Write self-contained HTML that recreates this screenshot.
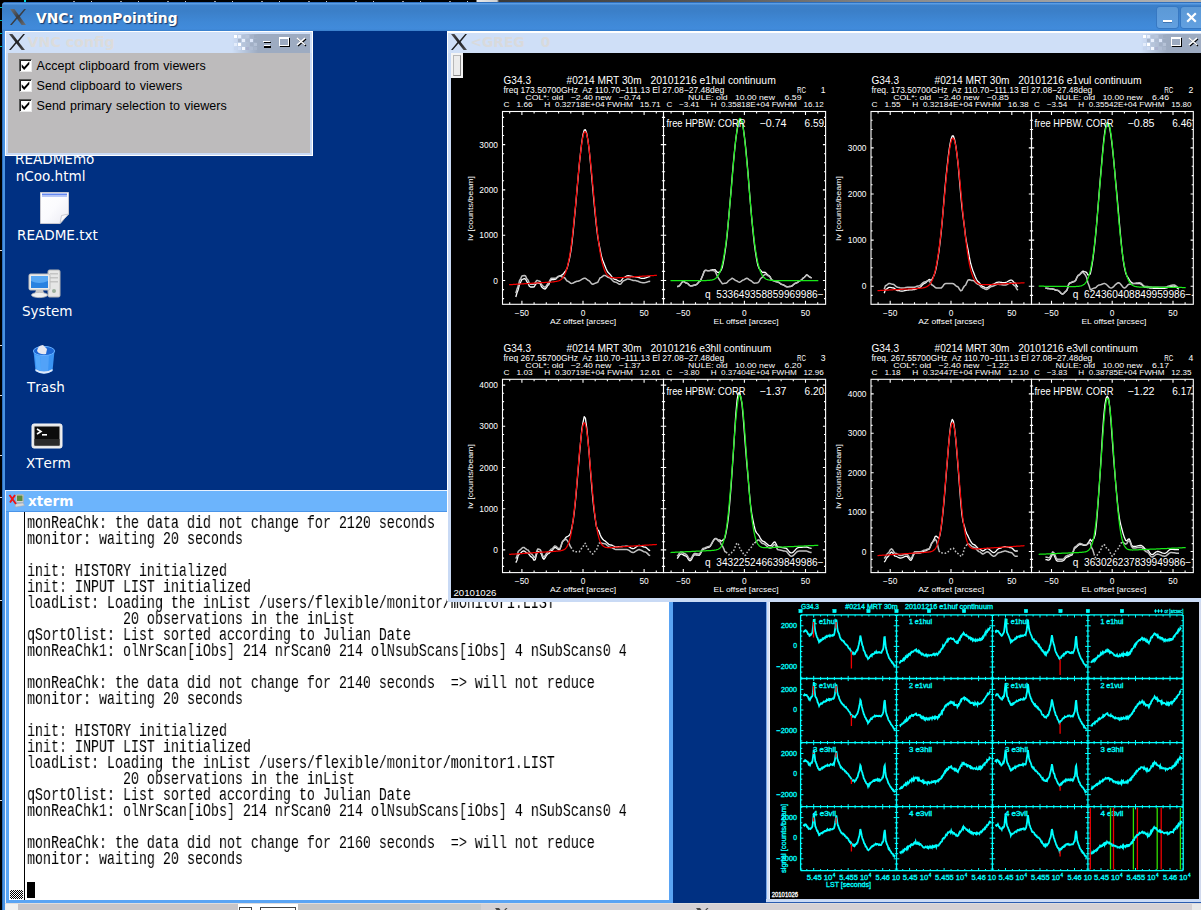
<!DOCTYPE html>
<html lang="en"><head><meta charset="utf-8"><title>VNC: monPointing</title>
<style>
html,body{margin:0;padding:0;background:#000;}
body{width:1201px;height:910px;overflow:hidden;position:relative;font-family:"DejaVu Sans","Liberation Sans",sans-serif;}
.a{position:absolute;}
#topstrip{left:0;top:0;width:1201px;height:2.5px;background:linear-gradient(90deg,#000 0,#000 476px,#e8e8e8 477px,#d0d0d0 497px,#3a3a3a 499px,#555 700px,#8a8a8a 900px,#b4b4b4 1201px);}
#outer{left:1.5px;top:2px;width:1199.5px;height:908px;background:#4a93e3;border-radius:4px 0 0 0;}
#otitle{left:2px;top:2px;width:1199px;height:29px;border-radius:4px 0 0 0;background:linear-gradient(180deg,#2e6fbd 0,#2e6fbd 1px,#5b9de4 1px,#5b9de4 2px,#3c80c9 3px,#3b7fc8 9px,#3f88d6 20px,#418bdb 27px,#3a7fcb 29px);}
.ot{left:36px;top:9px;font-weight:bold;font-size:13.8px;line-height:18px;color:#fff;text-shadow:1px 1px 1px rgba(10,30,70,.75);white-space:nowrap;}
.obtn{top:7px;width:21px;height:21px;border-radius:3px;background:linear-gradient(180deg,#5c99d6,#62a0e0);box-shadow:0 0 0 1px #3778c2;}
#desk{left:5px;top:31px;width:1196px;height:873px;background:#003082;}
.lbl{color:#fff;font-size:13.55px;line-height:17px;white-space:nowrap;font-kerning:none;margin-top:1px;}
.it{color:#dcdcdc;font-weight:bold;font-size:13.8px;line-height:18px;white-space:nowrap;}
.cb{width:11px;height:11px;background:#fff;border:1px solid #555;border-right-color:#e8e8e8;border-bottom-color:#e8e8e8;box-shadow:inset 1px 1px 0 #222;}
.cbl{font-family:"Liberation Sans",sans-serif;font-size:12.5px;word-spacing:.8px;line-height:14px;color:#000;white-space:nowrap;}
pre.xt{margin:0;font-family:"Liberation Mono","DejaVu Sans Mono",monospace;font-size:17.6px;line-height:16px;color:#000;white-space:pre;transform:scaleX(.75744);transform-origin:0 0;will-change:transform;}
svg text{white-space:pre;}
</style></head><body>
<div id="topstrip" class="a"></div>
<div class="a" style="left:0px;top:7px;width:1.5px;height:1px;background:#00b8b8;"></div>
<div class="a" style="left:0px;top:20px;width:1.5px;height:1px;background:#00b8b8;"></div>
<div class="a" style="left:0px;top:33px;width:1.5px;height:1px;background:#00b8b8;"></div>
<div class="a" style="left:0px;top:46px;width:1.5px;height:1px;background:#00b8b8;"></div>
<div class="a" style="left:0px;top:250px;width:1.5px;height:1px;background:#ddd;"></div>
<div class="a" style="left:0px;top:345px;width:1.5px;height:1px;background:#ddd;"></div>
<div class="a" style="left:0px;top:395px;width:1.5px;height:1px;background:#ddd;"></div>
<div class="a" style="left:0px;top:455px;width:1.5px;height:1px;background:#ddd;"></div>
<div class="a" style="left:0px;top:497px;width:1.5px;height:1px;background:#ddd;"></div>
<div class="a" style="left:0px;top:600px;width:1.5px;height:1px;background:#ddd;"></div>
<div class="a" style="left:0px;top:800px;width:1.5px;height:1px;background:#ddd;"></div>
<div id="outer" class="a"></div>
<div class="a" style="left:60px;top:1px;width:416px;height:1px;background:repeating-linear-gradient(90deg,transparent 0,transparent 13px,#999 13px,#999 15px,transparent 15px,transparent 31px,#ccc 31px,#ccc 32px,transparent 32px,transparent 47px);"></div>
<div class="a" style="left:24px;top:0px;width:2px;height:2px;background:#00d8d8;"></div>
<div class="a" style="left:1.5px;top:4px;width:1.2px;height:906px;background:#2e6fbd;"></div>
<div id="otitle" class="a"></div>
<svg class="a" style="left:10px;top:9px" width="16" height="16" viewBox="0 0 16 16"><defs><linearGradient id="xg10_9" x1="0" y1="0" x2="1" y2="1"><stop offset="0" stop-color="#6c7076"/><stop offset=".5" stop-color="#3a3d42"/><stop offset="1" stop-color="#6c7076"/></linearGradient></defs><path d="M0 0 L4.4 0 L16 16 L11.6 16 Z" fill="url(#xg10_9)"/><path d="M14.2 0 L16 0 L9.1 8.6 L8.1 7.3 Z M1.8 16 L0 16 L7 7.4 L8 8.7 Z" fill="#3a3d42"/></svg>
<div class="a ot">VNC: monPointing</div>
<div class="a obtn" style="left:1157px"><div class="a" style="left:6px;top:13px;width:9px;height:2px;background:#fff;box-shadow:0 1px 0 rgba(40,90,150,.6)"></div></div>
<div class="a obtn" style="left:1181px;width:22px;border-radius:3px 0 0 3px"><svg class="a" style="left:5px;top:5px" width="11" height="11" viewBox="0 0 11 11"><path d="M1.2 1.2 L9.8 9.8 M9.8 1.2 L1.2 9.8" stroke="#fff" stroke-width="2.2" fill="none"/></svg></div>
<div id="desk" class="a"></div>
<div class="a lbl" style="left:15px;top:150px">READMEmo</div>
<div class="a lbl" style="left:15.7px;top:167px">nCoo.html</div>
<svg class="a" style="left:38px;top:190px" width="34" height="36" viewBox="0 0 34 36">
<defs><linearGradient id="pg" x1="0" y1="0" x2="1" y2="1"><stop offset="0" stop-color="#ffffff"/><stop offset=".5" stop-color="#fbfbfe"/><stop offset="1" stop-color="#ebebf3"/></linearGradient></defs>
<path d="M2.5 2.5 H30.5 V24 L22 33.5 H2.5 Z" fill="url(#pg)" stroke="#c8c8d0" stroke-width="1"/>
<rect x="4" y="3.5" width="25" height="2" fill="#6488f0"/><rect x="4" y="5.5" width="25" height="1.5" fill="#b8c8f8"/>
<path d="M22 33.5 L23.5 25.5 L30.5 24 Z" fill="#f8f8fc" stroke="#c0c0c8" stroke-width=".8"/></svg>
<div class="a lbl" style="left:17px;top:226.3px">README.txt</div>
<svg class="a" style="left:27px;top:268px" width="36" height="32" viewBox="0 0 36 32">
<rect x="21" y="2" width="12" height="27" rx="1.5" fill="#e6e6e6" stroke="#b4b4b4"/>
<rect x="23" y="5" width="8" height="1.5" fill="#c4c4c4"/><rect x="23" y="9" width="8" height="1.5" fill="#c4c4c4"/><rect x="23" y="13" width="8" height="1.5" fill="#c4c4c4"/>
<circle cx="27" cy="23" r="2" fill="#9cb09c"/>
<rect x="2" y="6" width="21" height="16" rx="1.5" fill="#ececec" stroke="#bcbcbc"/>
<rect x="4" y="8" width="17" height="12" fill="#2a82e0"/><path d="M4 8 H21 V13 Q12 17 4 13 Z" fill="#58a8f4"/>
<path d="M9 22 H16 L17 25 H8 Z" fill="#c8c8c8"/><ellipse cx="12.5" cy="27" rx="8" ry="2.6" fill="#f0f0f0" stroke="#bdbdbd" stroke-width=".8"/></svg>
<div class="a lbl" style="left:22px;top:302px">System</div>
<svg class="a" style="left:31px;top:343px" width="26" height="34" viewBox="0 0 26 34">
<path d="M2.5 8 L4.5 28 Q13 33 21.5 28 L23.5 8 Z" fill="#3a94f4"/><path d="M9 12 L10 29.5 Q13 30.3 17 29.5 L18 12 Z" fill="#62acfa" opacity=".6"/>
<path d="M4.5 26 Q13 31 21.5 26 L21.5 28 Q13 33.5 4.5 28 Z" fill="#dfe9f8"/>
<ellipse cx="13" cy="8" rx="10.6" ry="4.6" fill="#1c66d4" stroke="#66b0ff" stroke-width="1"/>
<path d="M6 8 Q7 2 12 2 L16 6 L15 11 Q9 12 6 8 Z" fill="#e8e8f0"/>
<path d="M4 12 L5.5 26 Q8 27.5 10 28 L9 13 Z" fill="#5cb0ff" opacity=".7"/></svg>
<div class="a lbl" style="left:27px;top:378px">Trash</div>
<svg class="a" style="left:31px;top:423px" width="32" height="26" viewBox="0 0 32 26">
<rect x="1" y="1" width="30" height="24" rx="2" fill="#e6e6e6" stroke="#f8f8f8"/>
<rect x="3.5" y="3.5" width="25" height="19" fill="#0c0c0c"/><rect x="3.5" y="16" width="25" height="6.5" fill="#2a2a2a"/>
<path d="M6 6 L10 8.5 L6 11" stroke="#fff" stroke-width="1.6" fill="none"/><rect x="11" y="11" width="5" height="1.6" fill="#fff"/></svg>
<div class="a lbl" style="left:26px;top:454px">XTerm</div>
<div class="a" style="left:5px;top:31px;width:307.5px;height:125px;background:#ffffff;"></div>
<div class="a" style="left:6px;top:32px;width:305.5px;height:123px;background:#c9daf5;"></div>
<div class="a" style="left:6px;top:32px;width:305.5px;height:21px;background:#cfdff7;"></div>
<div class="a" style="left:232px;top:33.5px;width:77.5px;height:19.5px;background:linear-gradient(90deg,rgba(157,171,193,0) 0,#9dabc1 26px,#9dabc1 100%);"></div>
<div class="a" style="left:234px;top:35px;width:3px;height:3px;background:#ffffff;"></div><div class="a" style="left:238px;top:35px;width:3px;height:3px;background:#e6eefc;"></div><div class="a" style="left:242px;top:35px;width:3px;height:3px;background:#b4c2d8;"></div><div class="a" style="left:246px;top:35px;width:3px;height:3px;background:#b9c6dc;"></div><div class="a" style="left:250px;top:35px;width:3px;height:3px;background:#a6b3c9;"></div><div class="a" style="left:254px;top:35px;width:3px;height:3px;background:#9dabc1;"></div><div class="a" style="left:234px;top:39px;width:3px;height:3px;background:#cbd9f2;"></div><div class="a" style="left:238px;top:39px;width:3px;height:3px;background:#a9b6cb;"></div><div class="a" style="left:242px;top:39px;width:3px;height:3px;background:#e9f0fd;"></div><div class="a" style="left:246px;top:39px;width:3px;height:3px;background:#aebbd1;"></div><div class="a" style="left:250px;top:39px;width:3px;height:3px;background:#dde7fa;"></div><div class="a" style="left:254px;top:39px;width:3px;height:3px;background:#9dabc1;"></div><div class="a" style="left:234px;top:43px;width:3px;height:3px;background:#e3ecfb;"></div><div class="a" style="left:238px;top:43px;width:3px;height:3px;background:#ffffff;"></div><div class="a" style="left:242px;top:43px;width:3px;height:3px;background:#b6c4da;"></div><div class="a" style="left:246px;top:43px;width:3px;height:3px;background:#b2bfd5;"></div><div class="a" style="left:250px;top:43px;width:3px;height:3px;background:#a3b0c6;"></div><div class="a" style="left:254px;top:43px;width:3px;height:3px;background:#b5c2d7;"></div><div class="a" style="left:234px;top:47px;width:3px;height:3px;background:#c6d5ef;"></div><div class="a" style="left:238px;top:47px;width:3px;height:3px;background:#cddbf4;"></div><div class="a" style="left:242px;top:47px;width:3px;height:3px;background:#f3f7ff;"></div><div class="a" style="left:246px;top:47px;width:3px;height:3px;background:#aab2cf;"></div><div class="a" style="left:250px;top:47px;width:3px;height:3px;background:#b0bdd3;"></div><div class="a" style="left:254px;top:47px;width:3px;height:3px;background:#a9b6cc;"></div>
<svg class="a" style="left:9px;top:34px" width="16" height="16" viewBox="0 0 16 16"><defs><linearGradient id="xg9_34" x1="0" y1="0" x2="1" y2="1"><stop offset="0" stop-color="#4c4c50"/><stop offset=".5" stop-color="#202022"/><stop offset="1" stop-color="#4c4c50"/></linearGradient></defs><path d="M0 0 L3.4 0 L16 16 L12.6 16 Z" fill="url(#xg9_34)"/><path d="M14.2 0 L16 0 L9.1 8.6 L8.1 7.3 Z M1.8 16 L0 16 L7 7.4 L8 8.7 Z" fill="#202022"/></svg>
<div class="a it" style="left:27.6px;top:33px;font-size:14.2px">VNC config</div>
<div class="a" style="left:263px;top:41px;width:7px;height:1px;background:#fff;"></div><div class="a" style="left:263.5px;top:42px;width:7px;height:1.2px;background:#000;"></div><div class="a" style="left:263.5px;top:45.3px;width:6.5px;height:1px;background:#fff;"></div><div class="a" style="left:263.5px;top:46.3px;width:7.5px;height:1.4px;background:#000;"></div>
<div class="a" style="left:279px;top:37px;width:10px;height:9px;background:transparent;border:1px solid #fff;border-top-width:2px;box-sizing:border-box;box-shadow:1px 1px 0 #000"></div>
<svg class="a" style="left:296px;top:37px" width="11" height="10" viewBox="0 0 11 10"><path d="M2 2 L10 9 M10 2 L2 9" stroke="#000" stroke-width="1.3" fill="none"/><path d="M1 1 L9 8 M9 1 L1 8" stroke="#fff" stroke-width="1.5" fill="none"/></svg>
<div class="a" style="left:8px;top:53px;width:301.5px;height:100px;background:#bdbbbc;"></div>
<div class="a cb" style="left:19px;top:59px"><svg class="a" style="left:0;top:0" width="11" height="11" viewBox="0 0 11 11"><path d="M1.7 4.3 L4.2 7 L9.3 1.4 L9.3 4.3 L4.2 10 L1.7 7.3 Z" fill="#000"/></svg></div><div class="a cbl" style="left:36.6px;top:59px">Accept clipboard from viewers</div>
<div class="a cb" style="left:19px;top:79px"><svg class="a" style="left:0;top:0" width="11" height="11" viewBox="0 0 11 11"><path d="M1.7 4.3 L4.2 7 L9.3 1.4 L9.3 4.3 L4.2 10 L1.7 7.3 Z" fill="#000"/></svg></div><div class="a cbl" style="left:36.6px;top:79px">Send clipboard to viewers</div>
<div class="a cb" style="left:19px;top:99px"><svg class="a" style="left:0;top:0" width="11" height="11" viewBox="0 0 11 11"><path d="M1.7 4.3 L4.2 7 L9.3 1.4 L9.3 4.3 L4.2 10 L1.7 7.3 Z" fill="#000"/></svg></div><div class="a cbl" style="left:36.6px;top:99px">Send primary selection to viewers</div>
<div class="a" style="left:5px;top:490px;width:668px;height:413px;background:#5aa4f4;"></div>
<div class="a" style="left:5px;top:490px;width:668px;height:1px;background:#e8f2ff;"></div>
<div class="a" style="left:5px;top:490px;width:1px;height:413px;background:#e8f2ff;"></div>
<div class="a" style="left:6px;top:491px;width:667px;height:20px;background:#6cb4fc;"></div>
<div class="a" style="left:6px;top:511px;width:667px;height:1px;background:#4a94e8;"></div>
<div class="a" style="left:9px;top:512px;width:660px;height:388px;background:#ffffff;"></div>
<svg class="a" style="left:8px;top:493px" width="18" height="16" viewBox="0 0 18 16">
<rect x="8" y="1.5" width="7.5" height="8" rx="1" fill="#cfcfcf" stroke="#a8a8a8" stroke-width=".6"/><rect x="9" y="2.5" width="5.5" height="5.5" fill="#5a8a3c"/>
<path d="M7 11 L15 10 L16.5 12.5 L7.5 14 Z" fill="#d8d8d8" stroke="#aaa" stroke-width=".5"/>
<path d="M1.5 2 L8 11 M7 2 L2 9.5" stroke="#f01414" stroke-width="1.9" fill="none"/></svg>
<div class="a" style="left:28px;top:492px;font-weight:bold;font-size:13.6px;line-height:18px;color:#fff;white-space:nowrap">xterm</div>
<div class="a" style="left:24px;top:512px;width:1px;height:388px;background:#000;"></div>
<div class="a" style="left:10px;top:890px;width:13px;height:9px;background:repeating-conic-gradient(#000 0 25%,#fff 0 50%) 0 0/2px 2px;"></div>
<pre class="a xt" style="left:26.6px;top:515px">monReaChk: the data did not change for 2120 seconds
monitor: waiting 20 seconds

init: HISTORY initialized
init: INPUT LIST initialized
loadList: Loading the inList /users/flexible/monitor/monitor1.LIST
            20 observations in the inList
qSortOlist: List sorted according to Julian Date
monReaChk1: olNrScan[iObs] 214 nrScan0 214 olNsubScans[iObs] 4 nSubScans0 4

monReaChk: the data did not change for 2140 seconds  =&gt; will not reduce
monitor: waiting 20 seconds

init: HISTORY initialized
init: INPUT LIST initialized
loadList: Loading the inList /users/flexible/monitor/monitor1.LIST
            20 observations in the inList
qSortOlist: List sorted according to Julian Date
monReaChk1: olNrScan[iObs] 214 nrScan0 214 olNsubScans[iObs] 4 nSubScans0 4

monReaChk: the data did not change for 2160 seconds  =&gt; will not reduce
monitor: waiting 20 seconds
</pre>
<div class="a" style="left:27px;top:882px;width:8px;height:16px;background:#000;"></div>
<div class="a" style="left:766px;top:602px;width:435px;height:301px;background:#d4e0f6;"></div>
<div class="a" style="left:766px;top:602px;width:1px;height:301px;background:#7aa8e8;"></div>
<div class="a" style="left:769px;top:602px;width:1px;height:297px;background:#eef2fb;"></div>
<div class="a" style="left:766px;top:899px;width:435px;height:4.4px;background:linear-gradient(180deg,#c9daf5 0,#c9daf5 3px,#2a5cb0 3.2px,#2a5cb0 4.4px);"></div>
<div class="a" style="left:770px;top:602px;width:429px;height:297px;background:#000;"></div>
<div class="a" style="left:1199px;top:602px;width:2px;height:297px;background:#d0d8ec;"></div>
<svg class="a" style="left:770px;top:602px" width="431" height="298" viewBox="770 602 431 298" font-family="Liberation Sans, DejaVu Sans, sans-serif" stroke="#00ffff" stroke-width="0.3"><path d="M800.6 614.9 V870.6 M896.5 614.9 V870.6 M992.4 614.9 V870.6 M1087.9 614.9 V870.6 M1183.2 614.9 V870.6 M800.6 614.9 H1183.2 M800.6 678.5 H1183.2 M800.6 742.6 H1183.2 M800.6 806.7 H1183.2 M800.6 870.6 H1183.2 " stroke="#00ffff" stroke-width="1.3" fill="none"/><path d="M806.8 614.9 v1.6 M806.8 676.9 v3.2 M806.8 741.0 v3.2 M806.8 805.1 v3.2 M806.8 870.6 v-1.6 M813.7 614.9 v2.6 M813.7 675.9 v5.2 M813.7 740.0 v5.2 M813.7 804.1 v5.2 M813.7 870.6 v-2.6 M820.6 614.9 v1.6 M820.6 676.9 v3.2 M820.6 741.0 v3.2 M820.6 805.1 v3.2 M820.6 870.6 v-1.6 M827.5 614.9 v1.6 M827.5 676.9 v3.2 M827.5 741.0 v3.2 M827.5 805.1 v3.2 M827.5 870.6 v-1.6 M834.4 614.9 v1.6 M834.4 676.9 v3.2 M834.4 741.0 v3.2 M834.4 805.1 v3.2 M834.4 870.6 v-1.6 M841.3 614.9 v1.6 M841.3 676.9 v3.2 M841.3 741.0 v3.2 M841.3 805.1 v3.2 M841.3 870.6 v-1.6 M848.2 614.9 v2.6 M848.2 675.9 v5.2 M848.2 740.0 v5.2 M848.2 804.1 v5.2 M848.2 870.6 v-2.6 M855.1 614.9 v1.6 M855.1 676.9 v3.2 M855.1 741.0 v3.2 M855.1 805.1 v3.2 M855.1 870.6 v-1.6 M862.0 614.9 v1.6 M862.0 676.9 v3.2 M862.0 741.0 v3.2 M862.0 805.1 v3.2 M862.0 870.6 v-1.6 M868.9 614.9 v1.6 M868.9 676.9 v3.2 M868.9 741.0 v3.2 M868.9 805.1 v3.2 M868.9 870.6 v-1.6 M875.8 614.9 v1.6 M875.8 676.9 v3.2 M875.8 741.0 v3.2 M875.8 805.1 v3.2 M875.8 870.6 v-1.6 M882.7 614.9 v2.6 M882.7 675.9 v5.2 M882.7 740.0 v5.2 M882.7 804.1 v5.2 M882.7 870.6 v-2.6 M889.6 614.9 v1.6 M889.6 676.9 v3.2 M889.6 741.0 v3.2 M889.6 805.1 v3.2 M889.6 870.6 v-1.6 M902.7 614.9 v1.6 M902.7 676.9 v3.2 M902.7 741.0 v3.2 M902.7 805.1 v3.2 M902.7 870.6 v-1.6 M909.6 614.9 v2.6 M909.6 675.9 v5.2 M909.6 740.0 v5.2 M909.6 804.1 v5.2 M909.6 870.6 v-2.6 M916.5 614.9 v1.6 M916.5 676.9 v3.2 M916.5 741.0 v3.2 M916.5 805.1 v3.2 M916.5 870.6 v-1.6 M923.4 614.9 v1.6 M923.4 676.9 v3.2 M923.4 741.0 v3.2 M923.4 805.1 v3.2 M923.4 870.6 v-1.6 M930.3 614.9 v1.6 M930.3 676.9 v3.2 M930.3 741.0 v3.2 M930.3 805.1 v3.2 M930.3 870.6 v-1.6 M937.2 614.9 v1.6 M937.2 676.9 v3.2 M937.2 741.0 v3.2 M937.2 805.1 v3.2 M937.2 870.6 v-1.6 M944.1 614.9 v2.6 M944.1 675.9 v5.2 M944.1 740.0 v5.2 M944.1 804.1 v5.2 M944.1 870.6 v-2.6 M951.0 614.9 v1.6 M951.0 676.9 v3.2 M951.0 741.0 v3.2 M951.0 805.1 v3.2 M951.0 870.6 v-1.6 M957.9 614.9 v1.6 M957.9 676.9 v3.2 M957.9 741.0 v3.2 M957.9 805.1 v3.2 M957.9 870.6 v-1.6 M964.8 614.9 v1.6 M964.8 676.9 v3.2 M964.8 741.0 v3.2 M964.8 805.1 v3.2 M964.8 870.6 v-1.6 M971.7 614.9 v1.6 M971.7 676.9 v3.2 M971.7 741.0 v3.2 M971.7 805.1 v3.2 M971.7 870.6 v-1.6 M978.6 614.9 v2.6 M978.6 675.9 v5.2 M978.6 740.0 v5.2 M978.6 804.1 v5.2 M978.6 870.6 v-2.6 M985.5 614.9 v1.6 M985.5 676.9 v3.2 M985.5 741.0 v3.2 M985.5 805.1 v3.2 M985.5 870.6 v-1.6 M998.6 614.9 v1.6 M998.6 676.9 v3.2 M998.6 741.0 v3.2 M998.6 805.1 v3.2 M998.6 870.6 v-1.6 M1005.5 614.9 v2.6 M1005.5 675.9 v5.2 M1005.5 740.0 v5.2 M1005.5 804.1 v5.2 M1005.5 870.6 v-2.6 M1012.4 614.9 v1.6 M1012.4 676.9 v3.2 M1012.4 741.0 v3.2 M1012.4 805.1 v3.2 M1012.4 870.6 v-1.6 M1019.3 614.9 v1.6 M1019.3 676.9 v3.2 M1019.3 741.0 v3.2 M1019.3 805.1 v3.2 M1019.3 870.6 v-1.6 M1026.2 614.9 v1.6 M1026.2 676.9 v3.2 M1026.2 741.0 v3.2 M1026.2 805.1 v3.2 M1026.2 870.6 v-1.6 M1033.1 614.9 v1.6 M1033.1 676.9 v3.2 M1033.1 741.0 v3.2 M1033.1 805.1 v3.2 M1033.1 870.6 v-1.6 M1040.0 614.9 v2.6 M1040.0 675.9 v5.2 M1040.0 740.0 v5.2 M1040.0 804.1 v5.2 M1040.0 870.6 v-2.6 M1046.9 614.9 v1.6 M1046.9 676.9 v3.2 M1046.9 741.0 v3.2 M1046.9 805.1 v3.2 M1046.9 870.6 v-1.6 M1053.8 614.9 v1.6 M1053.8 676.9 v3.2 M1053.8 741.0 v3.2 M1053.8 805.1 v3.2 M1053.8 870.6 v-1.6 M1060.7 614.9 v1.6 M1060.7 676.9 v3.2 M1060.7 741.0 v3.2 M1060.7 805.1 v3.2 M1060.7 870.6 v-1.6 M1067.6 614.9 v1.6 M1067.6 676.9 v3.2 M1067.6 741.0 v3.2 M1067.6 805.1 v3.2 M1067.6 870.6 v-1.6 M1074.5 614.9 v2.6 M1074.5 675.9 v5.2 M1074.5 740.0 v5.2 M1074.5 804.1 v5.2 M1074.5 870.6 v-2.6 M1081.4 614.9 v1.6 M1081.4 676.9 v3.2 M1081.4 741.0 v3.2 M1081.4 805.1 v3.2 M1081.4 870.6 v-1.6 M1094.1 614.9 v1.6 M1094.1 676.9 v3.2 M1094.1 741.0 v3.2 M1094.1 805.1 v3.2 M1094.1 870.6 v-1.6 M1101.0 614.9 v2.6 M1101.0 675.9 v5.2 M1101.0 740.0 v5.2 M1101.0 804.1 v5.2 M1101.0 870.6 v-2.6 M1107.9 614.9 v1.6 M1107.9 676.9 v3.2 M1107.9 741.0 v3.2 M1107.9 805.1 v3.2 M1107.9 870.6 v-1.6 M1114.8 614.9 v1.6 M1114.8 676.9 v3.2 M1114.8 741.0 v3.2 M1114.8 805.1 v3.2 M1114.8 870.6 v-1.6 M1121.7 614.9 v1.6 M1121.7 676.9 v3.2 M1121.7 741.0 v3.2 M1121.7 805.1 v3.2 M1121.7 870.6 v-1.6 M1128.6 614.9 v1.6 M1128.6 676.9 v3.2 M1128.6 741.0 v3.2 M1128.6 805.1 v3.2 M1128.6 870.6 v-1.6 M1135.5 614.9 v2.6 M1135.5 675.9 v5.2 M1135.5 740.0 v5.2 M1135.5 804.1 v5.2 M1135.5 870.6 v-2.6 M1142.4 614.9 v1.6 M1142.4 676.9 v3.2 M1142.4 741.0 v3.2 M1142.4 805.1 v3.2 M1142.4 870.6 v-1.6 M1149.3 614.9 v1.6 M1149.3 676.9 v3.2 M1149.3 741.0 v3.2 M1149.3 805.1 v3.2 M1149.3 870.6 v-1.6 M1156.2 614.9 v1.6 M1156.2 676.9 v3.2 M1156.2 741.0 v3.2 M1156.2 805.1 v3.2 M1156.2 870.6 v-1.6 M1163.1 614.9 v1.6 M1163.1 676.9 v3.2 M1163.1 741.0 v3.2 M1163.1 805.1 v3.2 M1163.1 870.6 v-1.6 M1170.0 614.9 v2.6 M1170.0 675.9 v5.2 M1170.0 740.0 v5.2 M1170.0 804.1 v5.2 M1170.0 870.6 v-2.6 M1176.9 614.9 v1.6 M1176.9 676.9 v3.2 M1176.9 741.0 v3.2 M1176.9 805.1 v3.2 M1176.9 870.6 v-1.6 M800.6 615.5 h1.7 M894.8 615.5 h3.4 M990.6999999999999 615.5 h3.4 M1086.2 615.5 h3.4 M1183.2 615.5 h-1.7 M800.6 620.6 h1.7 M894.8 620.6 h3.4 M990.6999999999999 620.6 h3.4 M1086.2 620.6 h3.4 M1183.2 620.6 h-1.7 M800.6 625.8 h2.8 M893.7 625.8 h5.6 M989.6 625.8 h5.6 M1085.1000000000001 625.8 h5.6 M1183.2 625.8 h-2.8 M800.6 631.0 h1.7 M894.8 631.0 h3.4 M990.6999999999999 631.0 h3.4 M1086.2 631.0 h3.4 M1183.2 631.0 h-1.7 M800.6 636.1 h1.7 M894.8 636.1 h3.4 M990.6999999999999 636.1 h3.4 M1086.2 636.1 h3.4 M1183.2 636.1 h-1.7 M800.6 641.2 h1.7 M894.8 641.2 h3.4 M990.6999999999999 641.2 h3.4 M1086.2 641.2 h3.4 M1183.2 641.2 h-1.7 M800.6 646.4 h2.8 M893.7 646.4 h5.6 M989.6 646.4 h5.6 M1085.1000000000001 646.4 h5.6 M1183.2 646.4 h-2.8 M800.6 651.5 h1.7 M894.8 651.5 h3.4 M990.6999999999999 651.5 h3.4 M1086.2 651.5 h3.4 M1183.2 651.5 h-1.7 M800.6 656.7 h1.7 M894.8 656.7 h3.4 M990.6999999999999 656.7 h3.4 M1086.2 656.7 h3.4 M1183.2 656.7 h-1.7 M800.6 661.9 h1.7 M894.8 661.9 h3.4 M990.6999999999999 661.9 h3.4 M1086.2 661.9 h3.4 M1183.2 661.9 h-1.7 M800.6 667.0 h2.8 M893.7 667.0 h5.6 M989.6 667.0 h5.6 M1085.1000000000001 667.0 h5.6 M1183.2 667.0 h-2.8 M800.6 672.1 h1.7 M894.8 672.1 h3.4 M990.6999999999999 672.1 h3.4 M1086.2 672.1 h3.4 M1183.2 672.1 h-1.7 M800.6 677.3 h1.7 M894.8 677.3 h3.4 M990.6999999999999 677.3 h3.4 M1086.2 677.3 h3.4 M1183.2 677.3 h-1.7 M800.6 679.1 h1.7 M894.8 679.1 h3.4 M990.6999999999999 679.1 h3.4 M1086.2 679.1 h3.4 M1183.2 679.1 h-1.7 M800.6 684.2 h1.7 M894.8 684.2 h3.4 M990.6999999999999 684.2 h3.4 M1086.2 684.2 h3.4 M1183.2 684.2 h-1.7 M800.6 689.4 h2.8 M893.7 689.4 h5.6 M989.6 689.4 h5.6 M1085.1000000000001 689.4 h5.6 M1183.2 689.4 h-2.8 M800.6 694.6 h1.7 M894.8 694.6 h3.4 M990.6999999999999 694.6 h3.4 M1086.2 694.6 h3.4 M1183.2 694.6 h-1.7 M800.6 699.7 h1.7 M894.8 699.7 h3.4 M990.6999999999999 699.7 h3.4 M1086.2 699.7 h3.4 M1183.2 699.7 h-1.7 M800.6 704.9 h1.7 M894.8 704.9 h3.4 M990.6999999999999 704.9 h3.4 M1086.2 704.9 h3.4 M1183.2 704.9 h-1.7 M800.6 710.0 h2.8 M893.7 710.0 h5.6 M989.6 710.0 h5.6 M1085.1000000000001 710.0 h5.6 M1183.2 710.0 h-2.8 M800.6 715.1 h1.7 M894.8 715.1 h3.4 M990.6999999999999 715.1 h3.4 M1086.2 715.1 h3.4 M1183.2 715.1 h-1.7 M800.6 720.3 h1.7 M894.8 720.3 h3.4 M990.6999999999999 720.3 h3.4 M1086.2 720.3 h3.4 M1183.2 720.3 h-1.7 M800.6 725.5 h1.7 M894.8 725.5 h3.4 M990.6999999999999 725.5 h3.4 M1086.2 725.5 h3.4 M1183.2 725.5 h-1.7 M800.6 730.6 h2.8 M893.7 730.6 h5.6 M989.6 730.6 h5.6 M1085.1000000000001 730.6 h5.6 M1183.2 730.6 h-2.8 M800.6 735.8 h1.7 M894.8 735.8 h3.4 M990.6999999999999 735.8 h3.4 M1086.2 735.8 h3.4 M1183.2 735.8 h-1.7 M800.6 740.9 h1.7 M894.8 740.9 h3.4 M990.6999999999999 740.9 h3.4 M1086.2 740.9 h3.4 M1183.2 740.9 h-1.7 M800.6 743.2 h1.7 M894.8 743.2 h3.4 M990.6999999999999 743.2 h3.4 M1086.2 743.2 h3.4 M1183.2 743.2 h-1.7 M800.6 748.4 h1.7 M894.8 748.4 h3.4 M990.6999999999999 748.4 h3.4 M1086.2 748.4 h3.4 M1183.2 748.4 h-1.7 M800.6 753.5 h2.8 M893.7 753.5 h5.6 M989.6 753.5 h5.6 M1085.1000000000001 753.5 h5.6 M1183.2 753.5 h-2.8 M800.6 758.7 h1.7 M894.8 758.7 h3.4 M990.6999999999999 758.7 h3.4 M1086.2 758.7 h3.4 M1183.2 758.7 h-1.7 M800.6 763.8 h1.7 M894.8 763.8 h3.4 M990.6999999999999 763.8 h3.4 M1086.2 763.8 h3.4 M1183.2 763.8 h-1.7 M800.6 769.0 h1.7 M894.8 769.0 h3.4 M990.6999999999999 769.0 h3.4 M1086.2 769.0 h3.4 M1183.2 769.0 h-1.7 M800.6 774.1 h2.8 M893.7 774.1 h5.6 M989.6 774.1 h5.6 M1085.1000000000001 774.1 h5.6 M1183.2 774.1 h-2.8 M800.6 779.2 h1.7 M894.8 779.2 h3.4 M990.6999999999999 779.2 h3.4 M1086.2 779.2 h3.4 M1183.2 779.2 h-1.7 M800.6 784.4 h1.7 M894.8 784.4 h3.4 M990.6999999999999 784.4 h3.4 M1086.2 784.4 h3.4 M1183.2 784.4 h-1.7 M800.6 789.6 h1.7 M894.8 789.6 h3.4 M990.6999999999999 789.6 h3.4 M1086.2 789.6 h3.4 M1183.2 789.6 h-1.7 M800.6 794.7 h2.8 M893.7 794.7 h5.6 M989.6 794.7 h5.6 M1085.1000000000001 794.7 h5.6 M1183.2 794.7 h-2.8 M800.6 799.9 h1.7 M894.8 799.9 h3.4 M990.6999999999999 799.9 h3.4 M1086.2 799.9 h3.4 M1183.2 799.9 h-1.7 M800.6 805.0 h1.7 M894.8 805.0 h3.4 M990.6999999999999 805.0 h3.4 M1086.2 805.0 h3.4 M1183.2 805.0 h-1.7 M800.6 807.3 h1.7 M894.8 807.3 h3.4 M990.6999999999999 807.3 h3.4 M1086.2 807.3 h3.4 M1183.2 807.3 h-1.7 M800.6 812.5 h1.7 M894.8 812.5 h3.4 M990.6999999999999 812.5 h3.4 M1086.2 812.5 h3.4 M1183.2 812.5 h-1.7 M800.6 817.6 h2.8 M893.7 817.6 h5.6 M989.6 817.6 h5.6 M1085.1000000000001 817.6 h5.6 M1183.2 817.6 h-2.8 M800.6 822.8 h1.7 M894.8 822.8 h3.4 M990.6999999999999 822.8 h3.4 M1086.2 822.8 h3.4 M1183.2 822.8 h-1.7 M800.6 827.9 h1.7 M894.8 827.9 h3.4 M990.6999999999999 827.9 h3.4 M1086.2 827.9 h3.4 M1183.2 827.9 h-1.7 M800.6 833.1 h1.7 M894.8 833.1 h3.4 M990.6999999999999 833.1 h3.4 M1086.2 833.1 h3.4 M1183.2 833.1 h-1.7 M800.6 838.2 h2.8 M893.7 838.2 h5.6 M989.6 838.2 h5.6 M1085.1000000000001 838.2 h5.6 M1183.2 838.2 h-2.8 M800.6 843.4 h1.7 M894.8 843.4 h3.4 M990.6999999999999 843.4 h3.4 M1086.2 843.4 h3.4 M1183.2 843.4 h-1.7 M800.6 848.5 h1.7 M894.8 848.5 h3.4 M990.6999999999999 848.5 h3.4 M1086.2 848.5 h3.4 M1183.2 848.5 h-1.7 M800.6 853.7 h1.7 M894.8 853.7 h3.4 M990.6999999999999 853.7 h3.4 M1086.2 853.7 h3.4 M1183.2 853.7 h-1.7 M800.6 858.8 h2.8 M893.7 858.8 h5.6 M989.6 858.8 h5.6 M1085.1000000000001 858.8 h5.6 M1183.2 858.8 h-2.8 M800.6 864.0 h1.7 M894.8 864.0 h3.4 M990.6999999999999 864.0 h3.4 M1086.2 864.0 h3.4 M1183.2 864.0 h-1.7 M800.6 869.1 h1.7 M894.8 869.1 h3.4 M990.6999999999999 869.1 h3.4 M1086.2 869.1 h3.4 M1183.2 869.1 h-1.7 " stroke="#00ffff" stroke-width="1" fill="none"/><rect x="798.8000000000001" y="609.2" width="3.6" height="3.6" fill="#00ffff"/><rect x="832.7" y="609.2" width="3.6" height="3.6" fill="#00ffff"/><rect x="866.7" y="609.2" width="3.6" height="3.6" fill="#00ffff"/><rect x="894.7" y="609.2" width="3.6" height="3.6" fill="#00ffff"/><rect x="927.2" y="609.2" width="3.6" height="3.6" fill="#00ffff"/><rect x="962.2" y="609.2" width="3.6" height="3.6" fill="#00ffff"/><rect x="1024.2" y="609.2" width="3.6" height="3.6" fill="#00ffff"/><rect x="1058.7" y="609.2" width="3.6" height="3.6" fill="#00ffff"/><rect x="1086.1000000000001" y="609.2" width="3.6" height="3.6" fill="#00ffff"/><rect x="1120.2" y="609.2" width="3.6" height="3.6" fill="#00ffff"/><path d="M1154 611 h9 M1155.5 609.3 v3.4 M1158.5 609.3 v3.4 M1161.5 609.3 v3.4" stroke="#00ffff" stroke-width="1.1"/><text x="801.0" y="609.3" font-size="6.8" fill="#00ffff" text-anchor="start" textLength="18.0" lengthAdjust="spacingAndGlyphs">G34.3</text><text x="845.3" y="609.3" font-size="6.8" fill="#00ffff" text-anchor="start" textLength="52.4" lengthAdjust="spacingAndGlyphs">#0214 MRT 30m</text><text x="905.0" y="609.3" font-size="6.8" fill="#00ffff" text-anchor="start" textLength="88.0" lengthAdjust="spacingAndGlyphs">20101216 e1huf continuum</text><text x="1183.5" y="613.0" font-size="5.6" fill="#00ffff" text-anchor="end" textLength="19.0" lengthAdjust="spacingAndGlyphs">or [arcsec]</text><text x="813.1" y="624.2" font-size="6.6" fill="#00ffff" text-anchor="start" textLength="23.0" lengthAdjust="spacingAndGlyphs">1 e1hul</text><text x="909.0" y="624.2" font-size="6.6" fill="#00ffff" text-anchor="start" textLength="23.0" lengthAdjust="spacingAndGlyphs">1 e1hul</text><text x="1004.9" y="624.2" font-size="6.6" fill="#00ffff" text-anchor="start" textLength="23.0" lengthAdjust="spacingAndGlyphs">1 e1hul</text><text x="1100.4" y="624.2" font-size="6.6" fill="#00ffff" text-anchor="start" textLength="23.0" lengthAdjust="spacingAndGlyphs">1 e1hul</text><text x="813.1" y="687.8" font-size="6.6" fill="#00ffff" text-anchor="start" textLength="23.0" lengthAdjust="spacingAndGlyphs">2 e1vul</text><text x="909.0" y="687.8" font-size="6.6" fill="#00ffff" text-anchor="start" textLength="23.0" lengthAdjust="spacingAndGlyphs">2 e1vul</text><text x="1004.9" y="687.8" font-size="6.6" fill="#00ffff" text-anchor="start" textLength="23.0" lengthAdjust="spacingAndGlyphs">2 e1vul</text><text x="1100.4" y="687.8" font-size="6.6" fill="#00ffff" text-anchor="start" textLength="23.0" lengthAdjust="spacingAndGlyphs">2 e1vul</text><text x="813.1" y="751.9" font-size="6.6" fill="#00ffff" text-anchor="start" textLength="23.0" lengthAdjust="spacingAndGlyphs">3 e3hll</text><text x="909.0" y="751.9" font-size="6.6" fill="#00ffff" text-anchor="start" textLength="23.0" lengthAdjust="spacingAndGlyphs">3 e3hll</text><text x="1004.9" y="751.9" font-size="6.6" fill="#00ffff" text-anchor="start" textLength="23.0" lengthAdjust="spacingAndGlyphs">3 e3hll</text><text x="1100.4" y="751.9" font-size="6.6" fill="#00ffff" text-anchor="start" textLength="23.0" lengthAdjust="spacingAndGlyphs">3 e3hll</text><text x="813.1" y="816.0" font-size="6.6" fill="#00ffff" text-anchor="start" textLength="23.0" lengthAdjust="spacingAndGlyphs">4 e3vll</text><text x="909.0" y="816.0" font-size="6.6" fill="#00ffff" text-anchor="start" textLength="23.0" lengthAdjust="spacingAndGlyphs">4 e3vll</text><text x="1004.9" y="816.0" font-size="6.6" fill="#00ffff" text-anchor="start" textLength="23.0" lengthAdjust="spacingAndGlyphs">4 e3vll</text><text x="1100.4" y="816.0" font-size="6.6" fill="#00ffff" text-anchor="start" textLength="23.0" lengthAdjust="spacingAndGlyphs">4 e3vll</text><text x="797.0" y="628.1" font-size="6.8" fill="#00ffff" text-anchor="end" textLength="16.0" lengthAdjust="spacingAndGlyphs">2000</text><text x="797.0" y="648.3" font-size="6.8" fill="#00ffff" text-anchor="end">0</text><text x="797.0" y="669.2" font-size="6.8" fill="#00ffff" text-anchor="end" textLength="20.5" lengthAdjust="spacingAndGlyphs">−2000</text><text x="797.0" y="691.7" font-size="6.8" fill="#00ffff" text-anchor="end" textLength="16.0" lengthAdjust="spacingAndGlyphs">2000</text><text x="797.0" y="711.9" font-size="6.8" fill="#00ffff" text-anchor="end">0</text><text x="797.0" y="732.8" font-size="6.8" fill="#00ffff" text-anchor="end" textLength="20.5" lengthAdjust="spacingAndGlyphs">−2000</text><text x="797.0" y="755.8" font-size="6.8" fill="#00ffff" text-anchor="end" textLength="16.0" lengthAdjust="spacingAndGlyphs">2000</text><text x="797.0" y="776.0" font-size="6.8" fill="#00ffff" text-anchor="end">0</text><text x="797.0" y="796.9" font-size="6.8" fill="#00ffff" text-anchor="end" textLength="20.5" lengthAdjust="spacingAndGlyphs">−2000</text><text x="797.0" y="819.9" font-size="6.8" fill="#00ffff" text-anchor="end" textLength="16.0" lengthAdjust="spacingAndGlyphs">2000</text><text x="797.0" y="840.1" font-size="6.8" fill="#00ffff" text-anchor="end">0</text><text x="797.0" y="861.0" font-size="6.8" fill="#00ffff" text-anchor="end" textLength="20.5" lengthAdjust="spacingAndGlyphs">−2000</text><text transform="translate(786,838.5) rotate(-90)" font-size="7" fill="#00ffff" text-anchor="middle" textLength="69" lengthAdjust="spacingAndGlyphs">signal [counts/beam]</text><text x="806.8" y="879.8" font-size="6.8" fill="#00ffff" text-anchor="start" textLength="25.5" lengthAdjust="spacingAndGlyphs">5.45 10</text><text x="832.8" y="876.8" font-size="4.6" fill="#00ffff" text-anchor="start">4</text><text x="839.2" y="879.8" font-size="6.8" fill="#00ffff" text-anchor="start" textLength="29.0" lengthAdjust="spacingAndGlyphs">5.455 10</text><text x="868.8" y="876.8" font-size="4.6" fill="#00ffff" text-anchor="start">4</text><text x="875.6" y="879.8" font-size="6.8" fill="#00ffff" text-anchor="start" textLength="24.5" lengthAdjust="spacingAndGlyphs">5.46 10</text><text x="902.7" y="879.8" font-size="6.8" fill="#00ffff" text-anchor="start" textLength="25.5" lengthAdjust="spacingAndGlyphs">5.45 10</text><text x="928.7" y="876.8" font-size="4.6" fill="#00ffff" text-anchor="start">4</text><text x="935.1" y="879.8" font-size="6.8" fill="#00ffff" text-anchor="start" textLength="29.0" lengthAdjust="spacingAndGlyphs">5.455 10</text><text x="964.7" y="876.8" font-size="4.6" fill="#00ffff" text-anchor="start">4</text><text x="971.5" y="879.8" font-size="6.8" fill="#00ffff" text-anchor="start" textLength="24.5" lengthAdjust="spacingAndGlyphs">5.46 10</text><text x="998.6" y="879.8" font-size="6.8" fill="#00ffff" text-anchor="start" textLength="25.5" lengthAdjust="spacingAndGlyphs">5.45 10</text><text x="1024.6" y="876.8" font-size="4.6" fill="#00ffff" text-anchor="start">4</text><text x="1031.0" y="879.8" font-size="6.8" fill="#00ffff" text-anchor="start" textLength="29.0" lengthAdjust="spacingAndGlyphs">5.455 10</text><text x="1060.6" y="876.8" font-size="4.6" fill="#00ffff" text-anchor="start">4</text><text x="1067.4" y="879.8" font-size="6.8" fill="#00ffff" text-anchor="start" textLength="24.5" lengthAdjust="spacingAndGlyphs">5.46 10</text><text x="1094.1" y="879.8" font-size="6.8" fill="#00ffff" text-anchor="start" textLength="25.5" lengthAdjust="spacingAndGlyphs">5.45 10</text><text x="1120.1" y="876.8" font-size="4.6" fill="#00ffff" text-anchor="start">4</text><text x="1126.5" y="879.8" font-size="6.8" fill="#00ffff" text-anchor="start" textLength="29.0" lengthAdjust="spacingAndGlyphs">5.455 10</text><text x="1156.1" y="876.8" font-size="4.6" fill="#00ffff" text-anchor="start">4</text><text x="1162.9" y="879.8" font-size="6.8" fill="#00ffff" text-anchor="start" textLength="24.5" lengthAdjust="spacingAndGlyphs">5.46 10</text><text x="1187.9" y="876.8" font-size="4.6" fill="#00ffff" text-anchor="start">4</text><text x="826.0" y="887.0" font-size="6.8" fill="#00ffff" text-anchor="start" textLength="45.0" lengthAdjust="spacingAndGlyphs">LST [seconds]</text><text x="771.8" y="897.4" font-size="6.4" fill="#fff" text-anchor="start" textLength="26.2" lengthAdjust="spacingAndGlyphs" stroke="#fff">20101026</text><path d="M1090.3 807.7 V869.6" stroke="#f00000" stroke-width="1.3"/><path d="M1113.5 807.7 V869.6" stroke="#f00000" stroke-width="1.3"/><path d="M1137.4 807.7 V869.6" stroke="#f00000" stroke-width="1.3"/><path d="M1161.2 807.7 V869.6" stroke="#f00000" stroke-width="1.3"/><path d="M1110.5 807.7 V869.6" stroke="#30e000" stroke-width="1.3"/><path d="M1133.4 807.7 V869.6" stroke="#30e000" stroke-width="1.3"/><path d="M1157.2 807.7 V869.6" stroke="#30e000" stroke-width="1.3"/><path d="M1180.4 807.7 V869.6" stroke="#30e000" stroke-width="1.3"/><polyline points="803.3,632.3 803.8,631.9 804.2,631.2 804.7,630.7 805.2,630.8 805.7,630.4 806.2,631.1 806.6,631.1 807.1,632.1 807.6,632.9 808.1,634.1 808.6,634.2 809.0,634.6 809.5,636.0 810.0,635.7 810.5,634.4 811.0,634.7 811.4,634.1 811.9,633.2 812.4,632.6 812.9,627.8 813.4,623.5 813.8,619.0 814.3,623.2 814.8,627.4 815.3,631.3 815.8,633.1 816.2,634.6 816.7,636.2 817.2,637.6 817.7,638.1 818.1,639.9 818.6,640.4 819.1,642.1 819.6,641.4 820.1,640.3 820.5,641.0 821.0,640.2 821.5,640.4 822.0,639.9 822.5,638.6 822.9,639.0 823.4,639.2 823.9,638.0 824.4,637.8 824.9,638.2 825.3,636.9 825.8,637.1 826.3,636.3 826.8,637.1 827.3,636.8 827.7,636.2 828.2,635.5 828.7,635.7 829.2,635.9 829.7,636.4 830.1,635.1 830.6,635.6 831.1,635.7 831.6,635.4 832.1,635.6 832.5,635.1 833.0,635.6 833.5,635.0 834.0,634.9 834.5,632.9 834.9,630.3 835.4,626.8 835.9,622.7 836.4,619.5 836.9,623.6 837.3,627.8 837.8,630.8 838.3,632.2 838.8,633.2 839.2,634.0 839.7,636.2 840.2,637.7 840.7,638.9 841.2,639.3 841.6,639.9 842.1,640.5 842.6,640.4 843.1,640.8 843.6,641.7 844.0,641.6 844.5,642.9 845.0,643.5 845.5,644.1 846.0,644.2 846.4,645.2 846.9,645.2 847.4,645.5 847.9,646.5 848.4,647.7 848.8,648.3 849.3,648.8 849.8,648.6 850.3,650.0 850.8,650.6 851.2,651.5 851.7,652.6 852.2,652.4 852.7,653.4 853.2,652.7 853.6,653.1 854.1,654.2 854.6,653.8 855.1,653.8 855.6,652.1 856.0,651.5 856.5,651.5 857.0,649.9 857.5,650.0 857.9,648.6 858.4,646.1 858.9,644.4 859.4,641.6 859.9,639.2 860.3,635.6 860.8,637.4 861.3,640.4 861.8,642.8 862.3,645.3 862.7,645.8 863.2,647.5 863.7,650.5 864.2,650.9 864.7,651.8 865.1,652.9 865.6,654.7 866.1,655.9 866.6,655.6 867.1,657.1 867.5,657.7 868.0,658.9 868.5,658.2 869.0,658.2 869.5,657.2 869.9,656.4 870.4,656.2 870.9,655.0 871.4,654.7 871.9,655.6 872.3,654.1 872.8,654.0 873.3,654.2 873.8,654.0 874.3,653.7 874.7,652.4 875.2,652.7 875.7,652.9 876.2,651.6 876.6,652.6 877.1,652.8 877.6,652.2 878.1,652.1 878.6,652.6 879.0,652.5 879.5,652.1 880.0,652.6 880.5,652.6 881.0,652.8 881.4,652.8 881.9,651.4 882.4,650.3 882.9,649.8 883.4,647.8 883.8,643.6 884.3,637.3 884.8,637.2 885.3,642.2 885.8,647.3 886.2,649.1 886.7,650.6 887.2,653.2 887.7,653.9 888.2,655.4 888.6,656.6 889.1,658.2 889.6,658.6 890.1,659.4 890.6,660.4 891.0,660.7 891.5,661.5 892.0,662.5 892.5,662.3 893.0,663.3 893.4,664.2 893.9,664.8 894.4,665.8 894.9,665.6 895.3,666.4" fill="none" stroke="#00ffff" stroke-width="1.8" stroke-linejoin="miter"/><polyline points="899.4,661.5 899.9,662.6 900.3,662.2 900.8,661.0 901.3,661.2 901.8,660.8 902.3,661.0 902.7,660.8 903.2,659.0 903.7,658.4 904.2,659.6 904.7,658.4 905.1,658.6 905.6,656.6 906.1,657.1 906.6,657.2 907.0,655.9 907.5,656.9 908.0,656.4 908.5,654.3 909.0,653.9 909.4,654.5 909.9,654.9 910.4,653.4 910.9,652.6 911.4,652.7 911.8,651.7 912.3,651.7 912.8,651.9 913.3,651.7 913.8,650.9 914.2,650.6 914.7,650.2 915.2,650.4 915.7,649.8 916.2,649.5 916.6,651.4 917.1,651.1 917.6,651.5 918.1,650.8 918.6,652.7 919.0,652.7 919.5,651.4 920.0,652.2 920.5,653.3 921.0,653.6 921.4,654.3 921.9,653.6 922.4,654.7 922.9,654.7 923.4,654.3 923.8,655.0 924.3,655.7 924.8,655.8 925.3,655.2 925.7,655.5 926.2,654.5 926.7,655.1 927.2,656.3 927.7,655.4 928.1,654.9 928.6,655.5 929.1,655.8 929.6,655.6 930.1,654.9 930.5,655.0 931.0,655.1 931.5,655.5 932.0,654.9 932.5,654.6 932.9,654.7 933.4,653.7 933.9,653.6 934.4,654.9 934.9,655.3 935.3,654.5 935.8,654.0 936.3,653.5 936.8,654.1 937.3,654.9 937.7,654.4 938.2,653.4 938.7,653.4 939.2,651.6 939.7,651.6 940.1,651.9 940.6,650.5 941.1,649.7 941.6,648.7 942.1,648.5 942.5,648.5 943.0,645.8 943.5,646.6 944.0,645.8 944.5,645.2 944.9,644.1 945.4,643.4 945.9,642.3 946.4,641.9 946.8,641.1 947.3,639.8 947.8,641.0 948.3,639.8 948.8,638.8 949.2,639.2 949.7,638.9 950.2,638.4 950.7,638.1 951.2,638.3 951.6,638.8 952.1,639.1 952.6,639.1 953.1,638.6 953.6,639.3 954.0,639.6 954.5,640.7 955.0,641.6 955.5,641.8 956.0,642.1 956.4,642.5 956.9,641.7 957.4,643.2 957.9,643.1 958.4,641.0 958.8,640.0 959.3,639.0 959.8,639.6 960.3,637.6 960.8,636.4 961.2,636.8 961.7,635.7 962.2,634.5 962.7,634.1 963.2,634.3 963.6,632.9 964.1,633.5 964.6,634.8 965.1,634.7 965.5,634.8 966.0,635.5 966.5,635.0 967.0,636.1 967.5,636.5 967.9,636.4 968.4,636.5 968.9,638.3 969.4,637.9 969.9,637.5 970.3,638.6 970.8,639.3 971.3,638.0 971.8,638.3 972.3,638.8 972.7,640.3 973.2,639.4 973.7,640.5 974.2,640.5 974.7,640.2 975.1,639.6 975.6,641.1 976.1,640.8 976.6,640.2 977.1,639.6 977.5,640.5 978.0,640.0 978.5,640.2 979.0,639.5 979.5,639.9 979.9,638.6 980.4,638.9 980.9,640.0 981.4,639.6 981.9,638.3 982.3,638.7 982.8,636.9 983.3,637.5 983.8,636.4 984.2,635.1 984.7,634.1 985.2,632.9 985.7,634.0 986.2,631.6 986.6,632.6 987.1,632.2 987.6,630.8 988.1,629.4 988.6,630.1 989.0,629.7 989.5,628.5 990.0,627.7 990.5,626.9" fill="none" stroke="#00ffff" stroke-width="1.8" stroke-linejoin="miter"/><polyline points="995.1,632.4 995.6,632.2 996.0,630.7 996.5,630.5 997.0,631.3 997.5,630.9 997.9,630.9 998.4,631.1 998.9,632.2 999.4,632.9 999.8,633.6 1000.3,633.7 1000.8,634.8 1001.3,635.5 1001.8,635.8 1002.2,635.5 1002.7,634.7 1003.2,633.5 1003.7,632.7 1004.1,631.7 1004.6,627.4 1005.1,622.6 1005.6,618.4 1006.1,622.6 1006.5,627.2 1007.0,632.4 1007.5,633.2 1008.0,634.5 1008.4,635.3 1008.9,636.3 1009.4,637.9 1009.9,638.9 1010.4,640.7 1010.8,642.3 1011.3,641.5 1011.8,640.5 1012.3,641.2 1012.7,640.7 1013.2,640.3 1013.7,640.2 1014.2,639.7 1014.7,639.4 1015.1,638.5 1015.6,639.0 1016.1,638.7 1016.6,637.2 1017.0,637.7 1017.5,637.3 1018.0,636.6 1018.5,636.5 1018.9,636.3 1019.4,636.8 1019.9,636.1 1020.4,636.5 1020.9,635.7 1021.3,636.3 1021.8,636.2 1022.3,635.5 1022.8,635.5 1023.2,635.9 1023.7,635.5 1024.2,635.1 1024.7,634.6 1025.2,634.6 1025.6,635.0 1026.1,632.5 1026.6,630.7 1027.1,626.7 1027.5,623.1 1028.0,619.6 1028.5,624.7 1029.0,628.5 1029.5,630.7 1029.9,632.0 1030.4,633.5 1030.9,634.7 1031.4,635.6 1031.8,636.8 1032.3,638.3 1032.8,639.4 1033.3,639.5 1033.8,639.3 1034.2,640.8 1034.7,641.2 1035.2,642.0 1035.7,641.5 1036.1,642.8 1036.6,642.4 1037.1,643.7 1037.6,643.7 1038.0,644.2 1038.5,645.6 1039.0,645.0 1039.5,646.3 1040.0,647.5 1040.4,647.3 1040.9,648.0 1041.4,649.7 1041.9,649.8 1042.3,650.9 1042.8,650.7 1043.3,651.9 1043.8,652.3 1044.3,653.3 1044.7,652.7 1045.2,654.2 1045.7,653.1 1046.2,654.3 1046.6,652.6 1047.1,652.3 1047.6,652.4 1048.1,650.8 1048.6,650.1 1049.0,650.2 1049.5,647.8 1050.0,645.5 1050.5,644.9 1050.9,641.8 1051.4,638.4 1051.9,635.2 1052.4,637.5 1052.9,640.9 1053.3,642.4 1053.8,644.4 1054.3,645.7 1054.8,648.1 1055.2,650.2 1055.7,651.6 1056.2,652.8 1056.7,653.6 1057.1,654.8 1057.6,655.5 1058.1,656.2 1058.6,656.8 1059.1,658.4 1059.5,658.9 1060.0,658.0 1060.5,657.9 1061.0,657.9 1061.4,656.3 1061.9,656.3 1062.4,655.5 1062.9,655.2 1063.4,654.4 1063.8,655.2 1064.3,653.9 1064.8,654.0 1065.3,653.4 1065.7,652.5 1066.2,652.9 1066.7,652.0 1067.2,651.6 1067.7,651.6 1068.1,651.8 1068.6,651.8 1069.1,652.6 1069.6,652.5 1070.0,653.2 1070.5,653.2 1071.0,653.3 1071.5,652.3 1072.0,652.6 1072.4,652.4 1072.9,652.9 1073.4,651.8 1073.9,650.9 1074.3,649.6 1074.8,647.8 1075.3,643.4 1075.8,638.0 1076.2,636.2 1076.7,641.7 1077.2,647.8 1077.7,648.9 1078.2,651.3 1078.6,652.2 1079.1,653.6 1079.6,655.2 1080.1,656.4 1080.5,657.2 1081.0,658.5 1081.5,659.2 1082.0,659.8 1082.5,661.1 1082.9,661.2 1083.4,662.9 1083.9,663.7 1084.4,664.1 1084.8,664.4 1085.3,665.2 1085.8,665.8 1086.3,665.1 1086.8,665.7" fill="none" stroke="#00ffff" stroke-width="1.8" stroke-linejoin="miter"/><polyline points="1090.8,661.7 1091.2,662.0 1091.7,661.4 1092.2,661.7 1092.7,661.5 1093.1,660.1 1093.6,659.7 1094.1,660.9 1094.6,659.3 1095.0,658.9 1095.5,659.9 1096.0,658.5 1096.5,658.7 1097.0,657.6 1097.4,657.5 1097.9,656.1 1098.4,656.7 1098.9,656.7 1099.3,655.6 1099.8,655.7 1100.3,655.1 1100.8,653.5 1101.2,654.5 1101.7,653.8 1102.2,652.8 1102.7,652.0 1103.1,653.3 1103.6,652.2 1104.1,652.4 1104.6,652.5 1105.1,651.8 1105.5,651.9 1106.0,650.6 1106.5,651.1 1107.0,650.1 1107.4,651.3 1107.9,651.5 1108.4,650.1 1108.9,650.5 1109.3,650.9 1109.8,652.6 1110.3,651.8 1110.8,652.5 1111.2,652.1 1111.7,652.8 1112.2,652.9 1112.7,653.2 1113.2,653.9 1113.6,654.2 1114.1,655.2 1114.6,655.1 1115.1,655.7 1115.5,655.7 1116.0,656.1 1116.5,655.5 1117.0,654.7 1117.4,656.2 1117.9,656.5 1118.4,656.5 1118.9,655.8 1119.3,656.0 1119.8,654.9 1120.3,656.0 1120.8,655.4 1121.3,654.8 1121.7,654.2 1122.2,655.7 1122.7,655.9 1123.2,654.0 1123.6,655.4 1124.1,654.5 1124.6,653.9 1125.1,654.1 1125.5,655.0 1126.0,655.1 1126.5,653.4 1127.0,654.4 1127.4,653.2 1127.9,654.5 1128.4,653.6 1128.9,654.7 1129.4,654.3 1129.8,652.7 1130.3,653.1 1130.8,651.2 1131.3,650.1 1131.7,650.6 1132.2,648.9 1132.7,648.6 1133.2,648.2 1133.6,647.8 1134.1,646.1 1134.6,645.1 1135.1,645.9 1135.6,644.0 1136.0,644.5 1136.5,643.6 1137.0,642.0 1137.5,641.7 1137.9,641.3 1138.4,641.0 1138.9,640.4 1139.4,639.8 1139.8,639.7 1140.3,640.1 1140.8,639.0 1141.3,638.6 1141.7,638.9 1142.2,637.7 1142.7,638.1 1143.2,639.8 1143.7,639.2 1144.1,639.6 1144.6,638.9 1145.1,640.0 1145.6,640.7 1146.0,639.9 1146.5,641.4 1147.0,641.8 1147.5,640.9 1147.9,642.4 1148.4,642.4 1148.9,643.2 1149.4,641.6 1149.8,641.3 1150.3,640.5 1150.8,638.1 1151.3,637.3 1151.8,637.6 1152.2,637.5 1152.7,635.5 1153.2,635.3 1153.7,635.0 1154.1,633.8 1154.6,633.3 1155.1,633.6 1155.6,634.1 1156.0,635.0 1156.5,634.8 1157.0,635.3 1157.5,636.5 1157.9,635.4 1158.4,636.8 1158.9,637.5 1159.4,636.9 1159.9,637.0 1160.3,638.4 1160.8,637.6 1161.3,637.8 1161.8,638.6 1162.2,639.4 1162.7,638.5 1163.2,639.2 1163.7,639.5 1164.1,640.8 1164.6,640.0 1165.1,640.8 1165.6,639.5 1166.0,639.8 1166.5,640.5 1167.0,640.9 1167.5,640.1 1168.0,639.6 1168.4,639.4 1168.9,640.3 1169.4,639.4 1169.9,640.4 1170.3,640.3 1170.8,638.8 1171.3,638.8 1171.8,639.7 1172.2,639.2 1172.7,639.3 1173.2,637.7 1173.7,636.6 1174.1,636.2 1174.6,636.5 1175.1,634.8 1175.6,634.3 1176.1,633.7 1176.5,633.0 1177.0,632.4 1177.5,632.8 1178.0,630.6 1178.4,629.7 1178.9,630.9 1179.4,630.1 1179.9,629.7 1180.3,628.0 1180.8,628.5 1181.3,628.0" fill="none" stroke="#00ffff" stroke-width="1.8" stroke-linejoin="miter"/><polyline points="803.3,695.8 803.8,695.3 804.2,695.3 804.7,694.5 805.2,695.1 805.7,694.9 806.2,694.8 806.6,694.8 807.1,696.0 807.6,696.4 808.1,697.0 808.6,698.7 809.0,699.4 809.5,698.8 810.0,699.8 810.5,698.7 811.0,697.8 811.4,696.9 811.9,696.8 812.4,695.8 812.9,692.2 813.4,687.5 813.8,682.0 814.3,687.3 814.8,692.0 815.3,696.4 815.8,697.1 816.2,697.6 816.7,698.8 817.2,700.2 817.7,702.5 818.1,702.9 818.6,704.2 819.1,705.9 819.6,704.7 820.1,704.7 820.5,704.2 821.0,703.4 821.5,703.8 822.0,703.8 822.5,702.6 822.9,702.3 823.4,702.3 823.9,701.4 824.4,701.7 824.9,701.9 825.3,701.3 825.8,700.8 826.3,701.0 826.8,699.7 827.3,700.2 827.7,699.8 828.2,700.0 828.7,699.2 829.2,700.1 829.7,699.0 830.1,699.0 830.6,699.8 831.1,699.8 831.6,699.0 832.1,698.9 832.5,698.5 833.0,698.5 833.5,698.8 834.0,698.1 834.5,696.3 834.9,694.0 835.4,690.5 835.9,686.8 836.4,684.4 836.9,688.4 837.3,692.1 837.8,694.3 838.3,695.7 838.8,696.4 839.2,698.7 839.7,699.4 840.2,700.7 840.7,701.4 841.2,702.5 841.6,703.2 842.1,703.4 842.6,704.6 843.1,704.8 843.6,704.7 844.0,705.6 844.5,706.7 845.0,706.7 845.5,707.3 846.0,707.0 846.4,708.1 846.9,708.6 847.4,709.0 847.9,709.7 848.4,710.6 848.8,711.3 849.3,711.9 849.8,712.2 850.3,713.3 850.8,714.8 851.2,714.7 851.7,714.9 852.2,715.5 852.7,716.5 853.2,716.1 853.6,716.4 854.1,716.6 854.6,717.4 855.1,717.4 855.6,716.1 856.0,715.4 856.5,714.7 857.0,714.1 857.5,713.3 857.9,711.9 858.4,710.2 858.9,708.1 859.4,705.8 859.9,702.9 860.3,699.8 860.8,700.6 861.3,703.9 861.8,706.7 862.3,708.5 862.7,710.2 863.2,711.8 863.7,713.8 864.2,714.7 864.7,716.2 865.1,717.4 865.6,717.6 866.1,719.1 866.6,719.9 867.1,721.1 867.5,720.9 868.0,723.1 868.5,722.3 869.0,722.0 869.5,721.4 869.9,719.9 870.4,719.8 870.9,718.5 871.4,718.8 871.9,718.9 872.3,717.5 872.8,717.4 873.3,716.7 873.8,716.5 874.3,716.2 874.7,715.7 875.2,716.6 875.7,716.2 876.2,715.7 876.6,716.1 877.1,716.1 877.6,715.9 878.1,715.8 878.6,716.2 879.0,716.1 879.5,715.7 880.0,715.9 880.5,716.3 881.0,716.4 881.4,715.8 881.9,715.3 882.4,714.5 882.9,713.3 883.4,711.9 883.8,706.5 884.3,701.6 884.8,700.1 885.3,705.4 885.8,711.1 886.2,712.9 886.7,714.9 887.2,716.2 887.7,717.2 888.2,719.3 888.6,720.2 889.1,721.0 889.6,721.4 890.1,722.5 890.6,723.2 891.0,724.5 891.5,724.9 892.0,725.5 892.5,726.2 893.0,726.9 893.4,727.9 893.9,728.7 894.4,729.2 894.9,728.8 895.3,729.4" fill="none" stroke="#00ffff" stroke-width="1.8" stroke-linejoin="miter"/><polyline points="899.4,725.4 899.9,725.3 900.3,725.8 900.8,724.7 901.3,724.5 901.8,724.4 902.3,723.4 902.7,723.6 903.2,723.4 903.7,723.3 904.2,721.5 904.7,721.4 905.1,720.6 905.6,721.6 906.1,720.9 906.6,719.2 907.0,720.7 907.5,720.3 908.0,719.3 908.5,718.8 909.0,717.5 909.4,716.8 909.9,717.5 910.4,716.1 910.9,716.0 911.4,715.8 911.8,715.1 912.3,715.7 912.8,715.3 913.3,715.8 913.8,714.9 914.2,714.9 914.7,714.3 915.2,714.3 915.7,713.6 916.2,713.5 916.6,715.2 917.1,715.4 917.6,715.4 918.1,715.3 918.6,714.8 919.0,714.9 919.5,715.2 920.0,715.1 920.5,716.8 921.0,716.4 921.4,717.6 921.9,717.0 922.4,718.4 922.9,718.5 923.4,717.1 923.8,717.6 924.3,719.2 924.8,718.4 925.3,719.6 925.7,718.5 926.2,718.0 926.7,719.2 927.2,719.6 927.7,718.5 928.1,718.1 928.6,718.5 929.1,719.7 929.6,719.2 930.1,717.8 930.5,718.0 931.0,717.6 931.5,717.5 932.0,718.9 932.5,717.5 932.9,718.2 933.4,717.9 933.9,717.3 934.4,718.3 934.9,717.1 935.3,718.0 935.8,716.9 936.3,717.4 936.8,716.9 937.3,716.9 937.7,718.3 938.2,717.4 938.7,715.8 939.2,716.4 939.7,714.4 940.1,714.2 940.6,714.6 941.1,713.6 941.6,711.9 942.1,712.9 942.5,710.6 943.0,709.9 943.5,710.1 944.0,708.5 944.5,707.6 944.9,706.4 945.4,705.6 945.9,706.1 946.4,704.9 946.8,705.1 947.3,704.2 947.8,703.8 948.3,704.3 948.8,703.1 949.2,703.1 949.7,703.4 950.2,701.8 950.7,701.5 951.2,702.8 951.6,702.9 952.1,702.1 952.6,702.3 953.1,703.7 953.6,704.4 954.0,703.3 954.5,705.1 955.0,705.3 955.5,705.1 956.0,705.0 956.4,704.7 956.9,704.9 957.4,707.0 957.9,705.9 958.4,705.9 958.8,704.1 959.3,704.3 959.8,703.0 960.3,701.5 960.8,700.3 961.2,700.8 961.7,698.9 962.2,698.6 962.7,698.7 963.2,698.7 963.6,697.7 964.1,697.4 964.6,699.0 965.1,698.0 965.5,698.0 966.0,698.9 966.5,699.6 967.0,699.2 967.5,699.8 967.9,700.5 968.4,701.2 968.9,700.6 969.4,701.3 969.9,702.6 970.3,703.1 970.8,702.7 971.3,703.1 971.8,703.1 972.3,702.5 972.7,702.6 973.2,702.8 973.7,704.6 974.2,704.2 974.7,704.8 975.1,702.9 975.6,704.1 976.1,703.8 976.6,704.3 977.1,703.5 977.5,704.9 978.0,703.0 978.5,703.8 979.0,704.0 979.5,704.1 979.9,703.6 980.4,703.4 980.9,703.4 981.4,703.4 981.9,702.1 982.3,702.1 982.8,701.9 983.3,701.1 983.8,699.6 984.2,699.6 984.7,699.1 985.2,697.9 985.7,697.3 986.2,696.2 986.6,695.9 987.1,695.4 987.6,693.7 988.1,694.2 988.6,694.3 989.0,693.4 989.5,692.5 990.0,691.4 990.5,691.6" fill="none" stroke="#00ffff" stroke-width="1.8" stroke-linejoin="miter"/><polyline points="995.1,695.6 995.6,695.6 996.0,695.4 996.5,694.4 997.0,694.0 997.5,694.3 997.9,694.3 998.4,695.7 998.9,696.2 999.4,696.8 999.8,697.4 1000.3,698.2 1000.8,698.2 1001.3,699.3 1001.8,698.8 1002.2,699.2 1002.7,697.3 1003.2,697.7 1003.7,696.0 1004.1,696.2 1004.6,691.8 1005.1,687.1 1005.6,683.0 1006.1,686.3 1006.5,690.7 1007.0,696.3 1007.5,697.0 1008.0,697.6 1008.4,700.1 1008.9,701.3 1009.4,701.4 1009.9,703.0 1010.4,703.9 1010.8,705.0 1011.3,705.1 1011.8,704.2 1012.3,704.6 1012.7,703.4 1013.2,703.2 1013.7,703.8 1014.2,702.9 1014.7,702.6 1015.1,702.5 1015.6,702.0 1016.1,701.6 1016.6,700.8 1017.0,701.4 1017.5,701.4 1018.0,701.1 1018.5,700.5 1018.9,699.9 1019.4,699.8 1019.9,700.2 1020.4,700.0 1020.9,699.1 1021.3,699.2 1021.8,699.3 1022.3,699.3 1022.8,699.7 1023.2,699.1 1023.7,698.3 1024.2,699.3 1024.7,698.7 1025.2,698.7 1025.6,698.2 1026.1,696.7 1026.6,693.9 1027.1,691.3 1027.5,686.1 1028.0,684.0 1028.5,687.6 1029.0,692.4 1029.5,693.9 1029.9,695.5 1030.4,696.9 1030.9,698.6 1031.4,699.0 1031.8,700.9 1032.3,701.6 1032.8,702.2 1033.3,703.0 1033.8,704.2 1034.2,704.1 1034.7,705.2 1035.2,704.6 1035.7,706.2 1036.1,705.9 1036.6,706.2 1037.1,707.5 1037.6,708.2 1038.0,707.5 1038.5,708.3 1039.0,709.6 1039.5,709.6 1040.0,710.2 1040.4,710.6 1040.9,711.3 1041.4,712.8 1041.9,714.1 1042.3,714.8 1042.8,714.8 1043.3,714.9 1043.8,716.0 1044.3,716.9 1044.7,717.2 1045.2,717.1 1045.7,716.8 1046.2,717.5 1046.6,716.7 1047.1,716.3 1047.6,715.1 1048.1,715.4 1048.6,714.6 1049.0,712.9 1049.5,711.2 1050.0,710.2 1050.5,707.5 1050.9,706.6 1051.4,702.8 1051.9,699.5 1052.4,701.4 1052.9,703.9 1053.3,706.3 1053.8,707.9 1054.3,710.2 1054.8,711.9 1055.2,712.8 1055.7,715.3 1056.2,715.6 1056.7,716.3 1057.1,717.6 1057.6,719.3 1058.1,719.7 1058.6,720.8 1059.1,722.1 1059.5,723.2 1060.0,722.3 1060.5,721.2 1061.0,720.9 1061.4,720.7 1061.9,720.0 1062.4,719.1 1062.9,718.4 1063.4,718.1 1063.8,718.3 1064.3,717.7 1064.8,716.6 1065.3,717.2 1065.7,717.2 1066.2,716.7 1066.7,716.5 1067.2,716.2 1067.7,715.8 1068.1,716.2 1068.6,715.6 1069.1,715.3 1069.6,715.7 1070.0,715.7 1070.5,716.6 1071.0,716.3 1071.5,716.2 1072.0,716.3 1072.4,715.7 1072.9,716.3 1073.4,715.4 1073.9,713.8 1074.3,712.5 1074.8,711.5 1075.3,706.9 1075.8,702.0 1076.2,700.2 1076.7,705.5 1077.2,711.2 1077.7,713.2 1078.2,714.9 1078.6,716.2 1079.1,718.1 1079.6,718.9 1080.1,719.5 1080.5,720.9 1081.0,721.7 1081.5,722.1 1082.0,723.6 1082.5,724.0 1082.9,724.5 1083.4,725.3 1083.9,726.9 1084.4,726.3 1084.8,727.5 1085.3,728.1 1085.8,728.4 1086.3,728.8 1086.8,728.6" fill="none" stroke="#00ffff" stroke-width="1.8" stroke-linejoin="miter"/><polyline points="1090.8,725.0 1091.2,725.6 1091.7,725.3 1092.2,725.4 1092.7,723.8 1093.1,723.7 1093.6,723.3 1094.1,723.0 1094.6,723.6 1095.0,722.0 1095.5,722.3 1096.0,721.3 1096.5,721.0 1097.0,720.8 1097.4,721.2 1097.9,720.4 1098.4,718.8 1098.9,718.9 1099.3,718.3 1099.8,719.3 1100.3,718.8 1100.8,718.4 1101.2,718.1 1101.7,717.5 1102.2,717.5 1102.7,716.9 1103.1,715.6 1103.6,716.5 1104.1,715.4 1104.6,715.7 1105.1,715.0 1105.5,714.4 1106.0,714.0 1106.5,713.8 1107.0,713.3 1107.4,713.2 1107.9,714.8 1108.4,715.0 1108.9,715.6 1109.3,715.3 1109.8,715.3 1110.3,715.9 1110.8,714.9 1111.2,716.3 1111.7,716.2 1112.2,715.9 1112.7,716.3 1113.2,717.2 1113.6,717.0 1114.1,717.7 1114.6,718.3 1115.1,718.0 1115.5,717.6 1116.0,718.5 1116.5,718.1 1117.0,718.2 1117.4,718.2 1117.9,718.7 1118.4,718.2 1118.9,719.3 1119.3,719.8 1119.8,718.6 1120.3,719.2 1120.8,719.5 1121.3,717.7 1121.7,717.8 1122.2,719.0 1122.7,719.0 1123.2,718.5 1123.6,717.5 1124.1,717.9 1124.6,718.8 1125.1,718.7 1125.5,718.5 1126.0,717.2 1126.5,718.4 1127.0,717.4 1127.4,718.0 1127.9,716.8 1128.4,718.3 1128.9,717.5 1129.4,717.2 1129.8,715.6 1130.3,715.8 1130.8,715.2 1131.3,714.6 1131.7,713.6 1132.2,713.7 1132.7,712.4 1133.2,711.5 1133.6,710.5 1134.1,710.7 1134.6,708.8 1135.1,708.2 1135.6,707.1 1136.0,707.5 1136.5,706.6 1137.0,706.0 1137.5,704.5 1137.9,704.8 1138.4,704.1 1138.9,703.1 1139.4,702.4 1139.8,704.2 1140.3,702.2 1140.8,702.3 1141.3,702.0 1141.7,702.4 1142.2,701.1 1142.7,702.2 1143.2,702.3 1143.7,703.6 1144.1,702.3 1144.6,703.2 1145.1,703.9 1145.6,705.2 1146.0,704.6 1146.5,704.8 1147.0,705.5 1147.5,705.1 1147.9,704.9 1148.4,706.1 1148.9,707.3 1149.4,706.0 1149.8,704.1 1150.3,704.1 1150.8,703.5 1151.3,701.4 1151.8,701.1 1152.2,700.1 1152.7,699.3 1153.2,698.8 1153.7,698.0 1154.1,697.7 1154.6,696.5 1155.1,697.6 1155.6,697.4 1156.0,699.1 1156.5,699.1 1157.0,698.3 1157.5,700.3 1157.9,699.5 1158.4,700.4 1158.9,700.9 1159.4,700.7 1159.9,700.9 1160.3,701.4 1160.8,701.1 1161.3,702.9 1161.8,701.6 1162.2,703.3 1162.7,702.4 1163.2,702.8 1163.7,703.3 1164.1,702.9 1164.6,703.1 1165.1,703.5 1165.6,703.7 1166.0,704.6 1166.5,704.8 1167.0,702.9 1167.5,703.9 1168.0,703.1 1168.4,704.5 1168.9,703.5 1169.4,704.5 1169.9,703.6 1170.3,702.6 1170.8,702.2 1171.3,702.5 1171.8,703.5 1172.2,701.9 1172.7,702.4 1173.2,701.5 1173.7,700.8 1174.1,701.0 1174.6,699.2 1175.1,699.5 1175.6,698.7 1176.1,698.6 1176.5,697.1 1177.0,697.3 1177.5,695.7 1178.0,695.3 1178.4,694.8 1178.9,694.6 1179.4,694.1 1179.9,691.9 1180.3,691.3 1180.8,691.6 1181.3,691.7" fill="none" stroke="#00ffff" stroke-width="1.8" stroke-linejoin="miter"/><polyline points="803.3,761.9 803.8,761.3 804.2,761.2 804.7,761.2 805.2,760.1 805.7,760.4 806.2,760.9 806.6,761.5 807.1,761.7 807.6,761.7 808.1,762.7 808.6,764.2 809.0,763.6 809.5,764.5 810.0,765.3 810.5,763.9 811.0,763.0 811.4,762.5 811.9,762.7 812.4,761.3 812.9,757.8 813.4,753.8 813.8,749.7 814.3,753.3 814.8,756.8 815.3,761.5 815.8,761.9 816.2,763.1 816.7,764.4 817.2,766.2 817.7,766.8 818.1,768.5 818.6,768.8 819.1,769.6 819.6,769.2 820.1,769.9 820.5,769.8 821.0,768.6 821.5,768.3 822.0,767.7 822.5,768.3 822.9,767.5 823.4,767.0 823.9,767.4 824.4,767.0 824.9,766.5 825.3,765.8 825.8,766.2 826.3,765.8 826.8,765.4 827.3,764.9 827.7,765.9 828.2,765.7 828.7,765.4 829.2,765.7 829.7,765.0 830.1,764.6 830.6,764.1 831.1,764.7 831.6,764.5 832.1,764.3 832.5,765.0 833.0,764.6 833.5,763.5 834.0,764.5 834.5,761.7 834.9,760.1 835.4,756.7 835.9,753.3 836.4,751.2 836.9,754.4 837.3,758.5 837.8,759.7 838.3,761.7 838.8,762.1 839.2,763.7 839.7,764.7 840.2,765.5 840.7,767.5 841.2,767.1 841.6,767.8 842.1,768.0 842.6,769.3 843.1,769.2 843.6,769.3 844.0,769.8 844.5,770.5 845.0,771.4 845.5,771.2 846.0,771.7 846.4,773.0 846.9,773.3 847.4,773.2 847.9,774.0 848.4,774.4 848.8,775.3 849.3,776.1 849.8,776.5 850.3,777.2 850.8,777.9 851.2,778.6 851.7,779.6 852.2,780.8 852.7,780.6 853.2,780.6 853.6,780.2 854.1,780.6 854.6,781.5 855.1,780.5 855.6,780.5 856.0,780.0 856.5,778.5 857.0,778.0 857.5,777.3 857.9,776.1 858.4,773.6 858.9,772.1 859.4,771.3 859.9,767.6 860.3,765.2 860.8,766.1 861.3,769.7 861.8,771.3 862.3,772.3 862.7,774.6 863.2,775.6 863.7,778.2 864.2,779.1 864.7,779.8 865.1,781.2 865.6,781.6 866.1,783.1 866.6,783.6 867.1,783.7 867.5,784.8 868.0,786.5 868.5,784.9 869.0,785.6 869.5,783.7 869.9,784.2 870.4,783.5 870.9,782.6 871.4,782.5 871.9,782.2 872.3,781.6 872.8,781.2 873.3,780.5 873.8,781.1 874.3,781.1 874.7,780.1 875.2,780.4 875.7,779.5 876.2,779.4 876.6,780.2 877.1,780.4 877.6,779.3 878.1,780.4 878.6,779.7 879.0,780.4 879.5,779.7 880.0,780.8 880.5,779.9 881.0,779.8 881.4,779.6 881.9,778.6 882.4,777.5 882.9,777.5 883.4,775.3 883.8,771.3 884.3,766.5 884.8,765.4 885.3,771.2 885.8,775.1 886.2,777.5 886.7,778.4 887.2,779.5 887.7,781.0 888.2,782.8 888.6,783.4 889.1,784.4 889.6,785.1 890.1,786.1 890.6,787.0 891.0,787.2 891.5,788.3 892.0,789.1 892.5,789.1 893.0,790.4 893.4,790.1 893.9,791.3 894.4,791.6 894.9,791.3 895.3,792.2" fill="none" stroke="#00ffff" stroke-width="1.8" stroke-linejoin="miter"/><polyline points="899.4,788.0 899.9,788.8 900.3,788.5 900.8,788.0 901.3,787.2 901.8,788.1 902.3,787.9 902.7,787.0 903.2,786.5 903.7,785.6 904.2,784.8 904.7,785.1 905.1,785.1 905.6,783.7 906.1,784.8 906.6,783.3 907.0,782.9 907.5,782.2 908.0,783.7 908.5,782.8 909.0,782.8 909.4,781.9 909.9,780.4 910.4,780.6 910.9,780.6 911.4,779.5 911.8,780.9 912.3,779.5 912.8,778.8 913.3,779.9 913.8,778.2 914.2,779.5 914.7,778.3 915.2,778.2 915.7,777.6 916.2,778.1 916.6,777.7 917.1,777.6 917.6,779.5 918.1,778.5 918.6,779.8 919.0,778.9 919.5,780.6 920.0,780.7 920.5,780.7 921.0,781.0 921.4,781.0 921.9,781.5 922.4,780.6 922.9,781.6 923.4,782.6 923.8,781.4 924.3,783.0 924.8,783.0 925.3,782.2 925.7,782.2 926.2,782.5 926.7,782.5 927.2,783.8 927.7,782.5 928.1,781.7 928.6,781.8 929.1,783.0 929.6,783.4 930.1,782.4 930.5,782.3 931.0,782.3 931.5,782.6 932.0,781.5 932.5,782.2 932.9,782.0 933.4,782.1 933.9,781.1 934.4,781.0 934.9,781.3 935.3,782.4 935.8,781.2 936.3,781.6 936.8,781.0 937.3,780.5 937.7,780.3 938.2,781.3 938.7,780.7 939.2,779.4 939.7,779.5 940.1,778.9 940.6,778.8 941.1,778.4 941.6,776.8 942.1,777.2 942.5,776.5 943.0,775.0 943.5,774.9 944.0,773.4 944.5,772.4 944.9,771.4 945.4,772.0 945.9,770.1 946.4,769.4 946.8,770.4 947.3,769.9 947.8,768.9 948.3,769.1 948.8,767.3 949.2,767.5 949.7,767.3 950.2,767.4 950.7,766.6 951.2,766.2 951.6,767.0 952.1,768.5 952.6,768.9 953.1,768.8 953.6,768.5 954.0,768.4 954.5,770.1 955.0,769.5 955.5,770.2 956.0,769.1 956.4,769.8 956.9,771.3 957.4,771.5 957.9,772.0 958.4,770.6 958.8,769.4 959.3,768.9 959.8,768.5 960.3,766.6 960.8,766.2 961.2,765.2 961.7,765.6 962.2,763.6 962.7,764.4 963.2,764.4 963.6,762.0 964.1,763.5 964.6,763.9 965.1,764.7 965.5,764.5 966.0,764.2 966.5,764.8 967.0,766.3 967.5,766.5 967.9,765.2 968.4,765.4 968.9,765.7 969.4,765.8 969.9,766.9 970.3,766.5 970.8,768.2 971.3,768.1 971.8,767.3 972.3,768.3 972.7,768.2 973.2,768.8 973.7,768.2 974.2,768.1 974.7,768.2 975.1,768.6 975.6,769.2 976.1,768.9 976.6,767.9 977.1,769.3 977.5,769.6 978.0,769.4 978.5,769.3 979.0,767.5 979.5,768.3 979.9,767.3 980.4,768.6 980.9,767.2 981.4,768.1 981.9,767.0 982.3,767.3 982.8,765.9 983.3,764.7 983.8,764.8 984.2,764.0 984.7,764.6 985.2,762.8 985.7,762.6 986.2,762.1 986.6,762.3 987.1,760.0 987.6,760.5 988.1,759.7 988.6,759.6 989.0,759.5 989.5,757.6 990.0,758.0 990.5,757.2" fill="none" stroke="#00ffff" stroke-width="1.8" stroke-linejoin="miter"/><polyline points="995.1,762.0 995.6,760.6 996.0,760.2 996.5,761.3 997.0,760.0 997.5,759.7 997.9,760.5 998.4,760.7 998.9,762.1 999.4,761.8 999.8,763.5 1000.3,763.2 1000.8,764.3 1001.3,765.4 1001.8,764.9 1002.2,764.6 1002.7,763.7 1003.2,762.1 1003.7,762.7 1004.1,761.6 1004.6,757.7 1005.1,753.2 1005.6,749.7 1006.1,753.4 1006.5,758.0 1007.0,761.8 1007.5,763.2 1008.0,763.8 1008.4,765.1 1008.9,766.1 1009.4,766.7 1009.9,768.8 1010.4,769.1 1010.8,770.6 1011.3,770.5 1011.8,769.8 1012.3,768.8 1012.7,769.4 1013.2,768.9 1013.7,767.9 1014.2,767.5 1014.7,767.8 1015.1,766.8 1015.6,767.8 1016.1,766.9 1016.6,766.6 1017.0,766.2 1017.5,766.2 1018.0,766.3 1018.5,765.2 1018.9,765.2 1019.4,765.4 1019.9,764.9 1020.4,765.2 1020.9,765.0 1021.3,764.8 1021.8,765.0 1022.3,764.7 1022.8,764.0 1023.2,765.2 1023.7,764.2 1024.2,764.2 1024.7,764.0 1025.2,764.7 1025.6,764.6 1026.1,762.4 1026.6,759.7 1027.1,756.4 1027.5,753.5 1028.0,750.1 1028.5,754.4 1029.0,757.9 1029.5,760.1 1029.9,761.3 1030.4,762.2 1030.9,763.2 1031.4,765.0 1031.8,766.6 1032.3,767.4 1032.8,767.2 1033.3,768.4 1033.8,767.9 1034.2,768.9 1034.7,770.0 1035.2,770.6 1035.7,770.4 1036.1,771.4 1036.6,771.4 1037.1,771.9 1037.6,772.4 1038.0,773.5 1038.5,773.6 1039.0,773.7 1039.5,774.6 1040.0,775.2 1040.4,775.4 1040.9,776.7 1041.4,777.4 1041.9,777.7 1042.3,778.9 1042.8,778.2 1043.3,779.6 1043.8,780.4 1044.3,780.2 1044.7,780.2 1045.2,781.1 1045.7,781.0 1046.2,781.0 1046.6,780.0 1047.1,780.7 1047.6,779.2 1048.1,778.3 1048.6,777.8 1049.0,777.3 1049.5,776.4 1050.0,773.7 1050.5,772.1 1050.9,770.2 1051.4,767.8 1051.9,764.2 1052.4,766.1 1052.9,769.6 1053.3,771.9 1053.8,773.4 1054.3,773.8 1054.8,775.8 1055.2,778.1 1055.7,778.2 1056.2,779.3 1056.7,780.6 1057.1,781.4 1057.6,782.8 1058.1,783.6 1058.6,784.1 1059.1,784.7 1059.5,785.6 1060.0,785.1 1060.5,784.3 1061.0,784.6 1061.4,783.3 1061.9,783.8 1062.4,783.0 1062.9,781.8 1063.4,782.1 1063.8,781.9 1064.3,780.8 1064.8,781.1 1065.3,780.2 1065.7,780.9 1066.2,779.5 1066.7,780.1 1067.2,780.4 1067.7,780.2 1068.1,779.4 1068.6,779.9 1069.1,779.4 1069.6,779.7 1070.0,780.5 1070.5,780.4 1071.0,779.3 1071.5,779.9 1072.0,780.3 1072.4,779.7 1072.9,780.6 1073.4,779.7 1073.9,778.2 1074.3,776.9 1074.8,776.5 1075.3,771.9 1075.8,766.5 1076.2,765.6 1076.7,770.4 1077.2,776.3 1077.7,777.2 1078.2,778.9 1078.6,780.4 1079.1,782.1 1079.6,782.4 1080.1,783.7 1080.5,785.1 1081.0,785.6 1081.5,785.9 1082.0,787.0 1082.5,787.1 1082.9,787.7 1083.4,788.2 1083.9,789.3 1084.4,789.7 1084.8,790.7 1085.3,792.0 1085.8,791.3 1086.3,791.9 1086.8,792.5" fill="none" stroke="#00ffff" stroke-width="1.8" stroke-linejoin="miter"/><polyline points="1090.8,789.5 1091.2,789.3 1091.7,789.0 1092.2,787.2 1092.7,788.0 1093.1,787.4 1093.6,787.4 1094.1,786.2 1094.6,785.9 1095.0,786.0 1095.5,785.2 1096.0,785.3 1096.5,784.0 1097.0,783.7 1097.4,784.6 1097.9,783.7 1098.4,783.5 1098.9,783.6 1099.3,782.4 1099.8,781.5 1100.3,782.6 1100.8,781.8 1101.2,781.6 1101.7,781.2 1102.2,781.5 1102.7,780.0 1103.1,780.5 1103.6,779.5 1104.1,779.6 1104.6,779.5 1105.1,778.6 1105.5,777.9 1106.0,778.4 1106.5,778.6 1107.0,778.1 1107.4,778.0 1107.9,778.6 1108.4,777.9 1108.9,778.1 1109.3,778.6 1109.8,779.9 1110.3,778.8 1110.8,778.9 1111.2,779.1 1111.7,779.3 1112.2,780.1 1112.7,780.9 1113.2,781.7 1113.6,781.0 1114.1,781.4 1114.6,781.5 1115.1,781.6 1115.5,782.7 1116.0,782.4 1116.5,781.9 1117.0,781.7 1117.4,783.2 1117.9,783.1 1118.4,783.5 1118.9,782.2 1119.3,782.8 1119.8,783.4 1120.3,782.7 1120.8,783.3 1121.3,781.7 1121.7,783.2 1122.2,781.3 1122.7,782.0 1123.2,781.1 1123.6,782.6 1124.1,782.3 1124.6,782.8 1125.1,782.4 1125.5,782.6 1126.0,781.7 1126.5,782.5 1127.0,782.0 1127.4,781.1 1127.9,782.3 1128.4,781.0 1128.9,780.6 1129.4,779.8 1129.8,780.1 1130.3,779.0 1130.8,780.0 1131.3,779.5 1131.7,777.5 1132.2,776.7 1132.7,777.0 1133.2,775.6 1133.6,775.6 1134.1,775.4 1134.6,773.6 1135.1,773.2 1135.6,773.5 1136.0,771.8 1136.5,770.9 1137.0,771.5 1137.5,770.9 1137.9,770.6 1138.4,769.7 1138.9,768.7 1139.4,768.8 1139.8,768.9 1140.3,768.2 1140.8,767.2 1141.3,767.1 1141.7,767.1 1142.2,767.6 1142.7,767.5 1143.2,767.8 1143.7,768.6 1144.1,767.5 1144.6,768.8 1145.1,768.5 1145.6,769.3 1146.0,770.1 1146.5,769.2 1147.0,770.9 1147.5,769.5 1147.9,770.7 1148.4,771.0 1148.9,770.7 1149.4,770.5 1149.8,769.5 1150.3,768.6 1150.8,768.3 1151.3,766.0 1151.8,765.9 1152.2,766.2 1152.7,764.4 1153.2,765.3 1153.7,763.4 1154.1,763.8 1154.6,762.3 1155.1,763.2 1155.6,763.5 1156.0,763.1 1156.5,764.7 1157.0,764.6 1157.5,765.4 1157.9,765.4 1158.4,765.8 1158.9,766.0 1159.4,765.8 1159.9,767.3 1160.3,765.9 1160.8,767.7 1161.3,768.0 1161.8,767.5 1162.2,768.3 1162.7,768.4 1163.2,768.5 1163.7,768.1 1164.1,768.4 1164.6,768.5 1165.1,768.4 1165.6,769.7 1166.0,768.5 1166.5,768.6 1167.0,768.7 1167.5,769.5 1168.0,768.8 1168.4,769.0 1168.9,768.4 1169.4,768.3 1169.9,767.7 1170.3,767.8 1170.8,767.7 1171.3,768.7 1171.8,767.9 1172.2,766.9 1172.7,767.4 1173.2,766.1 1173.7,766.4 1174.1,765.5 1174.6,765.8 1175.1,763.9 1175.6,764.5 1176.1,762.7 1176.5,763.5 1177.0,762.3 1177.5,760.5 1178.0,761.5 1178.4,759.8 1178.9,759.4 1179.4,758.4 1179.9,759.2 1180.3,757.2 1180.8,758.0 1181.3,756.9" fill="none" stroke="#00ffff" stroke-width="1.8" stroke-linejoin="miter"/><polyline points="803.3,826.0 803.8,825.4 804.2,824.8 804.7,825.5 805.2,824.6 805.7,824.4 806.2,824.8 806.6,825.7 807.1,826.9 807.6,826.8 808.1,828.1 808.6,828.8 809.0,828.4 809.5,828.7 810.0,828.8 810.5,829.1 811.0,828.1 811.4,827.9 811.9,827.4 812.4,826.3 812.9,822.6 813.4,817.6 813.8,813.2 814.3,818.3 814.8,822.2 815.3,826.4 815.8,827.2 816.2,828.5 816.7,829.6 817.2,831.1 817.7,831.1 818.1,832.8 818.6,833.6 819.1,835.2 819.6,835.0 820.1,833.8 820.5,833.3 821.0,833.2 821.5,833.0 822.0,833.4 822.5,832.6 822.9,832.7 823.4,831.8 823.9,831.8 824.4,831.1 824.9,831.4 825.3,830.9 825.8,831.1 826.3,830.9 826.8,830.1 827.3,829.4 827.7,830.5 828.2,830.4 828.7,829.7 829.2,829.6 829.7,830.1 830.1,829.0 830.6,828.9 831.1,829.4 831.6,829.3 832.1,829.2 832.5,829.3 833.0,828.8 833.5,828.6 834.0,828.2 834.5,826.6 834.9,824.3 835.4,821.5 835.9,817.9 836.4,815.3 836.9,818.9 837.3,822.5 837.8,825.1 838.3,825.9 838.8,827.7 839.2,828.6 839.7,829.8 840.2,830.6 840.7,831.8 841.2,832.5 841.6,833.3 842.1,833.2 842.6,833.4 843.1,834.4 843.6,834.0 844.0,834.8 844.5,834.9 845.0,836.1 845.5,836.1 846.0,836.8 846.4,837.8 846.9,838.0 847.4,837.7 847.9,838.8 848.4,838.9 848.8,840.7 849.3,840.9 849.8,842.0 850.3,841.9 850.8,843.3 851.2,843.0 851.7,844.7 852.2,844.7 852.7,844.4 853.2,845.8 853.6,845.9 854.1,845.2 854.6,846.0 855.1,845.2 855.6,844.2 856.0,843.9 856.5,844.1 857.0,842.6 857.5,842.6 857.9,840.9 858.4,839.1 858.9,837.2 859.4,835.9 859.9,832.2 860.3,829.1 860.8,830.8 861.3,833.3 861.8,835.9 862.3,837.9 862.7,839.2 863.2,840.2 863.7,841.8 864.2,843.4 864.7,843.8 865.1,844.8 865.6,846.5 866.1,846.5 866.6,847.4 867.1,848.3 867.5,849.7 868.0,849.9 868.5,850.3 869.0,849.6 869.5,849.3 869.9,848.8 870.4,848.2 870.9,847.4 871.4,846.7 871.9,846.8 872.3,845.9 872.8,845.7 873.3,846.0 873.8,845.6 874.3,844.6 874.7,844.7 875.2,844.7 875.7,843.9 876.2,844.5 876.6,843.9 877.1,843.9 877.6,844.3 878.1,844.2 878.6,844.9 879.0,844.5 879.5,844.3 880.0,845.1 880.5,845.2 881.0,845.1 881.4,844.3 881.9,843.4 882.4,842.1 882.9,842.0 883.4,840.6 883.8,835.9 884.3,832.1 884.8,829.9 885.3,834.8 885.8,841.0 886.2,841.7 886.7,843.7 887.2,844.7 887.7,845.5 888.2,847.4 888.6,848.8 889.1,848.5 889.6,850.3 890.1,850.4 890.6,851.4 891.0,851.8 891.5,853.1 892.0,853.4 892.5,854.0 893.0,854.1 893.4,855.6 893.9,855.5 894.4,856.5 894.9,855.8 895.3,856.0" fill="none" stroke="#00ffff" stroke-width="1.8" stroke-linejoin="miter"/><polyline points="899.4,852.3 899.9,852.3 900.3,852.6 900.8,853.0 901.3,851.6 901.8,851.4 902.3,851.4 902.7,852.0 903.2,850.4 903.7,851.2 904.2,850.7 904.7,849.2 905.1,849.6 905.6,849.1 906.1,848.6 906.6,849.4 907.0,847.2 907.5,846.7 908.0,848.2 908.5,846.8 909.0,846.0 909.4,845.9 909.9,845.6 910.4,846.4 910.9,844.6 911.4,844.3 911.8,844.8 912.3,844.5 912.8,845.0 913.3,844.5 913.8,843.3 914.2,842.7 914.7,843.7 915.2,843.7 915.7,841.5 916.2,843.2 916.6,843.7 917.1,843.4 917.6,842.8 918.1,844.2 918.6,844.3 919.0,843.4 919.5,844.6 920.0,844.0 920.5,843.9 921.0,844.8 921.4,845.1 921.9,845.5 922.4,846.3 922.9,846.9 923.4,847.4 923.8,847.6 924.3,847.7 924.8,847.4 925.3,846.6 925.7,846.4 926.2,847.4 926.7,847.4 927.2,847.8 927.7,846.5 928.1,846.7 928.6,848.0 929.1,847.3 929.6,847.4 930.1,846.2 930.5,846.7 931.0,847.6 931.5,847.0 932.0,847.7 932.5,846.0 932.9,846.4 933.4,847.0 933.9,846.3 934.4,846.9 934.9,846.4 935.3,845.4 935.8,845.3 936.3,847.0 936.8,845.2 937.3,845.3 937.7,845.5 938.2,845.7 938.7,845.5 939.2,844.2 939.7,843.7 940.1,843.7 940.6,842.2 941.1,841.8 941.6,841.8 942.1,841.1 942.5,839.2 943.0,838.6 943.5,838.0 944.0,838.4 944.5,837.6 944.9,837.5 945.4,836.3 945.9,834.9 946.4,835.4 946.8,835.4 947.3,833.6 947.8,832.5 948.3,832.8 948.8,832.4 949.2,831.9 949.7,831.4 950.2,831.4 950.7,832.6 951.2,830.8 951.6,832.2 952.1,831.7 952.6,832.0 953.1,833.5 953.6,832.8 954.0,832.8 954.5,833.7 955.0,834.4 955.5,834.4 956.0,835.4 956.4,834.7 956.9,835.3 957.4,836.0 957.9,835.7 958.4,835.4 958.8,834.1 959.3,832.6 959.8,831.7 960.3,832.2 960.8,831.3 961.2,831.1 961.7,830.1 962.2,829.3 962.7,827.9 963.2,828.8 963.6,826.8 964.1,827.7 964.6,827.5 965.1,828.3 965.5,828.5 966.0,829.1 966.5,830.0 967.0,830.1 967.5,829.8 967.9,831.1 968.4,831.3 968.9,831.7 969.4,830.4 969.9,831.8 970.3,832.6 970.8,831.6 971.3,831.8 971.8,833.2 972.3,832.6 972.7,832.9 973.2,834.0 973.7,833.2 974.2,832.8 974.7,832.8 975.1,833.1 975.6,833.8 976.1,833.2 976.6,834.0 977.1,832.6 977.5,833.0 978.0,833.7 978.5,833.3 979.0,833.1 979.5,833.8 979.9,832.3 980.4,832.0 980.9,831.5 981.4,832.3 981.9,831.7 982.3,831.4 982.8,829.9 983.3,829.3 983.8,829.4 984.2,829.5 984.7,828.0 985.2,828.6 985.7,827.3 986.2,826.4 986.6,826.6 987.1,824.9 987.6,825.1 988.1,825.0 988.6,823.8 989.0,822.8 989.5,821.8 990.0,822.3 990.5,821.1" fill="none" stroke="#00ffff" stroke-width="1.8" stroke-linejoin="miter"/><polyline points="995.1,825.3 995.6,825.3 996.0,825.2 996.5,825.8 997.0,825.0 997.5,825.1 997.9,824.3 998.4,825.6 998.9,826.7 999.4,826.8 999.8,828.1 1000.3,828.6 1000.8,828.5 1001.3,828.6 1001.8,829.6 1002.2,828.1 1002.7,827.3 1003.2,827.7 1003.7,827.2 1004.1,826.6 1004.6,823.2 1005.1,817.8 1005.6,813.3 1006.1,817.4 1006.5,822.6 1007.0,825.5 1007.5,826.7 1008.0,827.6 1008.4,828.8 1008.9,829.9 1009.4,831.4 1009.9,832.3 1010.4,833.6 1010.8,835.4 1011.3,834.0 1011.8,834.6 1012.3,834.2 1012.7,833.7 1013.2,833.4 1013.7,833.4 1014.2,832.8 1014.7,832.0 1015.1,831.9 1015.6,831.4 1016.1,831.4 1016.6,831.9 1017.0,830.8 1017.5,830.0 1018.0,830.3 1018.5,830.5 1018.9,829.9 1019.4,830.2 1019.9,829.2 1020.4,829.1 1020.9,829.8 1021.3,828.9 1021.8,829.1 1022.3,829.1 1022.8,828.7 1023.2,828.4 1023.7,828.3 1024.2,829.5 1024.7,829.0 1025.2,829.3 1025.6,828.5 1026.1,827.6 1026.6,824.9 1027.1,821.8 1027.5,817.6 1028.0,815.2 1028.5,818.5 1029.0,822.5 1029.5,825.2 1029.9,825.6 1030.4,827.7 1030.9,828.4 1031.4,829.7 1031.8,831.2 1032.3,832.0 1032.8,831.7 1033.3,832.3 1033.8,832.5 1034.2,833.0 1034.7,834.7 1035.2,834.7 1035.7,835.7 1036.1,835.9 1036.6,835.7 1037.1,837.1 1037.6,837.5 1038.0,837.3 1038.5,837.3 1039.0,838.1 1039.5,838.4 1040.0,839.4 1040.4,839.6 1040.9,841.2 1041.4,842.2 1041.9,841.8 1042.3,843.2 1042.8,843.6 1043.3,844.1 1043.8,845.4 1044.3,844.9 1044.7,845.7 1045.2,844.8 1045.7,846.3 1046.2,845.4 1046.6,844.6 1047.1,845.2 1047.6,844.4 1048.1,843.7 1048.6,843.2 1049.0,842.0 1049.5,839.9 1050.0,838.5 1050.5,837.7 1050.9,836.0 1051.4,832.0 1051.9,829.1 1052.4,830.8 1052.9,834.4 1053.3,835.2 1053.8,838.0 1054.3,838.7 1054.8,840.7 1055.2,841.6 1055.7,842.9 1056.2,844.9 1056.7,845.2 1057.1,846.8 1057.6,847.5 1058.1,848.3 1058.6,848.2 1059.1,849.8 1059.5,851.3 1060.0,850.0 1060.5,848.9 1061.0,848.5 1061.4,849.1 1061.9,848.6 1062.4,847.0 1062.9,846.7 1063.4,847.0 1063.8,846.4 1064.3,845.6 1064.8,846.4 1065.3,845.6 1065.7,844.9 1066.2,844.2 1066.7,844.5 1067.2,844.6 1067.7,843.9 1068.1,843.8 1068.6,844.7 1069.1,845.0 1069.6,844.3 1070.0,844.5 1070.5,844.8 1071.0,844.7 1071.5,844.2 1072.0,844.4 1072.4,844.4 1072.9,844.4 1073.4,843.2 1073.9,842.6 1074.3,841.3 1074.8,841.1 1075.3,836.2 1075.8,832.1 1076.2,830.9 1076.7,835.1 1077.2,839.9 1077.7,841.9 1078.2,843.2 1078.6,844.6 1079.1,845.5 1079.6,847.4 1080.1,848.8 1080.5,849.1 1081.0,849.5 1081.5,851.2 1082.0,851.1 1082.5,852.8 1082.9,853.0 1083.4,852.7 1083.9,853.9 1084.4,854.2 1084.8,855.7 1085.3,855.8 1085.8,855.8 1086.3,857.1 1086.8,857.0" fill="none" stroke="#00ffff" stroke-width="1.8" stroke-linejoin="miter"/><polyline points="1090.8,853.4 1091.2,853.3 1091.7,853.5 1092.2,852.1 1092.7,852.7 1093.1,852.9 1093.6,852.7 1094.1,850.9 1094.6,851.4 1095.0,851.0 1095.5,850.4 1096.0,850.9 1096.5,849.6 1097.0,849.1 1097.4,849.7 1097.9,848.7 1098.4,847.7 1098.9,847.3 1099.3,847.3 1099.8,846.1 1100.3,846.8 1100.8,846.7 1101.2,845.7 1101.7,846.2 1102.2,846.0 1102.7,845.0 1103.1,845.0 1103.6,843.6 1104.1,843.2 1104.6,844.8 1105.1,843.1 1105.5,842.7 1106.0,843.8 1106.5,843.2 1107.0,841.7 1107.4,842.3 1107.9,842.4 1108.4,842.7 1108.9,842.4 1109.3,843.6 1109.8,843.4 1110.3,843.8 1110.8,843.6 1111.2,843.8 1111.7,843.9 1112.2,845.9 1112.7,845.9 1113.2,845.8 1113.6,845.2 1114.1,845.5 1114.6,845.8 1115.1,846.3 1115.5,845.9 1116.0,846.4 1116.5,846.4 1117.0,846.5 1117.4,847.5 1117.9,847.2 1118.4,847.4 1118.9,847.1 1119.3,847.3 1119.8,847.8 1120.3,846.7 1120.8,846.2 1121.3,846.9 1121.7,846.7 1122.2,847.4 1122.7,846.0 1123.2,847.4 1123.6,845.6 1124.1,846.6 1124.6,846.3 1125.1,846.0 1125.5,847.1 1126.0,846.6 1126.5,845.5 1127.0,846.1 1127.4,846.2 1127.9,845.0 1128.4,845.0 1128.9,846.0 1129.4,845.7 1129.8,844.7 1130.3,844.1 1130.8,843.7 1131.3,842.7 1131.7,843.4 1132.2,843.0 1132.7,841.5 1133.2,839.9 1133.6,839.9 1134.1,840.0 1134.6,838.3 1135.1,837.2 1135.6,836.6 1136.0,837.0 1136.5,836.1 1137.0,834.9 1137.5,835.1 1137.9,834.9 1138.4,834.9 1138.9,834.1 1139.4,832.9 1139.8,833.4 1140.3,833.4 1140.8,833.1 1141.3,832.6 1141.7,832.1 1142.2,831.7 1142.7,832.7 1143.2,832.5 1143.7,833.0 1144.1,832.3 1144.6,832.4 1145.1,833.0 1145.6,833.9 1146.0,834.2 1146.5,833.7 1147.0,834.0 1147.5,835.8 1147.9,834.4 1148.4,836.4 1148.9,836.4 1149.4,835.1 1149.8,835.1 1150.3,833.6 1150.8,831.5 1151.3,832.5 1151.8,830.6 1152.2,831.1 1152.7,830.3 1153.2,828.4 1153.7,827.7 1154.1,827.1 1154.6,828.1 1155.1,828.5 1155.6,827.7 1156.0,827.8 1156.5,828.7 1157.0,829.9 1157.5,830.1 1157.9,830.7 1158.4,831.3 1158.9,831.1 1159.4,831.5 1159.9,830.1 1160.3,830.4 1160.8,832.3 1161.3,832.1 1161.8,831.8 1162.2,831.6 1162.7,832.3 1163.2,832.5 1163.7,833.1 1164.1,833.3 1164.6,832.8 1165.1,832.6 1165.6,832.8 1166.0,832.7 1166.5,832.6 1167.0,833.3 1167.5,832.7 1168.0,834.1 1168.4,833.6 1168.9,833.4 1169.4,833.6 1169.9,832.6 1170.3,832.0 1170.8,832.0 1171.3,832.3 1171.8,832.2 1172.2,831.8 1172.7,831.7 1173.2,832.2 1173.7,829.9 1174.1,830.2 1174.6,829.4 1175.1,828.6 1175.6,828.9 1176.1,827.2 1176.5,826.3 1177.0,825.9 1177.5,827.0 1178.0,825.1 1178.4,824.1 1178.9,825.2 1179.4,824.0 1179.9,824.1 1180.3,822.2 1180.8,822.8 1181.3,820.8" fill="none" stroke="#00ffff" stroke-width="1.8" stroke-linejoin="miter"/><path d="M813.5 621.9 v15.7 M836.1 622.0 v6.5 M851.4 651.6 v17" stroke="#f00000" stroke-width="1.3"/><path d="M1060.1 659.5 v15.5" stroke="#f00000" stroke-width="1.3"/><path d="M813.5 686.0 v9 M836.1 686.1 v6.5 M851.4 715.1 v11" stroke="#f00000" stroke-width="1.3"/><path d="M1060.1 722.8 v11" stroke="#f00000" stroke-width="1.3"/><path d="M813.5 752.8 v1.2 M836.1 752.8 v4.7 M851.4 779.2 v4.7" stroke="#f00000" stroke-width="1.3"/><path d="M1060.1 786.3 v4.5" stroke="#f00000" stroke-width="1.3"/><path d="M813.5 817.4 v4 M836.1 817.4 v6 M851.4 843.8 v7.6" stroke="#f00000" stroke-width="1.3"/><path d="M1060.1 850.9 v5.5" stroke="#f00000" stroke-width="1.3"/></svg>
<div class="a" style="left:447px;top:31px;width:754px;height:570px;background:#ffffff;"></div>
<div class="a" style="left:448px;top:33px;width:753px;height:569px;background:#c9daf5;"></div>
<div class="a" style="left:448px;top:33px;width:753px;height:20px;background:#cfdff7;"></div>
<div class="a" style="left:1141px;top:33.5px;width:60px;height:19.5px;background:linear-gradient(90deg,rgba(157,171,193,0) 0,#9dabc1 26px,#9dabc1 100%);"></div>
<div class="a" style="left:1143px;top:35px;width:3px;height:3px;background:#ffffff;"></div><div class="a" style="left:1147px;top:35px;width:3px;height:3px;background:#e6eefc;"></div><div class="a" style="left:1151px;top:35px;width:3px;height:3px;background:#b4c2d8;"></div><div class="a" style="left:1155px;top:35px;width:3px;height:3px;background:#b9c6dc;"></div><div class="a" style="left:1159px;top:35px;width:3px;height:3px;background:#a6b3c9;"></div><div class="a" style="left:1163px;top:35px;width:3px;height:3px;background:#9dabc1;"></div><div class="a" style="left:1143px;top:39px;width:3px;height:3px;background:#cbd9f2;"></div><div class="a" style="left:1147px;top:39px;width:3px;height:3px;background:#a9b6cb;"></div><div class="a" style="left:1151px;top:39px;width:3px;height:3px;background:#e9f0fd;"></div><div class="a" style="left:1155px;top:39px;width:3px;height:3px;background:#aebbd1;"></div><div class="a" style="left:1159px;top:39px;width:3px;height:3px;background:#dde7fa;"></div><div class="a" style="left:1163px;top:39px;width:3px;height:3px;background:#9dabc1;"></div><div class="a" style="left:1143px;top:43px;width:3px;height:3px;background:#e3ecfb;"></div><div class="a" style="left:1147px;top:43px;width:3px;height:3px;background:#ffffff;"></div><div class="a" style="left:1151px;top:43px;width:3px;height:3px;background:#b6c4da;"></div><div class="a" style="left:1155px;top:43px;width:3px;height:3px;background:#b2bfd5;"></div><div class="a" style="left:1159px;top:43px;width:3px;height:3px;background:#a3b0c6;"></div><div class="a" style="left:1163px;top:43px;width:3px;height:3px;background:#b5c2d7;"></div><div class="a" style="left:1143px;top:47px;width:3px;height:3px;background:#c6d5ef;"></div><div class="a" style="left:1147px;top:47px;width:3px;height:3px;background:#cddbf4;"></div><div class="a" style="left:1151px;top:47px;width:3px;height:3px;background:#f3f7ff;"></div><div class="a" style="left:1155px;top:47px;width:3px;height:3px;background:#aab2cf;"></div><div class="a" style="left:1159px;top:47px;width:3px;height:3px;background:#b0bdd3;"></div><div class="a" style="left:1163px;top:47px;width:3px;height:3px;background:#a9b6cc;"></div>
<svg class="a" style="left:451px;top:34px" width="16" height="16" viewBox="0 0 16 16"><defs><linearGradient id="xg451_34" x1="0" y1="0" x2="1" y2="1"><stop offset="0" stop-color="#4c4c50"/><stop offset=".5" stop-color="#202022"/><stop offset="1" stop-color="#4c4c50"/></linearGradient></defs><path d="M0 0 L3.4 0 L16 16 L12.6 16 Z" fill="url(#xg451_34)"/><path d="M14.2 0 L16 0 L9.1 8.6 L8.1 7.3 Z M1.8 16 L0 16 L7 7.4 L8 8.7 Z" fill="#202022"/></svg>
<div class="a it" style="left:470.4px;top:33px;color:#d9dadc">&lt;GREG<span style="margin-left:16px">0</span></div>
<div class="a" style="left:1171px;top:37px;width:10px;height:9px;background:transparent;border:1px solid #fff;border-top-width:2px;box-sizing:border-box;box-shadow:1px 1px 0 #000"></div>
<svg class="a" style="left:1188px;top:37px" width="11" height="10" viewBox="0 0 11 10"><path d="M2 2 L10 9 M10 2 L2 9" stroke="#000" stroke-width="1.3" fill="none"/><path d="M1 1 L9 8 M9 1 L1 8" stroke="#fff" stroke-width="1.5" fill="none"/></svg>
<div class="a" style="left:451px;top:53px;width:750px;height:545px;background:#000;"></div>
<div class="a" style="left:451px;top:53px;width:12px;height:25px;background:#f4f4f4;"></div>
<div class="a" style="left:453px;top:55px;width:8px;height:21px;background:#ececec;border:1px solid #8a8a8a;border-left-color:#b8b8b8;border-top-color:#b8b8b8;box-sizing:border-box"></div>
<svg class="a" style="left:451px;top:53px" width="750" height="545" viewBox="451 53 750 545" font-family="Liberation Sans, DejaVu Sans, sans-serif"><text x="503.5" y="84.0" font-size="10.5" fill="#fff" text-anchor="start" textLength="27.5" lengthAdjust="spacingAndGlyphs">G34.3</text><text x="566.6" y="84.0" font-size="10.5" fill="#fff" text-anchor="start" textLength="75.0" lengthAdjust="spacingAndGlyphs">#0214 MRT 30m</text><text x="650.5" y="84.0" font-size="10.5" fill="#fff" text-anchor="start" textLength="125.3" lengthAdjust="spacingAndGlyphs">20101216 e1hul continuum</text><text x="503.5" y="93.3" font-size="8.6" fill="#fff" text-anchor="start" textLength="220.8" lengthAdjust="spacingAndGlyphs">freq 173.50700GHz  Az 110.70−111.13 El 27.08−27.48deg</text><text x="796.9" y="93.3" font-size="8.6" fill="#fff" text-anchor="start" textLength="9.0" lengthAdjust="spacingAndGlyphs">RC</text><text x="825.6" y="93.3" font-size="8.6" fill="#fff" text-anchor="end">1</text><text x="525.3" y="100.0" font-size="7.4" fill="#fff" text-anchor="start" textLength="115.7" lengthAdjust="spacingAndGlyphs">COL*: old   −2.40 new   −0.74</text><text x="688.1" y="100.0" font-size="7.4" fill="#fff" text-anchor="start" textLength="113.4" lengthAdjust="spacingAndGlyphs">NULE: old   10.00 new    6.59</text><text x="503.5" y="107.3" font-size="7.4" fill="#fff" text-anchor="start" textLength="157.2" lengthAdjust="spacingAndGlyphs">C   1.66     H  0.32718E+04 FWHM   15.71</text><text x="666.5" y="107.3" font-size="7.4" fill="#fff" text-anchor="start" textLength="157.3" lengthAdjust="spacingAndGlyphs">C   −3.41     H  0.35818E+04 FWHM   16.12</text><rect x="502.5" y="111.5" width="161.0" height="192.8" fill="none" stroke="#fff" stroke-width="1.1"/><path d="M509.7 304.3 v-2 M509.7 111.5 v2 M521.9 304.3 v-3.5 M521.9 111.5 v3.5 M534.1 304.3 v-2 M534.1 111.5 v2 M546.3 304.3 v-2 M546.3 111.5 v2 M558.6 304.3 v-2 M558.6 111.5 v2 M570.8 304.3 v-2 M570.8 111.5 v2 M583.0 304.3 v-3.5 M583.0 111.5 v3.5 M595.2 304.3 v-2 M595.2 111.5 v2 M607.4 304.3 v-2 M607.4 111.5 v2 M619.7 304.3 v-2 M619.7 111.5 v2 M631.9 304.3 v-2 M631.9 111.5 v2 M644.1 304.3 v-3.5 M644.1 111.5 v3.5 M656.3 304.3 v-2 M656.3 111.5 v2 M502.5 298.6 h1.6 M663.5 298.6 h-1.6 M502.5 289.6 h1.6 M663.5 289.6 h-1.6 M502.5 280.5 h2.7 M663.5 280.5 h-2.7 M502.5 271.4 h1.6 M663.5 271.4 h-1.6 M502.5 262.4 h1.6 M663.5 262.4 h-1.6 M502.5 253.3 h1.6 M663.5 253.3 h-1.6 M502.5 244.3 h1.6 M663.5 244.3 h-1.6 M502.5 235.2 h2.7 M663.5 235.2 h-2.7 M502.5 226.1 h1.6 M663.5 226.1 h-1.6 M502.5 217.1 h1.6 M663.5 217.1 h-1.6 M502.5 208.0 h1.6 M663.5 208.0 h-1.6 M502.5 199.0 h1.6 M663.5 199.0 h-1.6 M502.5 189.9 h2.7 M663.5 189.9 h-2.7 M502.5 180.8 h1.6 M663.5 180.8 h-1.6 M502.5 171.8 h1.6 M663.5 171.8 h-1.6 M502.5 162.7 h1.6 M663.5 162.7 h-1.6 M502.5 153.7 h1.6 M663.5 153.7 h-1.6 M502.5 144.6 h2.7 M663.5 144.6 h-2.7 M502.5 135.5 h1.6 M663.5 135.5 h-1.6 M502.5 126.5 h1.6 M663.5 126.5 h-1.6 M502.5 117.4 h1.6 M663.5 117.4 h-1.6 " stroke="#fff" stroke-width="1.1" fill="none"/><rect x="663.5" y="111.5" width="162.10000000000002" height="192.8" fill="none" stroke="#fff" stroke-width="1.1"/><path d="M671.1 304.3 v-2 M671.1 111.5 v2 M683.3 304.3 v-3.5 M683.3 111.5 v3.5 M695.5 304.3 v-2 M695.5 111.5 v2 M707.7 304.3 v-2 M707.7 111.5 v2 M720.0 304.3 v-2 M720.0 111.5 v2 M732.2 304.3 v-2 M732.2 111.5 v2 M744.4 304.3 v-3.5 M744.4 111.5 v3.5 M756.6 304.3 v-2 M756.6 111.5 v2 M768.8 304.3 v-2 M768.8 111.5 v2 M781.1 304.3 v-2 M781.1 111.5 v2 M793.3 304.3 v-2 M793.3 111.5 v2 M805.5 304.3 v-3.5 M805.5 111.5 v3.5 M817.7 304.3 v-2 M817.7 111.5 v2 M663.5 298.6 h1.6 M825.6 298.6 h-1.6 M663.5 289.6 h1.6 M825.6 289.6 h-1.6 M663.5 280.5 h2.7 M825.6 280.5 h-2.7 M663.5 271.4 h1.6 M825.6 271.4 h-1.6 M663.5 262.4 h1.6 M825.6 262.4 h-1.6 M663.5 253.3 h1.6 M825.6 253.3 h-1.6 M663.5 244.3 h1.6 M825.6 244.3 h-1.6 M663.5 235.2 h2.7 M825.6 235.2 h-2.7 M663.5 226.1 h1.6 M825.6 226.1 h-1.6 M663.5 217.1 h1.6 M825.6 217.1 h-1.6 M663.5 208.0 h1.6 M825.6 208.0 h-1.6 M663.5 199.0 h1.6 M825.6 199.0 h-1.6 M663.5 189.9 h2.7 M825.6 189.9 h-2.7 M663.5 180.8 h1.6 M825.6 180.8 h-1.6 M663.5 171.8 h1.6 M825.6 171.8 h-1.6 M663.5 162.7 h1.6 M825.6 162.7 h-1.6 M663.5 153.7 h1.6 M825.6 153.7 h-1.6 M663.5 144.6 h2.7 M825.6 144.6 h-2.7 M663.5 135.5 h1.6 M825.6 135.5 h-1.6 M663.5 126.5 h1.6 M825.6 126.5 h-1.6 M663.5 117.4 h1.6 M825.6 117.4 h-1.6 " stroke="#fff" stroke-width="1.1" fill="none"/><text x="498.0" y="283.5" font-size="8.4" fill="#fff" text-anchor="end">0</text><text x="498.0" y="238.2" font-size="8.4" fill="#fff" text-anchor="end">1000</text><text x="498.0" y="192.9" font-size="8.4" fill="#fff" text-anchor="end">2000</text><text x="498.0" y="147.6" font-size="8.4" fill="#fff" text-anchor="end">3000</text><text x="521.9" y="315.8" font-size="8.4" fill="#fff" text-anchor="middle">−50</text><text x="583.0" y="315.8" font-size="8.4" fill="#fff" text-anchor="middle">0</text><text x="644.1" y="315.8" font-size="8.4" fill="#fff" text-anchor="middle">50</text><text x="683.3" y="315.8" font-size="8.4" fill="#fff" text-anchor="middle">−50</text><text x="744.4" y="315.8" font-size="8.4" fill="#fff" text-anchor="middle">0</text><text x="805.5" y="315.8" font-size="8.4" fill="#fff" text-anchor="middle">50</text><text x="583.0" y="323.8" font-size="7.6" fill="#fff" text-anchor="middle" textLength="66.0" lengthAdjust="spacingAndGlyphs">AZ offset [arcsec]</text><text x="746.0" y="323.8" font-size="7.6" fill="#fff" text-anchor="middle" textLength="65.0" lengthAdjust="spacingAndGlyphs">EL offset [arcsec]</text><text transform="translate(472.5,208.5) rotate(-90)" font-size="7.6" fill="#fff" text-anchor="middle" textLength="65" lengthAdjust="spacingAndGlyphs">Iv [counts/beam]</text><polyline points="515.8,297.0 517.0,292.8 518.2,289.7 519.5,284.3 520.7,282.1 521.9,279.4 523.1,279.1 524.3,278.6 525.6,279.1 526.8,281.8 528.0,283.0 529.2,286.0 530.5,287.1 531.7,287.0 532.9,287.0 534.1,286.8 535.3,285.0 536.6,283.1 537.8,283.0 539.0,283.4 540.2,283.6 541.5,286.7 542.7,287.9 543.9,288.7 545.1,289.2 546.3,287.8 547.6,285.6 548.8,284.7 550.0,281.6 551.2,279.7 552.5,279.6 553.7,279.5 554.9,279.4 556.1,278.8 557.3,277.6 558.6,276.5 559.8,275.8 561.0,275.4 562.2,274.9 563.4,273.8 564.7,272.0 565.9,270.6 567.1,268.3 568.3,263.6 569.6,258.2 570.8,251.4 572.0,242.3 573.2,231.2 574.4,218.5 575.7,205.0 576.9,191.1 578.1,177.6 579.3,164.4 580.6,152.3 581.8,142.0 583.0,134.5 584.2,130.2 585.4,129.7 586.7,133.3 587.9,140.1 589.1,149.0 590.3,161.2 591.6,175.2 592.8,188.8 594.0,201.7 595.2,214.1 596.4,225.8 597.7,236.3 598.9,243.5 600.1,249.5 601.3,255.6 602.6,259.9 603.8,263.1 605.0,266.1 606.2,269.0 607.4,271.5 608.7,273.1 609.9,274.2 611.1,275.7 612.3,277.3 613.5,278.7 614.8,279.3 616.0,279.5 617.2,280.2 618.4,280.9 619.7,281.4 620.9,281.0 622.1,279.3 623.3,277.7 624.5,277.3 625.8,276.5 627.0,275.8 628.2,275.7 629.4,275.8 630.7,276.1 631.9,276.4 633.1,276.7 634.3,276.7 635.5,276.8 636.8,277.0 638.0,277.3 639.2,277.7 640.4,278.1 641.7,278.3 642.9,278.4 644.1,278.3 645.3,278.0 646.5,277.6 647.8,277.2 649.0,276.7 650.2,276.5" fill="none" stroke="#ffffff" stroke-width="1.3" stroke-linejoin="round"/><polyline points="515.8,293.2 517.0,289.1 518.2,286.1 519.5,280.7 520.7,278.6 521.9,276.0 523.1,275.7 524.3,275.4 525.6,276.0 526.8,278.8 528.0,280.0 529.2,283.0 530.5,284.3 531.7,284.3 532.9,284.3 534.1,284.2 535.3,282.5 536.6,280.6 537.8,280.6 539.0,281.1 540.2,281.4 541.5,284.6 542.7,285.8 543.9,286.7 545.1,287.3 546.3,286.0 547.6,283.9 548.8,283.0 550.0,280.1 551.2,278.2 552.5,278.2 553.7,278.2 554.9,278.2 556.1,277.9 557.3,277.0 558.6,276.2 559.8,276.0 561.0,276.4 562.2,277.0 563.4,277.5 564.7,277.8 565.9,279.5 567.1,281.0 568.3,281.4 569.6,282.4 570.8,283.3 572.0,283.4 573.2,283.0 574.4,282.3 575.7,281.7 576.9,281.3 578.1,281.2 579.3,280.8 580.6,280.1 581.8,279.4 583.0,278.7 584.2,278.3 585.4,278.3 586.7,279.2 587.9,280.3 589.1,280.7 590.3,282.1 591.6,283.8 592.8,284.2 594.0,283.8 595.2,283.2 596.4,282.8 597.7,282.3 598.9,280.0 600.1,277.8 601.3,277.4 602.6,276.4 603.8,275.4 605.0,275.4 606.2,276.1 607.4,277.0 608.7,277.5 609.9,277.8 611.1,278.8 612.3,280.3 613.5,281.5 614.8,282.0 616.0,282.2 617.2,282.9 618.4,283.7 619.7,284.2 620.9,283.9 622.1,282.3 623.3,280.7 624.5,280.4 625.8,279.8 627.0,279.1 628.2,279.0 629.4,279.3 630.7,279.6 631.9,280.1 633.1,280.4 634.3,280.5 635.5,280.6 636.8,280.9 638.0,281.3 639.2,281.8 640.4,282.2 641.7,282.6 642.9,282.7 644.1,282.7 645.3,282.5 646.5,282.2 647.8,281.8 649.0,281.4 650.2,281.3" fill="none" stroke="#c0c0c0" stroke-width="1.5" stroke-linejoin="round"/><polyline points="509.1,284.7 509.7,284.7 510.3,284.6 510.9,284.6 511.5,284.6 512.1,284.5 512.7,284.5 513.3,284.4 514.0,284.4 514.6,284.4 515.2,284.3 515.8,284.3 516.4,284.2 517.0,284.2 517.6,284.2 518.2,284.1 518.8,284.1 519.5,284.1 520.1,284.0 520.7,284.0 521.3,283.9 521.9,283.9 522.5,283.9 523.1,283.8 523.7,283.8 524.3,283.7 525.0,283.7 525.6,283.7 526.2,283.6 526.8,283.6 527.4,283.5 528.0,283.5 528.6,283.5 529.2,283.4 529.8,283.4 530.5,283.4 531.1,283.3 531.7,283.3 532.3,283.2 532.9,283.2 533.5,283.2 534.1,283.1 534.7,283.1 535.3,283.0 536.0,283.0 536.6,283.0 537.2,282.9 537.8,282.9 538.4,282.8 539.0,282.8 539.6,282.8 540.2,282.7 540.8,282.7 541.5,282.7 542.1,282.6 542.7,282.6 543.3,282.5 543.9,282.5 544.5,282.5 545.1,282.4 545.7,282.4 546.3,282.3 547.0,282.3 547.6,282.3 548.2,282.2 548.8,282.2 549.4,282.1 550.0,282.1 550.6,282.0 551.2,282.0 551.8,282.0 552.5,281.9 553.1,281.8 553.7,281.8 554.3,281.7 554.9,281.6 555.5,281.5 556.1,281.4 556.7,281.3 557.3,281.2 557.9,281.0 558.6,280.8 559.2,280.6 559.8,280.3 560.4,279.9 561.0,279.5 561.6,279.0 562.2,278.4 562.8,277.6 563.4,276.8 564.1,275.8 564.7,274.6 565.3,273.2 565.9,271.7 566.5,269.8 567.1,267.8 567.7,265.4 568.3,262.7 568.9,259.7 569.6,256.4 570.2,252.7 570.8,248.6 571.4,244.2 572.0,239.4 572.6,234.2 573.2,228.7 573.8,222.8 574.4,216.7 575.1,210.4 575.7,203.8 576.3,197.1 576.9,190.3 577.5,183.6 578.1,176.9 578.7,170.4 579.3,164.1 579.9,158.2 580.6,152.7 581.2,147.6 581.8,143.2 582.4,139.4 583.0,136.3 583.6,134.0 584.2,132.4 584.8,131.7 585.4,131.8 586.1,132.8 586.7,134.5 587.3,137.0 587.9,140.3 588.5,144.3 589.1,148.9 589.7,154.0 590.3,159.6 590.9,165.6 591.6,171.9 592.2,178.4 592.8,185.0 593.4,191.7 594.0,198.4 594.6,205.0 595.2,211.4 595.8,217.6 596.4,223.5 597.1,229.2 597.7,234.5 598.3,239.4 598.9,244.0 599.5,248.3 600.1,252.1 600.7,255.6 601.3,258.8 601.9,261.6 602.6,264.0 603.2,266.2 603.8,268.1 604.4,269.8 605.0,271.2 605.6,272.4 606.2,273.5 606.8,274.3 607.4,275.1 608.1,275.7 608.7,276.1 609.3,276.5 609.9,276.9 610.5,277.1 611.1,277.3 611.7,277.5 612.3,277.6 612.9,277.7 613.5,277.7 614.2,277.8 614.8,277.8 615.4,277.8 616.0,277.8 616.6,277.8 617.2,277.8 617.8,277.7 618.4,277.7 619.0,277.7 619.7,277.6 620.3,277.6 620.9,277.6 621.5,277.5 622.1,277.5 622.7,277.5 623.3,277.4 623.9,277.4 624.5,277.4 625.2,277.3 625.8,277.3 626.4,277.2 627.0,277.2 627.6,277.2 628.2,277.1 628.8,277.1 629.4,277.0 630.0,277.0 630.7,277.0 631.3,276.9 631.9,276.9 632.5,276.8 633.1,276.8 633.7,276.8 634.3,276.7 634.9,276.7 635.5,276.7 636.2,276.6 636.8,276.6 637.4,276.5 638.0,276.5 638.6,276.5 639.2,276.4 639.8,276.4 640.4,276.3 641.0,276.3 641.7,276.3 642.3,276.2 642.9,276.2 643.5,276.1 644.1,276.1 644.7,276.1 645.3,276.0 645.9,276.0 646.5,276.0 647.2,275.9 647.8,275.9 648.4,275.8 649.0,275.8 649.6,275.8 650.2,275.7 650.8,275.7 651.4,275.6 652.0,275.6 652.7,275.6 653.3,275.5 653.9,275.5 654.5,275.4 655.1,275.4 655.7,275.4 656.3,275.3 656.9,275.3" fill="none" stroke="#f00000" stroke-width="1.25" stroke-linejoin="round"/><polyline points="677.2,286.5 678.4,286.4 679.6,285.7 680.9,283.9 682.1,282.1 683.3,281.4 684.5,281.9 685.7,282.8 687.0,283.2 688.2,283.9 689.4,285.3 690.6,285.9 691.9,285.8 693.1,285.5 694.3,285.2 695.5,285.0 696.7,284.4 698.0,283.0 699.2,281.5 700.4,281.0 701.6,278.0 702.9,275.1 704.1,271.5 705.3,270.3 706.5,270.4 707.7,270.6 709.0,270.6 710.2,270.4 711.4,270.0 712.6,269.6 713.9,269.8 715.1,269.7 716.3,271.2 717.5,272.4 718.7,272.5 720.0,271.9 721.2,270.0 722.4,266.9 723.6,260.9 724.8,253.4 726.1,244.5 727.3,233.4 728.5,220.0 729.7,206.2 731.0,191.4 732.2,176.2 733.4,162.5 734.6,150.3 735.8,139.1 737.1,129.9 738.3,123.9 739.5,120.7 740.7,119.8 742.0,121.8 743.2,127.5 744.4,136.3 745.6,146.8 746.8,159.5 748.1,174.1 749.3,189.6 750.5,204.2 751.7,218.1 753.0,231.5 754.2,242.8 755.4,251.7 756.6,259.1 757.8,265.1 759.1,268.6 760.3,269.9 761.5,271.4 762.7,272.5 764.0,272.2 765.2,272.3 766.4,273.4 767.6,274.8 768.8,275.5 770.1,276.8 771.3,279.2 772.5,280.4 773.7,280.6 774.9,281.1 776.2,281.6 777.4,281.9 778.6,282.3 779.8,283.2 781.1,284.2 782.3,284.6 783.5,284.9 784.7,285.7 785.9,286.5 787.2,286.8 788.4,286.7 789.6,286.5 790.8,286.4 792.1,285.9 793.3,284.8 794.5,283.7 795.7,283.2 796.9,282.8 798.2,281.9 799.4,280.9 800.6,280.5 801.8,279.7 803.1,278.1 804.3,277.3 805.5,276.1 806.7,274.8 807.9,275.5 809.2,276.7 810.4,277.3 811.6,278.0" fill="none" stroke="#ffffff" stroke-width="1.3" stroke-linejoin="round"/><polyline points="677.2,286.5 678.4,286.4 679.6,285.7 680.9,283.9 682.1,282.1 683.3,281.4 684.5,281.9 685.7,282.8 687.0,283.2 688.2,283.9 689.4,285.3 690.6,285.9 691.9,285.8 693.1,285.5 694.3,285.2 695.5,285.0 696.7,284.4 698.0,283.0 699.2,281.6 700.4,281.0 701.6,278.0 702.9,275.1 704.1,271.5 705.3,270.3 706.5,270.5 707.7,270.7 709.0,270.8 710.2,270.6 711.4,270.4 712.6,270.3 713.9,270.9 715.1,271.4 716.3,273.9 717.5,276.4 718.7,278.5 720.0,280.5 721.2,282.1 722.4,283.7 723.6,283.6 724.8,283.3 726.1,283.2 727.3,282.4 728.5,280.8 729.7,280.0 731.0,279.1 732.2,278.2 733.4,278.8 734.6,279.9 735.8,280.5 737.1,281.0 738.3,281.9 739.5,282.3 740.7,281.7 742.0,280.6 743.2,280.0 744.4,279.6 745.6,278.7 746.8,278.2 748.1,278.8 749.3,279.9 750.5,280.5 751.7,281.2 753.0,282.5 754.2,283.2 755.4,283.1 756.6,282.9 757.8,282.8 759.1,281.5 760.3,279.0 761.5,277.8 762.7,276.9 764.0,275.1 765.2,274.2 766.4,274.6 767.6,275.5 768.8,276.0 770.1,277.1 771.3,279.4 772.5,280.5 773.7,280.7 774.9,281.2 776.2,281.7 777.4,281.9 778.6,282.3 779.8,283.2 781.1,284.2 782.3,284.6 783.5,284.9 784.7,285.7 785.9,286.5 787.2,286.8 788.4,286.7 789.6,286.5 790.8,286.4 792.1,285.9 793.3,284.8 794.5,283.7 795.7,283.2 796.9,282.8 798.2,281.9 799.4,280.9 800.6,280.5 801.8,279.7 803.1,278.1 804.3,277.3 805.5,276.1 806.7,274.8 807.9,275.5 809.2,276.7 810.4,277.3 811.6,278.0" fill="none" stroke="#c0c0c0" stroke-width="1.5" stroke-linejoin="round"/><polyline points="670.5,280.5 671.1,280.5 671.7,280.5 672.3,280.5 672.9,280.5 673.5,280.5 674.1,280.5 674.7,280.5 675.4,280.5 676.0,280.5 676.6,280.5 677.2,280.5 677.8,280.5 678.4,280.5 679.0,280.5 679.6,280.5 680.2,280.5 680.9,280.5 681.5,280.5 682.1,280.5 682.7,280.5 683.3,280.5 683.9,280.5 684.5,280.5 685.1,280.5 685.7,280.5 686.4,280.5 687.0,280.5 687.6,280.5 688.2,280.5 688.8,280.5 689.4,280.5 690.0,280.5 690.6,280.5 691.2,280.5 691.9,280.5 692.5,280.5 693.1,280.5 693.7,280.5 694.3,280.5 694.9,280.5 695.5,280.5 696.1,280.5 696.7,280.5 697.4,280.5 698.0,280.5 698.6,280.5 699.2,280.5 699.8,280.5 700.4,280.5 701.0,280.5 701.6,280.5 702.2,280.5 702.9,280.5 703.5,280.5 704.1,280.5 704.7,280.5 705.3,280.5 705.9,280.5 706.5,280.5 707.1,280.4 707.7,280.4 708.4,280.4 709.0,280.4 709.6,280.3 710.2,280.2 710.8,280.2 711.4,280.1 712.0,280.0 712.6,279.8 713.2,279.6 713.9,279.4 714.5,279.1 715.1,278.7 715.7,278.3 716.3,277.8 716.9,277.2 717.5,276.4 718.1,275.6 718.7,274.5 719.3,273.3 720.0,271.9 720.6,270.3 721.2,268.4 721.8,266.2 722.4,263.8 723.0,261.0 723.6,257.9 724.2,254.4 724.8,250.6 725.5,246.4 726.1,241.8 726.7,236.8 727.3,231.5 727.9,225.7 728.5,219.7 729.1,213.3 729.7,206.7 730.3,199.8 731.0,192.7 731.6,185.6 732.2,178.4 732.8,171.3 733.4,164.2 734.0,157.4 734.6,150.9 735.2,144.8 735.8,139.1 736.5,134.0 737.1,129.5 737.7,125.6 738.3,122.6 738.9,120.3 739.5,118.8 740.1,118.3 740.7,118.5 741.3,119.7 742.0,121.7 742.6,124.4 743.2,128.0 743.8,132.3 744.4,137.2 745.0,142.7 745.6,148.6 746.2,155.0 746.8,161.8 747.5,168.7 748.1,175.8 748.7,183.0 749.3,190.2 749.9,197.3 750.5,204.2 751.1,210.9 751.7,217.4 752.3,223.6 753.0,229.4 753.6,234.9 754.2,240.0 754.8,244.8 755.4,249.1 756.0,253.1 756.6,256.7 757.2,259.9 757.8,262.8 758.5,265.4 759.1,267.6 759.7,269.6 760.3,271.3 760.9,272.8 761.5,274.1 762.1,275.2 762.7,276.1 763.3,276.9 764.0,277.6 764.6,278.1 765.2,278.6 765.8,279.0 766.4,279.3 767.0,279.5 767.6,279.7 768.2,279.9 768.8,280.0 769.5,280.1 770.1,280.2 770.7,280.3 771.3,280.3 771.9,280.4 772.5,280.4 773.1,280.4 773.7,280.4 774.3,280.5 774.9,280.5 775.6,280.5 776.2,280.5 776.8,280.5 777.4,280.5 778.0,280.5 778.6,280.5 779.2,280.5 779.8,280.5 780.4,280.5 781.1,280.5 781.7,280.5 782.3,280.5 782.9,280.5 783.5,280.5 784.1,280.5 784.7,280.5 785.3,280.5 785.9,280.5 786.6,280.5 787.2,280.5 787.8,280.5 788.4,280.5 789.0,280.5 789.6,280.5 790.2,280.5 790.8,280.5 791.4,280.5 792.1,280.5 792.7,280.5 793.3,280.5 793.9,280.5 794.5,280.5 795.1,280.5 795.7,280.5 796.3,280.5 796.9,280.5 797.6,280.5 798.2,280.5 798.8,280.5 799.4,280.5 800.0,280.5 800.6,280.5 801.2,280.5 801.8,280.5 802.4,280.5 803.1,280.5 803.7,280.5 804.3,280.5 804.9,280.5 805.5,280.5 806.1,280.5 806.7,280.5 807.3,280.5 807.9,280.5 808.6,280.5 809.2,280.5 809.8,280.5 810.4,280.5 811.0,280.5 811.6,280.5 812.2,280.5 812.8,280.5 813.4,280.5 814.1,280.5 814.7,280.5 815.3,280.5 815.9,280.5 816.5,280.5 817.1,280.5 817.7,280.5 818.3,280.5" fill="none" stroke="#18e818" stroke-width="1.25" stroke-linejoin="round"/><text x="666.5" y="127.0" font-size="10.6" fill="#fff" text-anchor="start" textLength="79.0" lengthAdjust="spacingAndGlyphs">free HPBW: CORR</text><text x="759.5" y="127.0" font-size="10.6" fill="#fff" text-anchor="start" textLength="27.0" lengthAdjust="spacingAndGlyphs">−0.74</text><text x="824.1" y="127.0" font-size="10.6" fill="#fff" text-anchor="end" textLength="19.5" lengthAdjust="spacingAndGlyphs">6.59</text><text x="823.6" y="297.7" font-size="10" fill="#fff" text-anchor="end" textLength="118.5" lengthAdjust="spacingAndGlyphs">q  533649358859969986−</text><text x="871.5" y="84.0" font-size="10.5" fill="#fff" text-anchor="start" textLength="27.5" lengthAdjust="spacingAndGlyphs">G34.3</text><text x="934.5" y="84.0" font-size="10.5" fill="#fff" text-anchor="start" textLength="75.0" lengthAdjust="spacingAndGlyphs">#0214 MRT 30m</text><text x="1018.2" y="84.0" font-size="10.5" fill="#fff" text-anchor="start" textLength="123.4" lengthAdjust="spacingAndGlyphs">20101216 e1vul continuum</text><text x="871.5" y="93.3" font-size="8.6" fill="#fff" text-anchor="start" textLength="220.8" lengthAdjust="spacingAndGlyphs">freq. 173.50700GHz  Az 110.70−111.13 El 27.08−27.48deg</text><text x="1164.2" y="93.3" font-size="8.6" fill="#fff" text-anchor="start" textLength="9.0" lengthAdjust="spacingAndGlyphs">RC</text><text x="1193.3" y="93.3" font-size="8.6" fill="#fff" text-anchor="end">2</text><text x="893.2" y="100.0" font-size="7.4" fill="#fff" text-anchor="start" textLength="115.7" lengthAdjust="spacingAndGlyphs">COL*: old   −2.40 new   −0.85</text><text x="1055.6" y="100.0" font-size="7.4" fill="#fff" text-anchor="start" textLength="113.4" lengthAdjust="spacingAndGlyphs">NULE: old   10.00 new    6.46</text><text x="871.5" y="107.3" font-size="7.4" fill="#fff" text-anchor="start" textLength="157.2" lengthAdjust="spacingAndGlyphs">C   1.55     H  0.32184E+04 FWHM   16.38</text><text x="1034.1" y="107.3" font-size="7.4" fill="#fff" text-anchor="start" textLength="157.3" lengthAdjust="spacingAndGlyphs">C   −3.54     H  0.35542E+04 FWHM   15.80</text><rect x="871.0" y="111.5" width="160.5" height="192.8" fill="none" stroke="#fff" stroke-width="1.1"/><path d="M878.1 304.3 v-2 M878.1 111.5 v2 M890.2 304.3 v-3.5 M890.2 111.5 v3.5 M902.4 304.3 v-2 M902.4 111.5 v2 M914.5 304.3 v-2 M914.5 111.5 v2 M926.7 304.3 v-2 M926.7 111.5 v2 M938.9 304.3 v-2 M938.9 111.5 v2 M951.0 304.3 v-3.5 M951.0 111.5 v3.5 M963.1 304.3 v-2 M963.1 111.5 v2 M975.3 304.3 v-2 M975.3 111.5 v2 M987.5 304.3 v-2 M987.5 111.5 v2 M999.6 304.3 v-2 M999.6 111.5 v2 M1011.8 304.3 v-3.5 M1011.8 111.5 v3.5 M1023.9 304.3 v-2 M1023.9 111.5 v2 M871.0 295.4 h1.6 M1031.5 295.4 h-1.6 M871.0 286.2 h2.7 M1031.5 286.2 h-2.7 M871.0 277.0 h1.6 M1031.5 277.0 h-1.6 M871.0 267.8 h1.6 M1031.5 267.8 h-1.6 M871.0 258.5 h1.6 M1031.5 258.5 h-1.6 M871.0 249.3 h1.6 M1031.5 249.3 h-1.6 M871.0 240.1 h2.7 M1031.5 240.1 h-2.7 M871.0 230.9 h1.6 M1031.5 230.9 h-1.6 M871.0 221.7 h1.6 M1031.5 221.7 h-1.6 M871.0 212.4 h1.6 M1031.5 212.4 h-1.6 M871.0 203.2 h1.6 M1031.5 203.2 h-1.6 M871.0 194.0 h2.7 M1031.5 194.0 h-2.7 M871.0 184.8 h1.6 M1031.5 184.8 h-1.6 M871.0 175.6 h1.6 M1031.5 175.6 h-1.6 M871.0 166.3 h1.6 M1031.5 166.3 h-1.6 M871.0 157.1 h1.6 M1031.5 157.1 h-1.6 M871.0 147.9 h2.7 M1031.5 147.9 h-2.7 M871.0 138.7 h1.6 M1031.5 138.7 h-1.6 M871.0 129.5 h1.6 M1031.5 129.5 h-1.6 M871.0 120.2 h1.6 M1031.5 120.2 h-1.6 " stroke="#fff" stroke-width="1.1" fill="none"/><rect x="1031.5" y="111.5" width="161.79999999999995" height="192.8" fill="none" stroke="#fff" stroke-width="1.1"/><path d="M1039.3 304.3 v-2 M1039.3 111.5 v2 M1051.5 304.3 v-3.5 M1051.5 111.5 v3.5 M1063.6 304.3 v-2 M1063.6 111.5 v2 M1075.8 304.3 v-2 M1075.8 111.5 v2 M1087.9 304.3 v-2 M1087.9 111.5 v2 M1100.0 304.3 v-2 M1100.0 111.5 v2 M1112.2 304.3 v-3.5 M1112.2 111.5 v3.5 M1124.4 304.3 v-2 M1124.4 111.5 v2 M1136.5 304.3 v-2 M1136.5 111.5 v2 M1148.7 304.3 v-2 M1148.7 111.5 v2 M1160.8 304.3 v-2 M1160.8 111.5 v2 M1173.0 304.3 v-3.5 M1173.0 111.5 v3.5 M1185.1 304.3 v-2 M1185.1 111.5 v2 M1031.5 295.4 h1.6 M1193.3 295.4 h-1.6 M1031.5 286.2 h2.7 M1193.3 286.2 h-2.7 M1031.5 277.0 h1.6 M1193.3 277.0 h-1.6 M1031.5 267.8 h1.6 M1193.3 267.8 h-1.6 M1031.5 258.5 h1.6 M1193.3 258.5 h-1.6 M1031.5 249.3 h1.6 M1193.3 249.3 h-1.6 M1031.5 240.1 h2.7 M1193.3 240.1 h-2.7 M1031.5 230.9 h1.6 M1193.3 230.9 h-1.6 M1031.5 221.7 h1.6 M1193.3 221.7 h-1.6 M1031.5 212.4 h1.6 M1193.3 212.4 h-1.6 M1031.5 203.2 h1.6 M1193.3 203.2 h-1.6 M1031.5 194.0 h2.7 M1193.3 194.0 h-2.7 M1031.5 184.8 h1.6 M1193.3 184.8 h-1.6 M1031.5 175.6 h1.6 M1193.3 175.6 h-1.6 M1031.5 166.3 h1.6 M1193.3 166.3 h-1.6 M1031.5 157.1 h1.6 M1193.3 157.1 h-1.6 M1031.5 147.9 h2.7 M1193.3 147.9 h-2.7 M1031.5 138.7 h1.6 M1193.3 138.7 h-1.6 M1031.5 129.5 h1.6 M1193.3 129.5 h-1.6 M1031.5 120.2 h1.6 M1193.3 120.2 h-1.6 " stroke="#fff" stroke-width="1.1" fill="none"/><text x="866.5" y="289.2" font-size="8.4" fill="#fff" text-anchor="end">0</text><text x="866.5" y="243.1" font-size="8.4" fill="#fff" text-anchor="end">1000</text><text x="866.5" y="197.0" font-size="8.4" fill="#fff" text-anchor="end">2000</text><text x="866.5" y="150.9" font-size="8.4" fill="#fff" text-anchor="end">3000</text><text x="890.2" y="315.8" font-size="8.4" fill="#fff" text-anchor="middle">−50</text><text x="951.0" y="315.8" font-size="8.4" fill="#fff" text-anchor="middle">0</text><text x="1011.8" y="315.8" font-size="8.4" fill="#fff" text-anchor="middle">50</text><text x="1051.5" y="315.8" font-size="8.4" fill="#fff" text-anchor="middle">−50</text><text x="1112.2" y="315.8" font-size="8.4" fill="#fff" text-anchor="middle">0</text><text x="1173.0" y="315.8" font-size="8.4" fill="#fff" text-anchor="middle">50</text><text x="951.2" y="323.8" font-size="7.6" fill="#fff" text-anchor="middle" textLength="66.0" lengthAdjust="spacingAndGlyphs">AZ offset [arcsec]</text><text x="1113.9" y="323.8" font-size="7.6" fill="#fff" text-anchor="middle" textLength="65.0" lengthAdjust="spacingAndGlyphs">EL offset [arcsec]</text><text transform="translate(841.0,208.5) rotate(-90)" font-size="7.6" fill="#fff" text-anchor="middle" textLength="65" lengthAdjust="spacingAndGlyphs">Iv [counts/beam]</text><polyline points="884.2,293.3 885.4,289.7 886.6,289.2 887.8,288.1 889.0,287.3 890.2,287.4 891.5,287.6 892.7,287.8 893.9,288.0 895.1,289.0 896.3,290.1 897.5,290.6 898.8,290.6 900.0,290.9 901.2,291.1 902.4,291.1 903.6,290.9 904.8,290.6 906.0,290.3 907.3,290.1 908.5,290.0 909.7,289.9 910.9,289.9 912.1,289.8 913.3,289.7 914.5,289.6 915.8,289.2 917.0,288.6 918.2,288.0 919.4,287.8 920.6,287.1 921.8,285.7 923.1,284.2 924.3,283.4 925.5,282.9 926.7,281.8 927.9,280.5 929.1,279.4 930.3,280.0 931.6,280.2 932.8,277.9 934.0,275.5 935.2,272.2 936.4,267.0 937.6,260.0 938.9,251.7 940.1,242.1 941.3,231.1 942.5,218.0 943.7,203.5 944.9,189.2 946.1,176.3 947.4,164.4 948.6,153.9 949.8,145.3 951.0,139.3 952.2,136.0 953.4,135.9 954.6,139.7 955.9,146.5 957.1,155.4 958.3,166.3 959.5,180.2 960.7,194.3 961.9,206.6 963.1,216.8 964.4,226.7 965.6,236.8 966.8,243.8 968.0,249.7 969.2,256.4 970.4,262.3 971.7,267.1 972.9,270.8 974.1,273.8 975.3,276.8 976.5,279.5 977.7,281.2 978.9,282.2 980.2,283.8 981.4,285.6 982.6,286.5 983.8,286.8 985.0,287.5 986.2,288.0 987.5,287.7 988.7,286.8 989.9,285.7 991.1,284.9 992.3,284.7 993.5,284.2 994.7,283.5 996.0,282.7 997.2,282.3 998.4,282.2 999.6,282.2 1000.8,282.3 1002.0,282.5 1003.2,282.6 1004.5,282.6 1005.7,282.5 1006.9,282.0 1008.1,281.3 1009.3,280.6 1010.5,280.1 1011.8,280.1 1013.0,281.3 1014.2,282.6 1015.4,283.1 1016.6,285.5 1017.8,287.1" fill="none" stroke="#ffffff" stroke-width="1.3" stroke-linejoin="round"/><polyline points="884.2,289.3 885.4,285.8 886.6,285.3 887.8,284.2 889.0,283.5 890.2,283.6 891.5,284.0 892.7,284.2 893.9,284.5 895.1,285.6 896.3,286.8 897.5,287.3 898.8,287.4 900.0,287.7 901.2,287.9 902.4,288.0 903.6,287.9 904.8,287.7 906.0,287.4 907.3,287.3 908.5,287.3 909.7,287.3 910.9,287.3 912.1,287.3 913.3,287.3 914.5,287.2 915.8,286.8 917.0,286.3 918.2,285.9 919.4,285.7 920.6,285.1 921.8,283.8 923.1,282.6 924.3,282.0 925.5,281.8 926.7,281.2 927.9,280.7 929.1,280.6 930.3,282.6 931.6,284.8 932.8,285.3 934.0,286.3 935.2,287.5 936.4,288.0 937.6,288.0 938.9,288.0 940.1,288.0 941.3,287.9 942.5,286.8 943.7,284.9 944.9,283.7 946.1,283.5 947.4,283.5 948.6,283.5 949.8,283.5 951.0,283.5 952.2,283.5 953.4,283.7 954.6,284.6 955.9,285.8 957.1,286.5 958.3,287.2 959.5,289.3 960.7,290.9 961.9,290.4 963.1,288.0 964.4,286.0 965.6,285.2 966.8,282.4 968.0,280.0 969.2,279.8 970.4,280.1 971.7,280.4 972.9,280.5 974.1,280.9 975.3,282.1 976.5,283.4 977.7,284.2 978.9,284.5 980.2,285.7 981.4,287.2 982.6,288.0 983.8,288.3 985.0,289.0 986.2,289.5 987.5,289.2 988.7,288.4 989.9,287.3 991.1,286.6 992.3,286.4 993.5,286.0 994.7,285.3 996.0,284.7 997.2,284.3 998.4,284.3 999.6,284.4 1000.8,284.5 1002.0,284.7 1003.2,284.9 1004.5,285.0 1005.7,285.0 1006.9,284.6 1008.1,283.9 1009.3,283.2 1010.5,282.8 1011.8,282.9 1013.0,284.2 1014.2,285.5 1015.4,286.0 1016.6,288.6 1017.8,290.3" fill="none" stroke="#c0c0c0" stroke-width="1.5" stroke-linejoin="round"/><polyline points="877.5,290.6 878.1,290.6 878.7,290.5 879.3,290.5 879.9,290.5 880.5,290.4 881.1,290.4 881.7,290.4 882.4,290.3 883.0,290.3 883.6,290.3 884.2,290.2 884.8,290.2 885.4,290.2 886.0,290.1 886.6,290.1 887.2,290.1 887.8,290.0 888.4,290.0 889.0,290.0 889.6,289.9 890.2,289.9 890.9,289.9 891.5,289.8 892.1,289.8 892.7,289.8 893.3,289.7 893.9,289.7 894.5,289.7 895.1,289.7 895.7,289.6 896.3,289.6 896.9,289.6 897.5,289.5 898.1,289.5 898.8,289.5 899.4,289.4 900.0,289.4 900.6,289.4 901.2,289.3 901.8,289.3 902.4,289.3 903.0,289.2 903.6,289.2 904.2,289.2 904.8,289.1 905.4,289.1 906.0,289.1 906.7,289.0 907.3,289.0 907.9,289.0 908.5,288.9 909.1,288.9 909.7,288.9 910.3,288.8 910.9,288.8 911.5,288.8 912.1,288.7 912.7,288.7 913.3,288.7 913.9,288.6 914.5,288.6 915.2,288.6 915.8,288.5 916.4,288.5 917.0,288.5 917.6,288.4 918.2,288.4 918.8,288.3 919.4,288.3 920.0,288.2 920.6,288.2 921.2,288.1 921.8,288.0 922.4,288.0 923.1,287.9 923.7,287.7 924.3,287.6 924.9,287.4 925.5,287.3 926.1,287.0 926.7,286.7 927.3,286.4 927.9,286.0 928.5,285.5 929.1,285.0 929.7,284.3 930.3,283.5 931.0,282.6 931.6,281.5 932.2,280.3 932.8,278.9 933.4,277.2 934.0,275.4 934.6,273.3 935.2,270.9 935.8,268.2 936.4,265.2 937.0,261.9 937.6,258.2 938.2,254.3 938.9,249.9 939.5,245.3 940.1,240.3 940.7,235.0 941.3,229.4 941.9,223.5 942.5,217.4 943.1,211.1 943.7,204.7 944.3,198.2 944.9,191.8 945.5,185.3 946.1,179.0 946.7,172.9 947.4,167.1 948.0,161.6 948.6,156.5 949.2,152.0 949.8,148.0 950.4,144.6 951.0,141.9 951.6,139.9 952.2,138.7 952.8,138.2 953.4,138.5 954.0,139.5 954.6,141.3 955.3,143.8 955.9,147.0 956.5,150.8 957.1,155.1 957.7,160.0 958.3,165.4 958.9,171.1 959.5,177.1 960.1,183.3 960.7,189.6 961.3,196.0 961.9,202.5 962.5,208.8 963.1,215.1 963.8,221.1 964.4,227.0 965.0,232.6 965.6,237.9 966.2,242.9 966.8,247.5 967.4,251.9 968.0,255.8 968.6,259.5 969.2,262.8 969.8,265.8 970.4,268.5 971.0,270.9 971.7,273.0 972.3,274.8 972.9,276.4 973.5,277.8 974.1,279.0 974.7,280.1 975.3,281.0 975.9,281.7 976.5,282.3 977.1,282.8 977.7,283.3 978.3,283.6 978.9,283.9 979.6,284.1 980.2,284.3 980.8,284.4 981.4,284.5 982.0,284.6 982.6,284.7 983.2,284.7 983.8,284.7 984.4,284.7 985.0,284.7 985.6,284.7 986.2,284.7 986.8,284.7 987.5,284.7 988.1,284.7 988.7,284.6 989.3,284.6 989.9,284.6 990.5,284.5 991.1,284.5 991.7,284.5 992.3,284.4 992.9,284.4 993.5,284.4 994.1,284.4 994.7,284.3 995.3,284.3 996.0,284.3 996.6,284.2 997.2,284.2 997.8,284.2 998.4,284.1 999.0,284.1 999.6,284.1 1000.2,284.0 1000.8,284.0 1001.4,284.0 1002.0,283.9 1002.6,283.9 1003.2,283.9 1003.9,283.8 1004.5,283.8 1005.1,283.8 1005.7,283.7 1006.3,283.7 1006.9,283.7 1007.5,283.6 1008.1,283.6 1008.7,283.6 1009.3,283.5 1009.9,283.5 1010.5,283.5 1011.1,283.4 1011.8,283.4 1012.4,283.4 1013.0,283.3 1013.6,283.3 1014.2,283.3 1014.8,283.2 1015.4,283.2 1016.0,283.2 1016.6,283.2 1017.2,283.1 1017.8,283.1 1018.4,283.1 1019.0,283.0 1019.6,283.0 1020.3,283.0 1020.9,282.9 1021.5,282.9 1022.1,282.9 1022.7,282.8 1023.3,282.8 1023.9,282.8 1024.5,282.7" fill="none" stroke="#f00000" stroke-width="1.25" stroke-linejoin="round"/><polyline points="1045.4,288.1 1046.6,288.3 1047.8,288.5 1049.0,288.7 1050.2,288.8 1051.5,288.9 1052.7,289.0 1053.9,289.4 1055.1,289.9 1056.3,290.3 1057.5,290.4 1058.7,291.0 1060.0,292.2 1061.2,293.5 1062.4,294.2 1063.6,293.7 1064.8,292.3 1066.0,291.3 1067.2,289.8 1068.5,284.9 1069.7,283.0 1070.9,282.8 1072.1,282.3 1073.3,281.8 1074.5,281.5 1075.8,280.3 1077.0,277.3 1078.2,275.4 1079.4,274.9 1080.6,273.5 1081.8,272.0 1083.0,271.1 1084.3,271.6 1085.5,271.9 1086.7,272.6 1087.9,275.0 1089.1,274.8 1090.3,273.9 1091.5,267.8 1092.8,259.9 1094.0,250.5 1095.2,239.8 1096.4,226.9 1097.6,212.3 1098.8,197.3 1100.0,182.4 1101.3,167.4 1102.5,153.2 1103.7,140.7 1104.9,131.0 1106.1,124.8 1107.3,122.5 1108.6,123.9 1109.8,128.6 1111.0,136.1 1112.2,145.8 1113.4,157.2 1114.6,169.8 1115.8,183.1 1117.1,196.8 1118.3,210.6 1119.5,224.1 1120.7,237.2 1121.9,249.2 1123.1,259.4 1124.4,267.3 1125.6,272.7 1126.8,275.8 1128.0,277.7 1129.2,279.7 1130.4,281.4 1131.6,282.5 1132.9,283.1 1134.1,283.4 1135.3,283.6 1136.5,283.5 1137.7,283.5 1138.9,283.5 1140.1,283.7 1141.4,284.4 1142.6,285.6 1143.8,286.7 1145.0,287.3 1146.2,287.4 1147.4,287.6 1148.7,287.7 1149.9,288.0 1151.1,288.1 1152.3,288.2 1153.5,288.3 1154.7,288.3 1155.9,288.3 1157.2,288.3 1158.4,288.3 1159.6,288.3 1160.8,288.3 1162.0,288.3 1163.2,288.4 1164.4,288.3 1165.7,288.1 1166.9,287.8 1168.1,287.4 1169.3,287.0 1170.5,286.7 1171.7,286.4 1173.0,286.2 1174.2,286.2 1175.4,286.7 1176.6,287.6 1177.8,288.5 1179.0,289.1" fill="none" stroke="#ffffff" stroke-width="1.3" stroke-linejoin="round"/><polyline points="1045.4,288.1 1046.6,288.2 1047.8,288.4 1049.0,288.6 1050.2,288.7 1051.5,288.7 1052.7,288.9 1053.9,289.3 1055.1,289.8 1056.3,290.1 1057.5,290.3 1058.7,290.8 1060.0,292.1 1061.2,293.3 1062.4,294.0 1063.6,293.5 1064.8,292.1 1066.0,291.1 1067.2,289.5 1068.5,284.7 1069.7,282.7 1070.9,282.5 1072.1,282.0 1073.3,281.5 1074.5,281.3 1075.8,280.0 1077.0,277.1 1078.2,275.3 1079.4,274.9 1080.6,273.7 1081.8,272.6 1083.0,272.3 1084.3,273.7 1085.5,275.2 1086.7,277.7 1087.9,282.7 1089.1,285.8 1090.3,289.5 1091.5,289.2 1092.8,288.6 1094.0,288.1 1095.2,287.9 1096.4,287.1 1097.6,285.8 1098.8,285.0 1100.0,284.9 1101.3,284.5 1102.5,284.0 1103.7,283.6 1104.9,283.6 1106.1,284.2 1107.3,285.3 1108.6,286.6 1109.8,287.6 1111.0,288.0 1112.2,287.7 1113.4,286.9 1114.6,285.6 1115.8,284.3 1117.1,283.3 1118.3,282.8 1119.5,283.0 1120.7,284.2 1121.9,285.8 1123.1,287.3 1124.4,288.0 1125.6,287.6 1126.8,286.2 1128.0,284.8 1129.2,284.3 1130.4,284.2 1131.6,284.1 1132.9,283.8 1134.1,283.6 1135.3,283.3 1136.5,283.0 1137.7,282.9 1138.9,282.8 1140.1,282.8 1141.4,283.5 1142.6,284.7 1143.8,285.8 1145.0,286.4 1146.2,286.5 1147.4,286.6 1148.7,286.8 1149.9,287.0 1151.1,287.1 1152.3,287.2 1153.5,287.3 1154.7,287.3 1155.9,287.3 1157.2,287.3 1158.4,287.3 1159.6,287.3 1160.8,287.3 1162.0,287.3 1163.2,287.3 1164.4,287.2 1165.7,287.0 1166.9,286.7 1168.1,286.3 1169.3,285.9 1170.5,285.5 1171.7,285.2 1173.0,285.0 1174.2,285.0 1175.4,285.5 1176.6,286.4 1177.8,287.3 1179.0,287.9" fill="none" stroke="#c0c0c0" stroke-width="1.5" stroke-linejoin="round"/><polyline points="1038.7,286.2 1039.3,286.2 1039.9,286.2 1040.5,286.2 1041.1,286.2 1041.7,286.2 1042.3,286.2 1042.9,286.2 1043.6,286.2 1044.2,286.3 1044.8,286.3 1045.4,286.3 1046.0,286.3 1046.6,286.3 1047.2,286.3 1047.8,286.3 1048.4,286.3 1049.0,286.3 1049.6,286.3 1050.2,286.3 1050.8,286.3 1051.5,286.3 1052.1,286.3 1052.7,286.3 1053.3,286.3 1053.9,286.3 1054.5,286.3 1055.1,286.3 1055.7,286.4 1056.3,286.4 1056.9,286.4 1057.5,286.4 1058.1,286.4 1058.7,286.4 1059.3,286.4 1060.0,286.4 1060.6,286.4 1061.2,286.4 1061.8,286.4 1062.4,286.4 1063.0,286.4 1063.6,286.4 1064.2,286.4 1064.8,286.4 1065.4,286.4 1066.0,286.4 1066.6,286.4 1067.2,286.5 1067.9,286.5 1068.5,286.5 1069.1,286.5 1069.7,286.5 1070.3,286.5 1070.9,286.5 1071.5,286.5 1072.1,286.5 1072.7,286.5 1073.3,286.5 1073.9,286.5 1074.5,286.5 1075.1,286.5 1075.8,286.5 1076.4,286.4 1077.0,286.4 1077.6,286.4 1078.2,286.3 1078.8,286.3 1079.4,286.2 1080.0,286.1 1080.6,286.0 1081.2,285.8 1081.8,285.6 1082.4,285.3 1083.0,285.0 1083.6,284.6 1084.3,284.2 1084.9,283.6 1085.5,282.9 1086.1,282.1 1086.7,281.1 1087.3,279.9 1087.9,278.5 1088.5,277.0 1089.1,275.1 1089.7,273.0 1090.3,270.6 1090.9,267.8 1091.5,264.8 1092.2,261.3 1092.8,257.5 1093.4,253.2 1094.0,248.6 1094.6,243.5 1095.2,238.1 1095.8,232.3 1096.4,226.1 1097.0,219.5 1097.6,212.7 1098.2,205.7 1098.8,198.4 1099.4,191.1 1100.0,183.7 1100.7,176.3 1101.3,169.1 1101.9,162.1 1102.5,155.4 1103.1,149.1 1103.7,143.3 1104.3,138.1 1104.9,133.6 1105.5,129.8 1106.1,126.8 1106.7,124.6 1107.3,123.3 1107.9,123.0 1108.6,123.5 1109.2,124.9 1109.8,127.2 1110.4,130.4 1111.0,134.3 1111.6,139.0 1112.2,144.3 1112.8,150.2 1113.4,156.5 1114.0,163.3 1114.6,170.3 1115.2,177.6 1115.8,185.0 1116.5,192.4 1117.1,199.7 1117.7,207.0 1118.3,214.0 1118.9,220.8 1119.5,227.3 1120.1,233.4 1120.7,239.2 1121.3,244.6 1121.9,249.6 1122.5,254.2 1123.1,258.4 1123.7,262.2 1124.4,265.6 1125.0,268.6 1125.6,271.3 1126.2,273.7 1126.8,275.8 1127.4,277.6 1128.0,279.1 1128.6,280.5 1129.2,281.6 1129.8,282.6 1130.4,283.4 1131.0,284.1 1131.6,284.7 1132.2,285.1 1132.9,285.5 1133.5,285.8 1134.1,286.1 1134.7,286.3 1135.3,286.5 1135.9,286.6 1136.5,286.7 1137.1,286.8 1137.7,286.9 1138.3,286.9 1138.9,287.0 1139.5,287.0 1140.1,287.0 1140.8,287.0 1141.4,287.1 1142.0,287.1 1142.6,287.1 1143.2,287.1 1143.8,287.1 1144.4,287.1 1145.0,287.1 1145.6,287.1 1146.2,287.1 1146.8,287.1 1147.4,287.2 1148.0,287.2 1148.7,287.2 1149.3,287.2 1149.9,287.2 1150.5,287.2 1151.1,287.2 1151.7,287.2 1152.3,287.2 1152.9,287.2 1153.5,287.2 1154.1,287.2 1154.7,287.2 1155.3,287.2 1155.9,287.2 1156.5,287.2 1157.2,287.2 1157.8,287.2 1158.4,287.2 1159.0,287.3 1159.6,287.3 1160.2,287.3 1160.8,287.3 1161.4,287.3 1162.0,287.3 1162.6,287.3 1163.2,287.3 1163.8,287.3 1164.4,287.3 1165.1,287.3 1165.7,287.3 1166.3,287.3 1166.9,287.3 1167.5,287.3 1168.1,287.3 1168.7,287.3 1169.3,287.3 1169.9,287.3 1170.5,287.4 1171.1,287.4 1171.7,287.4 1172.3,287.4 1173.0,287.4 1173.6,287.4 1174.2,287.4 1174.8,287.4 1175.4,287.4 1176.0,287.4 1176.6,287.4 1177.2,287.4 1177.8,287.4 1178.4,287.4 1179.0,287.4 1179.6,287.4 1180.2,287.4 1180.8,287.4 1181.5,287.4 1182.1,287.5 1182.7,287.5 1183.3,287.5 1183.9,287.5 1184.5,287.5 1185.1,287.5 1185.7,287.5" fill="none" stroke="#18e818" stroke-width="1.25" stroke-linejoin="round"/><text x="1034.5" y="127.0" font-size="10.6" fill="#fff" text-anchor="start" textLength="79.0" lengthAdjust="spacingAndGlyphs">free HPBW. CORR</text><text x="1127.5" y="127.0" font-size="10.6" fill="#fff" text-anchor="start" textLength="27.0" lengthAdjust="spacingAndGlyphs">−0.85</text><text x="1191.8" y="127.0" font-size="10.6" fill="#fff" text-anchor="end" textLength="19.5" lengthAdjust="spacingAndGlyphs">6.46</text><text x="1191.3" y="297.7" font-size="10" fill="#fff" text-anchor="end" textLength="118.5" lengthAdjust="spacingAndGlyphs">q  624360408849959986−</text><text x="503.5" y="351.8" font-size="10.5" fill="#fff" text-anchor="start" textLength="27.5" lengthAdjust="spacingAndGlyphs">G34.3</text><text x="566.6" y="351.8" font-size="10.5" fill="#fff" text-anchor="start" textLength="75.0" lengthAdjust="spacingAndGlyphs">#0214 MRT 30m</text><text x="650.5" y="351.8" font-size="10.5" fill="#fff" text-anchor="start" textLength="120.8" lengthAdjust="spacingAndGlyphs">20101216 e3hll continuum</text><text x="503.5" y="361.1" font-size="8.6" fill="#fff" text-anchor="start" textLength="220.8" lengthAdjust="spacingAndGlyphs">freq 267.55700GHz  Az 110.70−111.13 El 27.08−27.48deg</text><text x="796.9" y="361.1" font-size="8.6" fill="#fff" text-anchor="start" textLength="9.0" lengthAdjust="spacingAndGlyphs">RC</text><text x="825.6" y="361.1" font-size="8.6" fill="#fff" text-anchor="end">3</text><text x="525.3" y="367.8" font-size="7.4" fill="#fff" text-anchor="start" textLength="115.7" lengthAdjust="spacingAndGlyphs">COL*: old   −2.40 new   −1.37</text><text x="688.1" y="367.8" font-size="7.4" fill="#fff" text-anchor="start" textLength="113.4" lengthAdjust="spacingAndGlyphs">NULE: old   10.00 new    6.20</text><text x="503.5" y="375.1" font-size="7.4" fill="#fff" text-anchor="start" textLength="157.2" lengthAdjust="spacingAndGlyphs">C   1.03     H  0.30719E+04 FWHM   12.61</text><text x="666.5" y="375.1" font-size="7.4" fill="#fff" text-anchor="start" textLength="157.3" lengthAdjust="spacingAndGlyphs">C   −3.80     H  0.37404E+04 FWHM   12.96</text><rect x="502.5" y="379.3" width="161.0" height="193.3" fill="none" stroke="#fff" stroke-width="1.1"/><path d="M509.7 572.6 v-2 M509.7 379.3 v2 M521.9 572.6 v-3.5 M521.9 379.3 v3.5 M534.1 572.6 v-2 M534.1 379.3 v2 M546.3 572.6 v-2 M546.3 379.3 v2 M558.6 572.6 v-2 M558.6 379.3 v2 M570.8 572.6 v-2 M570.8 379.3 v2 M583.0 572.6 v-3.5 M583.0 379.3 v3.5 M595.2 572.6 v-2 M595.2 379.3 v2 M607.4 572.6 v-2 M607.4 379.3 v2 M619.7 572.6 v-2 M619.7 379.3 v2 M631.9 572.6 v-2 M631.9 379.3 v2 M644.1 572.6 v-3.5 M644.1 379.3 v3.5 M656.3 572.6 v-2 M656.3 379.3 v2 M502.5 566.4 h1.6 M663.5 566.4 h-1.6 M502.5 558.1 h1.6 M663.5 558.1 h-1.6 M502.5 549.9 h2.7 M663.5 549.9 h-2.7 M502.5 541.7 h1.6 M663.5 541.7 h-1.6 M502.5 533.4 h1.6 M663.5 533.4 h-1.6 M502.5 525.2 h1.6 M663.5 525.2 h-1.6 M502.5 516.9 h1.6 M663.5 516.9 h-1.6 M502.5 508.7 h2.7 M663.5 508.7 h-2.7 M502.5 500.5 h1.6 M663.5 500.5 h-1.6 M502.5 492.2 h1.6 M663.5 492.2 h-1.6 M502.5 484.0 h1.6 M663.5 484.0 h-1.6 M502.5 475.7 h1.6 M663.5 475.7 h-1.6 M502.5 467.5 h2.7 M663.5 467.5 h-2.7 M502.5 459.3 h1.6 M663.5 459.3 h-1.6 M502.5 451.0 h1.6 M663.5 451.0 h-1.6 M502.5 442.8 h1.6 M663.5 442.8 h-1.6 M502.5 434.5 h1.6 M663.5 434.5 h-1.6 M502.5 426.3 h2.7 M663.5 426.3 h-2.7 M502.5 418.1 h1.6 M663.5 418.1 h-1.6 M502.5 409.8 h1.6 M663.5 409.8 h-1.6 M502.5 401.6 h1.6 M663.5 401.6 h-1.6 M502.5 393.3 h1.6 M663.5 393.3 h-1.6 M502.5 385.1 h2.7 M663.5 385.1 h-2.7 " stroke="#fff" stroke-width="1.1" fill="none"/><rect x="663.5" y="379.3" width="162.10000000000002" height="193.3" fill="none" stroke="#fff" stroke-width="1.1"/><path d="M671.1 572.6 v-2 M671.1 379.3 v2 M683.3 572.6 v-3.5 M683.3 379.3 v3.5 M695.5 572.6 v-2 M695.5 379.3 v2 M707.7 572.6 v-2 M707.7 379.3 v2 M720.0 572.6 v-2 M720.0 379.3 v2 M732.2 572.6 v-2 M732.2 379.3 v2 M744.4 572.6 v-3.5 M744.4 379.3 v3.5 M756.6 572.6 v-2 M756.6 379.3 v2 M768.8 572.6 v-2 M768.8 379.3 v2 M781.1 572.6 v-2 M781.1 379.3 v2 M793.3 572.6 v-2 M793.3 379.3 v2 M805.5 572.6 v-3.5 M805.5 379.3 v3.5 M817.7 572.6 v-2 M817.7 379.3 v2 M663.5 566.4 h1.6 M825.6 566.4 h-1.6 M663.5 558.1 h1.6 M825.6 558.1 h-1.6 M663.5 549.9 h2.7 M825.6 549.9 h-2.7 M663.5 541.7 h1.6 M825.6 541.7 h-1.6 M663.5 533.4 h1.6 M825.6 533.4 h-1.6 M663.5 525.2 h1.6 M825.6 525.2 h-1.6 M663.5 516.9 h1.6 M825.6 516.9 h-1.6 M663.5 508.7 h2.7 M825.6 508.7 h-2.7 M663.5 500.5 h1.6 M825.6 500.5 h-1.6 M663.5 492.2 h1.6 M825.6 492.2 h-1.6 M663.5 484.0 h1.6 M825.6 484.0 h-1.6 M663.5 475.7 h1.6 M825.6 475.7 h-1.6 M663.5 467.5 h2.7 M825.6 467.5 h-2.7 M663.5 459.3 h1.6 M825.6 459.3 h-1.6 M663.5 451.0 h1.6 M825.6 451.0 h-1.6 M663.5 442.8 h1.6 M825.6 442.8 h-1.6 M663.5 434.5 h1.6 M825.6 434.5 h-1.6 M663.5 426.3 h2.7 M825.6 426.3 h-2.7 M663.5 418.1 h1.6 M825.6 418.1 h-1.6 M663.5 409.8 h1.6 M825.6 409.8 h-1.6 M663.5 401.6 h1.6 M825.6 401.6 h-1.6 M663.5 393.3 h1.6 M825.6 393.3 h-1.6 M663.5 385.1 h2.7 M825.6 385.1 h-2.7 " stroke="#fff" stroke-width="1.1" fill="none"/><text x="498.0" y="552.9" font-size="8.4" fill="#fff" text-anchor="end">0</text><text x="498.0" y="511.7" font-size="8.4" fill="#fff" text-anchor="end">1000</text><text x="498.0" y="470.5" font-size="8.4" fill="#fff" text-anchor="end">2000</text><text x="498.0" y="429.3" font-size="8.4" fill="#fff" text-anchor="end">3000</text><text x="498.0" y="388.1" font-size="8.4" fill="#fff" text-anchor="end">4000</text><text x="521.9" y="584.1" font-size="8.4" fill="#fff" text-anchor="middle">−50</text><text x="583.0" y="584.1" font-size="8.4" fill="#fff" text-anchor="middle">0</text><text x="644.1" y="584.1" font-size="8.4" fill="#fff" text-anchor="middle">50</text><text x="683.3" y="584.1" font-size="8.4" fill="#fff" text-anchor="middle">−50</text><text x="744.4" y="584.1" font-size="8.4" fill="#fff" text-anchor="middle">0</text><text x="805.5" y="584.1" font-size="8.4" fill="#fff" text-anchor="middle">50</text><text x="583.0" y="592.1" font-size="7.6" fill="#fff" text-anchor="middle" textLength="66.0" lengthAdjust="spacingAndGlyphs">AZ offset [arcsec]</text><text x="746.0" y="592.1" font-size="7.6" fill="#fff" text-anchor="middle" textLength="65.0" lengthAdjust="spacingAndGlyphs">EL offset [arcsec]</text><text transform="translate(472.5,476.6) rotate(-90)" font-size="7.6" fill="#fff" text-anchor="middle" textLength="65" lengthAdjust="spacingAndGlyphs">Iv [counts/beam]</text><polyline points="515.8,562.6 517.0,560.2 518.2,555.3 519.5,554.1 520.7,553.1 521.9,551.8 523.1,550.9 524.3,551.1 525.6,552.1 526.8,552.9 528.0,553.2 529.2,554.7 530.5,556.4 531.7,557.1 532.9,558.3 534.1,560.3 535.3,559.6 536.6,554.3 537.8,551.4 539.0,551.8 540.2,552.1 541.5,554.5 542.7,558.1 543.9,559.2 545.1,557.9 546.3,555.7 547.6,554.0 548.8,553.5 550.0,552.2 551.2,550.8 552.5,550.2 553.7,548.5 554.9,547.3 556.1,547.7 557.3,548.8 558.6,549.7 559.8,549.6 561.0,546.5 562.2,542.3 563.4,540.6 564.7,539.2 565.9,537.3 567.1,536.7 568.3,536.0 569.6,535.0 570.8,532.5 572.0,526.9 573.2,520.4 574.4,510.8 575.7,498.4 576.9,484.6 578.1,470.3 579.3,456.1 580.6,441.9 581.8,429.7 583.0,422.3 584.2,416.7 585.4,418.1 586.7,427.6 587.9,439.5 589.1,452.7 590.3,468.6 591.6,484.6 592.8,498.6 594.0,509.7 595.2,518.5 596.4,526.5 597.7,529.6 598.9,531.0 600.1,534.5 601.3,537.2 602.6,539.0 603.8,540.2 605.0,540.9 606.2,541.9 607.4,543.1 608.7,544.2 609.9,544.9 611.1,545.0 612.3,545.3 613.5,546.0 614.8,546.5 616.0,546.9 617.2,546.8 618.4,546.7 619.7,546.6 620.9,546.6 622.1,546.5 623.3,546.4 624.5,546.3 625.8,546.2 627.0,546.2 628.2,546.4 629.4,547.0 630.7,547.9 631.9,548.5 633.1,548.7 634.3,548.3 635.5,547.4 636.8,546.4 638.0,545.6 639.2,545.3 640.4,545.6 641.7,546.1 642.9,546.7 644.1,547.1 645.3,547.2 646.5,547.8 647.8,549.1 649.0,550.2 650.2,550.6" fill="none" stroke="#ffffff" stroke-width="1.3" stroke-linejoin="round"/><polyline points="515.8,558.6 517.0,556.2 518.2,551.5 519.5,550.3 520.7,549.4 521.9,548.2 523.1,547.4 524.3,547.6 525.6,548.7 526.8,549.6 528.0,550.0 529.2,551.6 530.5,553.3 531.7,554.1 532.9,555.4 534.1,557.5 535.3,556.9 536.6,551.6 537.8,548.9 539.0,549.3 540.2,549.7 541.5,552.2 542.7,555.9 543.9,557.1 545.1,555.9 546.3,553.7 547.6,552.1 548.8,551.7 550.0,550.4 551.2,549.1 552.5,548.7 553.7,547.0 554.9,545.9 556.1,546.4 557.3,547.6 558.6,548.6 559.8,548.7 561.0,545.8 562.2,541.9 563.4,540.6 564.7,539.8 565.9,539.1 567.1,540.2 568.3,542.1 569.6,544.7 570.8,547.4" fill="none" stroke="#c0c0c0" stroke-width="1.5" stroke-linejoin="round"/><polyline points="570.8,547.4 572.0,548.6 573.2,550.8 574.4,551.8 575.7,551.8 576.9,551.8 578.1,551.8 579.3,551.7 580.6,550.1 581.8,547.9 583.0,547.1 584.2,543.9 585.4,543.3 586.7,546.6 587.9,548.9 589.1,549.8 590.3,551.8 591.6,553.7 592.8,554.0 594.0,552.7 595.2,550.9 596.4,550.2 597.7,546.6 598.9,543.0" fill="none" stroke="#c0c0c0" stroke-width="1.5" stroke-linejoin="round" stroke-dasharray="1.6 1.8"/><polyline points="598.9,543.0 600.1,542.9 601.3,543.1 602.6,543.4 603.8,543.6 605.0,543.7 606.2,544.4 607.4,545.5 608.7,546.6 609.9,547.3 611.1,547.4 612.3,547.8 613.5,548.5 614.8,549.2 616.0,549.6 617.2,549.6 618.4,549.6 619.7,549.6 620.9,549.6 622.1,549.6 623.3,549.6 624.5,549.6 625.8,549.6 627.0,549.6 628.2,549.9 629.4,550.7 630.7,551.6 631.9,552.3 633.1,552.6 634.3,552.2 635.5,551.4 636.8,550.5 638.0,549.8 639.2,549.6 640.4,549.9 641.7,550.5 642.9,551.2 644.1,551.7 645.3,551.9 646.5,552.6 647.8,553.9 649.0,555.1 650.2,555.6" fill="none" stroke="#c0c0c0" stroke-width="1.5" stroke-linejoin="round"/><polyline points="509.1,554.4 509.7,554.3 510.3,554.3 510.9,554.3 511.5,554.2 512.1,554.2 512.7,554.1 513.3,554.1 514.0,554.1 514.6,554.0 515.2,554.0 515.8,553.9 516.4,553.9 517.0,553.9 517.6,553.8 518.2,553.8 518.8,553.7 519.5,553.7 520.1,553.6 520.7,553.6 521.3,553.6 521.9,553.5 522.5,553.5 523.1,553.4 523.7,553.4 524.3,553.4 525.0,553.3 525.6,553.3 526.2,553.2 526.8,553.2 527.4,553.2 528.0,553.1 528.6,553.1 529.2,553.0 529.8,553.0 530.5,552.9 531.1,552.9 531.7,552.9 532.3,552.8 532.9,552.8 533.5,552.7 534.1,552.7 534.7,552.7 535.3,552.6 536.0,552.6 536.6,552.5 537.2,552.5 537.8,552.5 538.4,552.4 539.0,552.4 539.6,552.3 540.2,552.3 540.8,552.2 541.5,552.2 542.1,552.2 542.7,552.1 543.3,552.1 543.9,552.0 544.5,552.0 545.1,552.0 545.7,551.9 546.3,551.9 547.0,551.8 547.6,551.8 548.2,551.8 548.8,551.7 549.4,551.7 550.0,551.6 550.6,551.6 551.2,551.5 551.8,551.5 552.5,551.5 553.1,551.4 553.7,551.4 554.3,551.3 554.9,551.3 555.5,551.3 556.1,551.2 556.7,551.2 557.3,551.1 557.9,551.1 558.6,551.0 559.2,550.9 559.8,550.9 560.4,550.8 561.0,550.7 561.6,550.5 562.2,550.4 562.8,550.2 563.4,549.9 564.1,549.6 564.7,549.2 565.3,548.7 565.9,548.1 566.5,547.3 567.1,546.4 567.7,545.2 568.3,543.8 568.9,542.2 569.6,540.2 570.2,537.8 570.8,535.1 571.4,531.9 572.0,528.2 572.6,524.1 573.2,519.5 573.8,514.4 574.4,508.9 575.1,502.9 575.7,496.4 576.3,489.7 576.9,482.7 577.5,475.5 578.1,468.3 578.7,461.2 579.3,454.3 579.9,447.8 580.6,441.7 581.2,436.3 581.8,431.7 582.4,427.9 583.0,425.2 583.6,423.4 584.2,422.8 584.8,423.2 585.4,424.7 586.1,427.3 586.7,430.9 587.3,435.3 587.9,440.6 588.5,446.4 589.1,452.8 589.7,459.6 590.3,466.6 590.9,473.8 591.6,480.8 592.2,487.8 592.8,494.5 593.4,500.9 594.0,506.9 594.6,512.4 595.2,517.5 595.8,522.0 596.4,526.1 597.1,529.7 597.7,532.9 598.3,535.6 598.9,537.9 599.5,539.9 600.1,541.5 600.7,542.9 601.3,544.0 601.9,544.8 602.6,545.5 603.2,546.1 603.8,546.5 604.4,546.8 605.0,547.1 605.6,547.3 606.2,547.4 606.8,547.5 607.4,547.5 608.1,547.5 608.7,547.6 609.3,547.5 609.9,547.5 610.5,547.5 611.1,547.5 611.7,547.5 612.3,547.4 612.9,547.4 613.5,547.3 614.2,547.3 614.8,547.3 615.4,547.2 616.0,547.2 616.6,547.1 617.2,547.1 617.8,547.1 618.4,547.0 619.0,547.0 619.7,546.9 620.3,546.9 620.9,546.9 621.5,546.8 622.1,546.8 622.7,546.7 623.3,546.7 623.9,546.6 624.5,546.6 625.2,546.6 625.8,546.5 626.4,546.5 627.0,546.4 627.6,546.4 628.2,546.4 628.8,546.3 629.4,546.3 630.0,546.2 630.7,546.2 631.3,546.2 631.9,546.1 632.5,546.1 633.1,546.0 633.7,546.0 634.3,545.9 634.9,545.9 635.5,545.9 636.2,545.8 636.8,545.8 637.4,545.7 638.0,545.7 638.6,545.7 639.2,545.6 639.8,545.6 640.4,545.5 641.0,545.5 641.7,545.5 642.3,545.4 642.9,545.4 643.5,545.3 644.1,545.3 644.7,545.2 645.3,545.2 645.9,545.2 646.5,545.1 647.2,545.1 647.8,545.0 648.4,545.0 649.0,545.0 649.6,544.9 650.2,544.9 650.8,544.8 651.4,544.8 652.0,544.8 652.7,544.7 653.3,544.7 653.9,544.6 654.5,544.6 655.1,544.5 655.7,544.5 656.3,544.5 656.9,544.4" fill="none" stroke="#f00000" stroke-width="1.25" stroke-linejoin="round"/><polyline points="677.2,558.6 678.4,556.8 679.6,554.9 680.9,553.9 682.1,554.1 683.3,554.9 684.5,555.7 685.7,555.9 687.0,557.0 688.2,559.1 689.4,560.7 690.6,560.7 691.9,558.8 693.1,556.3 694.3,554.8 695.5,554.8 696.7,555.0 698.0,555.2 699.2,555.3 700.4,554.0 701.6,551.5 702.9,549.5 704.1,549.0 705.3,548.6 706.5,548.0 707.7,547.5 709.0,547.3 710.2,546.5 711.4,544.5 712.6,542.1 713.9,540.0 715.1,538.7 716.3,538.6 717.5,539.6 718.7,540.2 720.0,540.0 721.2,541.2 722.4,540.4 723.6,539.6 724.8,538.2 726.1,532.5 727.3,525.6 728.5,516.3 729.7,503.5 731.0,487.5 732.2,469.9 733.4,452.3 734.6,432.9 735.8,414.2 737.1,400.0 738.3,392.8 739.5,392.7 740.7,396.8 742.0,404.0 743.2,417.1 744.4,433.0 745.6,448.6 746.8,463.4 748.1,477.6 749.3,491.9 750.5,504.5 751.7,513.6 753.0,520.3 754.2,526.0 755.4,530.6 756.6,532.9 757.8,534.1 759.1,535.8 760.3,538.1 761.5,540.1 762.7,541.2 764.0,541.6 765.2,542.4 766.4,543.5 767.6,544.6 768.8,545.4 770.1,545.8 771.3,545.3 772.5,543.9 773.7,542.4 774.9,541.8 776.2,544.0 777.4,546.8 778.6,547.0 779.8,547.1 781.1,547.4 782.3,547.7 783.5,547.9 784.7,548.1 785.9,548.2 787.2,549.1 788.4,550.6 789.6,552.1 790.8,552.9 792.1,552.8 793.3,552.1 794.5,550.8 795.7,549.4 796.9,548.2 798.2,547.5 799.4,547.4 800.6,547.3 801.8,547.3 803.1,547.2 804.3,547.1 805.5,547.1 806.7,547.0 807.9,547.3 809.2,547.8 810.4,548.2 811.6,548.3" fill="none" stroke="#ffffff" stroke-width="1.3" stroke-linejoin="round"/><polyline points="677.2,556.3 678.4,554.6 679.6,552.8 680.9,551.9 682.1,552.1 683.3,552.9 684.5,553.8 685.7,554.1 687.0,555.2 688.2,557.4 689.4,559.1 690.6,559.1 691.9,557.2 693.1,554.8 694.3,553.4 695.5,553.4 696.7,553.7 698.0,554.0 699.2,554.1 700.4,552.9 701.6,550.5 702.9,548.5 704.1,548.1 705.3,547.7 706.5,547.2 707.7,546.8 709.0,546.6 710.2,545.8 711.4,544.0 712.6,541.7 713.9,539.6 715.1,538.5 716.3,538.6 717.5,539.9 718.7,541.2 720.0,541.8 721.2,544.5 722.4,545.9 723.6,548.3 724.8,551.5 726.1,552.1" fill="none" stroke="#c0c0c0" stroke-width="1.5" stroke-linejoin="round"/><polyline points="726.1,552.1 727.3,553.4 728.5,554.7 729.7,554.6 731.0,553.3 732.2,552.0 733.4,551.4 734.6,548.7 735.8,545.0 737.1,542.9 738.3,544.0 739.5,547.5 740.7,550.2 742.0,551.0 743.2,553.5 744.4,555.5 745.6,555.1 746.8,553.0 748.1,550.6 749.3,549.6 750.5,548.7 751.7,546.6 753.0,544.3 754.2,542.9" fill="none" stroke="#c0c0c0" stroke-width="1.5" stroke-linejoin="round" stroke-dasharray="1.6 1.8"/><polyline points="754.2,542.9 755.4,542.5 756.6,541.1 757.8,540.0 759.1,540.1 760.3,541.3 761.5,542.8 762.7,543.6 764.0,543.8 765.2,544.6 766.4,545.7 767.6,546.8 768.8,547.7 770.1,548.1 771.3,547.7 772.5,546.3 773.7,544.9 774.9,544.4 776.2,546.6 777.4,549.4 778.6,549.7 779.8,549.9 781.1,550.2 782.3,550.6 783.5,550.9 784.7,551.1 785.9,551.2 787.2,552.2 788.4,553.8 789.6,555.3 790.8,556.2 792.1,556.2 793.3,555.5 794.5,554.3 795.7,553.0 796.9,551.8 798.2,551.2 799.4,551.1 800.6,551.1 801.8,551.1 803.1,551.1 804.3,551.1 805.5,551.1 806.7,551.1 807.9,551.5 809.2,552.0 810.4,552.4 811.6,552.6" fill="none" stroke="#c0c0c0" stroke-width="1.5" stroke-linejoin="round"/><polyline points="670.5,552.5 671.1,552.5 671.7,552.4 672.3,552.4 672.9,552.4 673.5,552.3 674.1,552.3 674.7,552.3 675.4,552.2 676.0,552.2 676.6,552.2 677.2,552.2 677.8,552.1 678.4,552.1 679.0,552.1 679.6,552.0 680.2,552.0 680.9,552.0 681.5,551.9 682.1,551.9 682.7,551.9 683.3,551.9 683.9,551.8 684.5,551.8 685.1,551.8 685.7,551.7 686.4,551.7 687.0,551.7 687.6,551.6 688.2,551.6 688.8,551.6 689.4,551.6 690.0,551.5 690.6,551.5 691.2,551.5 691.9,551.4 692.5,551.4 693.1,551.4 693.7,551.3 694.3,551.3 694.9,551.3 695.5,551.3 696.1,551.2 696.7,551.2 697.4,551.2 698.0,551.1 698.6,551.1 699.2,551.1 699.8,551.1 700.4,551.0 701.0,551.0 701.6,551.0 702.2,550.9 702.9,550.9 703.5,550.9 704.1,550.8 704.7,550.8 705.3,550.8 705.9,550.8 706.5,550.7 707.1,550.7 707.7,550.7 708.4,550.6 709.0,550.6 709.6,550.6 710.2,550.5 710.8,550.5 711.4,550.5 712.0,550.4 712.6,550.4 713.2,550.3 713.9,550.3 714.5,550.2 715.1,550.1 715.7,550.0 716.3,549.9 716.9,549.7 717.5,549.5 718.1,549.3 718.7,549.0 719.3,548.6 720.0,548.0 720.6,547.4 721.2,546.6 721.8,545.6 722.4,544.4 723.0,543.0 723.6,541.2 724.2,539.1 724.8,536.6 725.5,533.7 726.1,530.3 726.7,526.5 727.3,522.0 727.9,517.1 728.5,511.5 729.1,505.4 729.7,498.8 730.3,491.6 731.0,484.0 731.6,476.0 732.2,467.8 732.8,459.3 733.4,450.8 734.0,442.4 734.6,434.2 735.2,426.4 735.8,419.2 736.5,412.6 737.1,407.0 737.7,402.3 738.3,398.7 738.9,396.3 739.5,395.1 740.1,395.2 740.7,396.6 741.3,399.2 742.0,402.9 742.6,407.7 743.2,413.5 743.8,420.2 744.4,427.4 745.0,435.3 745.6,443.5 746.2,451.9 746.8,460.3 747.5,468.7 748.1,476.9 748.7,484.7 749.3,492.2 749.9,499.2 750.5,505.7 751.1,511.6 751.7,516.9 752.3,521.7 753.0,526.0 753.6,529.7 754.2,532.9 754.8,535.7 755.4,538.0 756.0,540.0 756.6,541.6 757.2,543.0 757.8,544.1 758.5,544.9 759.1,545.7 759.7,546.2 760.3,546.6 760.9,547.0 761.5,547.2 762.1,547.4 762.7,547.5 763.3,547.6 764.0,547.7 764.6,547.7 765.2,547.7 765.8,547.7 766.4,547.7 767.0,547.7 767.6,547.7 768.2,547.7 768.8,547.7 769.5,547.6 770.1,547.6 770.7,547.6 771.3,547.6 771.9,547.5 772.5,547.5 773.1,547.5 773.7,547.4 774.3,547.4 774.9,547.4 775.6,547.3 776.2,547.3 776.8,547.3 777.4,547.3 778.0,547.2 778.6,547.2 779.2,547.2 779.8,547.1 780.4,547.1 781.1,547.1 781.7,547.0 782.3,547.0 782.9,547.0 783.5,547.0 784.1,546.9 784.7,546.9 785.3,546.9 785.9,546.8 786.6,546.8 787.2,546.8 787.8,546.7 788.4,546.7 789.0,546.7 789.6,546.7 790.2,546.6 790.8,546.6 791.4,546.6 792.1,546.5 792.7,546.5 793.3,546.5 793.9,546.5 794.5,546.4 795.1,546.4 795.7,546.4 796.3,546.3 796.9,546.3 797.6,546.3 798.2,546.2 798.8,546.2 799.4,546.2 800.0,546.2 800.6,546.1 801.2,546.1 801.8,546.1 802.4,546.0 803.1,546.0 803.7,546.0 804.3,545.9 804.9,545.9 805.5,545.9 806.1,545.9 806.7,545.8 807.3,545.8 807.9,545.8 808.6,545.7 809.2,545.7 809.8,545.7 810.4,545.6 811.0,545.6 811.6,545.6 812.2,545.6 812.8,545.5 813.4,545.5 814.1,545.5 814.7,545.4 815.3,545.4 815.9,545.4 816.5,545.3 817.1,545.3 817.7,545.3 818.3,545.3" fill="none" stroke="#18e818" stroke-width="1.25" stroke-linejoin="round"/><text x="666.5" y="394.8" font-size="10.6" fill="#fff" text-anchor="start" textLength="79.0" lengthAdjust="spacingAndGlyphs">free HPBW: CORR</text><text x="759.5" y="394.8" font-size="10.6" fill="#fff" text-anchor="start" textLength="27.0" lengthAdjust="spacingAndGlyphs">−1.37</text><text x="824.1" y="394.8" font-size="10.6" fill="#fff" text-anchor="end" textLength="19.5" lengthAdjust="spacingAndGlyphs">6.20</text><text x="823.6" y="566.0" font-size="10" fill="#fff" text-anchor="end" textLength="118.5" lengthAdjust="spacingAndGlyphs">q  343225246639849986−</text><text x="871.5" y="351.8" font-size="10.5" fill="#fff" text-anchor="start" textLength="27.5" lengthAdjust="spacingAndGlyphs">G34.3</text><text x="934.5" y="351.8" font-size="10.5" fill="#fff" text-anchor="start" textLength="75.0" lengthAdjust="spacingAndGlyphs">#0214 MRT 30m</text><text x="1018.2" y="351.8" font-size="10.5" fill="#fff" text-anchor="start" textLength="119.6" lengthAdjust="spacingAndGlyphs">20101216 e3vll continuum</text><text x="871.5" y="361.1" font-size="8.6" fill="#fff" text-anchor="start" textLength="220.8" lengthAdjust="spacingAndGlyphs">freq. 267.55700GHz  Az 110.70−111.13 El 27.08−27.48deg</text><text x="1164.2" y="361.1" font-size="8.6" fill="#fff" text-anchor="start" textLength="9.0" lengthAdjust="spacingAndGlyphs">RC</text><text x="1193.3" y="361.1" font-size="8.6" fill="#fff" text-anchor="end">4</text><text x="893.2" y="367.8" font-size="7.4" fill="#fff" text-anchor="start" textLength="115.7" lengthAdjust="spacingAndGlyphs">COL*: old   −2.40 new   −1.22</text><text x="1055.6" y="367.8" font-size="7.4" fill="#fff" text-anchor="start" textLength="113.4" lengthAdjust="spacingAndGlyphs">NULE: old   10.00 new    6.17</text><text x="871.5" y="375.1" font-size="7.4" fill="#fff" text-anchor="start" textLength="157.2" lengthAdjust="spacingAndGlyphs">C   1.18     H  0.32447E+04 FWHM   12.10</text><text x="1034.1" y="375.1" font-size="7.4" fill="#fff" text-anchor="start" textLength="157.3" lengthAdjust="spacingAndGlyphs">C   −3.83     H  0.38785E+04 FWHM   12.35</text><rect x="871.0" y="379.3" width="160.5" height="193.3" fill="none" stroke="#fff" stroke-width="1.1"/><path d="M878.1 572.6 v-2 M878.1 379.3 v2 M890.2 572.6 v-3.5 M890.2 379.3 v3.5 M902.4 572.6 v-2 M902.4 379.3 v2 M914.5 572.6 v-2 M914.5 379.3 v2 M926.7 572.6 v-2 M926.7 379.3 v2 M938.9 572.6 v-2 M938.9 379.3 v2 M951.0 572.6 v-3.5 M951.0 379.3 v3.5 M963.1 572.6 v-2 M963.1 379.3 v2 M975.3 572.6 v-2 M975.3 379.3 v2 M987.5 572.6 v-2 M987.5 379.3 v2 M999.6 572.6 v-2 M999.6 379.3 v2 M1011.8 572.6 v-3.5 M1011.8 379.3 v3.5 M1023.9 572.6 v-2 M1023.9 379.3 v2 M871.0 567.3 h1.6 M1031.5 567.3 h-1.6 M871.0 559.4 h1.6 M1031.5 559.4 h-1.6 M871.0 551.5 h2.7 M1031.5 551.5 h-2.7 M871.0 543.6 h1.6 M1031.5 543.6 h-1.6 M871.0 535.7 h1.6 M1031.5 535.7 h-1.6 M871.0 527.9 h1.6 M1031.5 527.9 h-1.6 M871.0 520.0 h1.6 M1031.5 520.0 h-1.6 M871.0 512.1 h2.7 M1031.5 512.1 h-2.7 M871.0 504.2 h1.6 M1031.5 504.2 h-1.6 M871.0 496.3 h1.6 M1031.5 496.3 h-1.6 M871.0 488.5 h1.6 M1031.5 488.5 h-1.6 M871.0 480.6 h1.6 M1031.5 480.6 h-1.6 M871.0 472.7 h2.7 M1031.5 472.7 h-2.7 M871.0 464.8 h1.6 M1031.5 464.8 h-1.6 M871.0 456.9 h1.6 M1031.5 456.9 h-1.6 M871.0 449.1 h1.6 M1031.5 449.1 h-1.6 M871.0 441.2 h1.6 M1031.5 441.2 h-1.6 M871.0 433.3 h2.7 M1031.5 433.3 h-2.7 M871.0 425.4 h1.6 M1031.5 425.4 h-1.6 M871.0 417.5 h1.6 M1031.5 417.5 h-1.6 M871.0 409.7 h1.6 M1031.5 409.7 h-1.6 M871.0 401.8 h1.6 M1031.5 401.8 h-1.6 M871.0 393.9 h2.7 M1031.5 393.9 h-2.7 M871.0 386.0 h1.6 M1031.5 386.0 h-1.6 " stroke="#fff" stroke-width="1.1" fill="none"/><rect x="1031.5" y="379.3" width="161.79999999999995" height="193.3" fill="none" stroke="#fff" stroke-width="1.1"/><path d="M1039.3 572.6 v-2 M1039.3 379.3 v2 M1051.5 572.6 v-3.5 M1051.5 379.3 v3.5 M1063.6 572.6 v-2 M1063.6 379.3 v2 M1075.8 572.6 v-2 M1075.8 379.3 v2 M1087.9 572.6 v-2 M1087.9 379.3 v2 M1100.0 572.6 v-2 M1100.0 379.3 v2 M1112.2 572.6 v-3.5 M1112.2 379.3 v3.5 M1124.4 572.6 v-2 M1124.4 379.3 v2 M1136.5 572.6 v-2 M1136.5 379.3 v2 M1148.7 572.6 v-2 M1148.7 379.3 v2 M1160.8 572.6 v-2 M1160.8 379.3 v2 M1173.0 572.6 v-3.5 M1173.0 379.3 v3.5 M1185.1 572.6 v-2 M1185.1 379.3 v2 M1031.5 567.3 h1.6 M1193.3 567.3 h-1.6 M1031.5 559.4 h1.6 M1193.3 559.4 h-1.6 M1031.5 551.5 h2.7 M1193.3 551.5 h-2.7 M1031.5 543.6 h1.6 M1193.3 543.6 h-1.6 M1031.5 535.7 h1.6 M1193.3 535.7 h-1.6 M1031.5 527.9 h1.6 M1193.3 527.9 h-1.6 M1031.5 520.0 h1.6 M1193.3 520.0 h-1.6 M1031.5 512.1 h2.7 M1193.3 512.1 h-2.7 M1031.5 504.2 h1.6 M1193.3 504.2 h-1.6 M1031.5 496.3 h1.6 M1193.3 496.3 h-1.6 M1031.5 488.5 h1.6 M1193.3 488.5 h-1.6 M1031.5 480.6 h1.6 M1193.3 480.6 h-1.6 M1031.5 472.7 h2.7 M1193.3 472.7 h-2.7 M1031.5 464.8 h1.6 M1193.3 464.8 h-1.6 M1031.5 456.9 h1.6 M1193.3 456.9 h-1.6 M1031.5 449.1 h1.6 M1193.3 449.1 h-1.6 M1031.5 441.2 h1.6 M1193.3 441.2 h-1.6 M1031.5 433.3 h2.7 M1193.3 433.3 h-2.7 M1031.5 425.4 h1.6 M1193.3 425.4 h-1.6 M1031.5 417.5 h1.6 M1193.3 417.5 h-1.6 M1031.5 409.7 h1.6 M1193.3 409.7 h-1.6 M1031.5 401.8 h1.6 M1193.3 401.8 h-1.6 M1031.5 393.9 h2.7 M1193.3 393.9 h-2.7 M1031.5 386.0 h1.6 M1193.3 386.0 h-1.6 " stroke="#fff" stroke-width="1.1" fill="none"/><text x="866.5" y="554.5" font-size="8.4" fill="#fff" text-anchor="end">0</text><text x="866.5" y="515.1" font-size="8.4" fill="#fff" text-anchor="end">1000</text><text x="866.5" y="475.7" font-size="8.4" fill="#fff" text-anchor="end">2000</text><text x="866.5" y="436.3" font-size="8.4" fill="#fff" text-anchor="end">3000</text><text x="866.5" y="396.9" font-size="8.4" fill="#fff" text-anchor="end">4000</text><text x="890.2" y="584.1" font-size="8.4" fill="#fff" text-anchor="middle">−50</text><text x="951.0" y="584.1" font-size="8.4" fill="#fff" text-anchor="middle">0</text><text x="1011.8" y="584.1" font-size="8.4" fill="#fff" text-anchor="middle">50</text><text x="1051.5" y="584.1" font-size="8.4" fill="#fff" text-anchor="middle">−50</text><text x="1112.2" y="584.1" font-size="8.4" fill="#fff" text-anchor="middle">0</text><text x="1173.0" y="584.1" font-size="8.4" fill="#fff" text-anchor="middle">50</text><text x="951.2" y="592.1" font-size="7.6" fill="#fff" text-anchor="middle" textLength="66.0" lengthAdjust="spacingAndGlyphs">AZ offset [arcsec]</text><text x="1113.9" y="592.1" font-size="7.6" fill="#fff" text-anchor="middle" textLength="65.0" lengthAdjust="spacingAndGlyphs">EL offset [arcsec]</text><text transform="translate(841.0,476.6) rotate(-90)" font-size="7.6" fill="#fff" text-anchor="middle" textLength="65" lengthAdjust="spacingAndGlyphs">Iv [counts/beam]</text><polyline points="884.2,562.2 885.4,560.6 886.6,558.0 887.8,556.7 889.0,555.5 890.2,553.2 891.5,552.0 892.7,552.9 893.9,555.0 895.1,556.2 896.3,556.3 897.5,557.0 898.8,557.7 900.0,558.1 901.2,558.0 902.4,557.6 903.6,557.1 904.8,556.5 906.0,556.2 907.3,556.5 908.5,558.0 909.7,559.7 910.9,560.4 912.1,558.7 913.3,555.4 914.5,553.4 915.8,553.3 917.0,553.2 918.2,553.2 919.4,553.1 920.6,552.9 921.8,552.3 923.1,551.6 924.3,551.2 925.5,550.9 926.7,550.3 927.9,549.6 929.1,549.2 930.3,546.9 931.6,543.3 932.8,541.5 934.0,539.4 935.2,536.5 936.4,536.2 937.6,537.2 938.9,538.6 940.1,534.5 941.3,526.6 942.5,516.7 943.7,504.7 944.9,490.8 946.1,475.7 947.4,459.9 948.6,445.0 949.8,432.3 951.0,423.4 952.2,419.4 953.4,421.1 954.6,428.7 955.9,440.9 957.1,455.0 958.3,470.0 959.5,486.1 960.7,501.5 961.9,514.5 963.1,522.1 964.4,526.1 965.6,530.7 966.8,533.7 968.0,535.9 969.2,538.5 970.4,540.9 971.7,542.9 972.9,544.2 974.1,544.6 975.3,545.4 976.5,546.7 977.7,548.0 978.9,548.9 980.2,549.1 981.4,550.2 982.6,551.1 983.8,550.7 985.0,549.7 986.2,548.8 987.5,548.5 988.7,548.9 989.9,549.9 991.1,551.1 992.3,552.1 993.5,552.6 994.7,552.3 996.0,551.2 997.2,549.7 998.4,548.7 999.6,548.4 1000.8,548.1 1002.0,547.5 1003.2,547.0 1004.5,546.6 1005.7,546.6 1006.9,546.8 1008.1,547.1 1009.3,547.5 1010.5,547.7 1011.8,547.9 1013.0,549.0 1014.2,550.4 1015.4,551.1 1016.6,551.0 1017.8,551.0" fill="none" stroke="#ffffff" stroke-width="1.3" stroke-linejoin="round"/><polyline points="884.2,558.5 885.4,557.1 886.6,554.5 887.8,553.3 889.0,552.2 890.2,549.9 891.5,548.8 892.7,549.9 893.9,552.1 895.1,553.3 896.3,553.5 897.5,554.2 898.8,555.0 900.0,555.5 901.2,555.5 902.4,555.2 903.6,554.7 904.8,554.3 906.0,554.1 907.3,554.4 908.5,556.0 909.7,557.8 910.9,558.6 912.1,557.0 913.3,553.7 914.5,551.8 915.8,551.8 917.0,551.8 918.2,551.8 919.4,551.8 920.6,551.7 921.8,551.2 923.1,550.6 924.3,550.3 925.5,550.1 926.7,549.5 927.9,549.0 929.1,548.8 930.3,546.6 931.6,543.4 932.8,542.0 934.0,540.7 935.2,539.2 936.4,540.8 937.6,544.9 938.9,550.7" fill="none" stroke="#c0c0c0" stroke-width="1.5" stroke-linejoin="round"/><polyline points="938.9,550.7 940.1,552.6 941.3,552.7 942.5,553.0 943.7,553.2 944.9,553.3 946.1,553.1 947.4,552.4 948.6,551.2 949.8,549.9 951.0,548.8 952.2,548.2 953.4,548.3 954.6,549.9 955.9,552.1 957.1,553.3 958.3,553.7 959.5,554.8 960.7,556.0 961.9,556.2 963.1,553.1 964.4,548.4 965.6,546.5 966.8,544.7" fill="none" stroke="#c0c0c0" stroke-width="1.5" stroke-linejoin="round" stroke-dasharray="1.6 1.8"/><polyline points="966.8,544.7 968.0,543.6 969.2,544.1 970.4,545.1 971.7,546.3 972.9,547.1 974.1,547.3 975.3,548.0 976.5,549.3 977.7,550.7 978.9,551.6 980.2,552.0 981.4,553.1 982.6,554.1 983.8,553.7 985.0,552.9 986.2,552.1 987.5,551.8 988.7,552.3 989.9,553.4 991.1,554.6 992.3,555.7 993.5,556.3 994.7,556.1 996.0,555.0 997.2,553.7 998.4,552.7 999.6,552.5 1000.8,552.3 1002.0,551.8 1003.2,551.4 1004.5,551.1 1005.7,551.1 1006.9,551.4 1008.1,551.8 1009.3,552.3 1010.5,552.5 1011.8,552.8 1013.0,554.0 1014.2,555.5 1015.4,556.3 1016.6,556.3 1017.8,556.3" fill="none" stroke="#c0c0c0" stroke-width="1.5" stroke-linejoin="round"/><polyline points="877.5,555.6 878.1,555.5 878.7,555.5 879.3,555.4 879.9,555.4 880.5,555.4 881.1,555.3 881.7,555.3 882.4,555.2 883.0,555.2 883.6,555.2 884.2,555.1 884.8,555.1 885.4,555.0 886.0,555.0 886.6,555.0 887.2,554.9 887.8,554.9 888.4,554.8 889.0,554.8 889.6,554.8 890.2,554.7 890.9,554.7 891.5,554.6 892.1,554.6 892.7,554.5 893.3,554.5 893.9,554.5 894.5,554.4 895.1,554.4 895.7,554.3 896.3,554.3 896.9,554.3 897.5,554.2 898.1,554.2 898.8,554.1 899.4,554.1 900.0,554.1 900.6,554.0 901.2,554.0 901.8,553.9 902.4,553.9 903.0,553.9 903.6,553.8 904.2,553.8 904.8,553.7 905.4,553.7 906.0,553.7 906.7,553.6 907.3,553.6 907.9,553.5 908.5,553.5 909.1,553.4 909.7,553.4 910.3,553.4 910.9,553.3 911.5,553.3 912.1,553.2 912.7,553.2 913.3,553.2 913.9,553.1 914.5,553.1 915.2,553.0 915.8,553.0 916.4,553.0 917.0,552.9 917.6,552.9 918.2,552.8 918.8,552.8 919.4,552.8 920.0,552.7 920.6,552.7 921.2,552.6 921.8,552.6 922.4,552.5 923.1,552.5 923.7,552.5 924.3,552.4 924.9,552.4 925.5,552.3 926.1,552.3 926.7,552.2 927.3,552.2 927.9,552.1 928.5,552.1 929.1,552.0 929.7,551.9 930.3,551.8 931.0,551.6 931.6,551.5 932.2,551.2 932.8,551.0 933.4,550.6 934.0,550.1 934.6,549.6 935.2,548.9 935.8,548.0 936.4,546.8 937.0,545.5 937.6,543.8 938.2,541.8 938.9,539.5 939.5,536.7 940.1,533.4 940.7,529.6 941.3,525.4 941.9,520.6 942.5,515.2 943.1,509.3 943.7,503.0 944.3,496.2 944.9,489.0 945.5,481.6 946.1,474.0 946.7,466.5 947.4,459.1 948.0,451.9 948.6,445.2 949.2,439.2 949.8,433.9 950.4,429.5 951.0,426.1 951.6,423.9 952.2,422.8 952.8,422.9 953.4,424.2 954.0,426.7 954.6,430.3 955.3,434.9 955.9,440.3 956.5,446.5 957.1,453.3 957.7,460.4 958.3,467.8 958.9,475.3 959.5,482.8 960.1,490.0 960.7,497.0 961.3,503.6 961.9,509.7 962.5,515.4 963.1,520.5 963.8,525.1 964.4,529.1 965.0,532.7 965.6,535.7 966.2,538.3 966.8,540.5 967.4,542.3 968.0,543.8 968.6,545.0 969.2,546.0 969.8,546.7 970.4,547.3 971.0,547.8 971.7,548.1 972.3,548.4 972.9,548.6 973.5,548.7 974.1,548.8 974.7,548.8 975.3,548.8 975.9,548.9 976.5,548.8 977.1,548.8 977.7,548.8 978.3,548.8 978.9,548.7 979.6,548.7 980.2,548.7 980.8,548.6 981.4,548.6 982.0,548.6 982.6,548.5 983.2,548.5 983.8,548.4 984.4,548.4 985.0,548.3 985.6,548.3 986.2,548.3 986.8,548.2 987.5,548.2 988.1,548.1 988.7,548.1 989.3,548.1 989.9,548.0 990.5,548.0 991.1,547.9 991.7,547.9 992.3,547.9 992.9,547.8 993.5,547.8 994.1,547.7 994.7,547.7 995.3,547.7 996.0,547.6 996.6,547.6 997.2,547.5 997.8,547.5 998.4,547.5 999.0,547.4 999.6,547.4 1000.2,547.3 1000.8,547.3 1001.4,547.2 1002.0,547.2 1002.6,547.2 1003.2,547.1 1003.9,547.1 1004.5,547.0 1005.1,547.0 1005.7,547.0 1006.3,546.9 1006.9,546.9 1007.5,546.8 1008.1,546.8 1008.7,546.8 1009.3,546.7 1009.9,546.7 1010.5,546.6 1011.1,546.6 1011.8,546.6 1012.4,546.5 1013.0,546.5 1013.6,546.4 1014.2,546.4 1014.8,546.4 1015.4,546.3 1016.0,546.3 1016.6,546.2 1017.2,546.2 1017.8,546.1 1018.4,546.1 1019.0,546.1 1019.6,546.0 1020.3,546.0 1020.9,545.9 1021.5,545.9 1022.1,545.9 1022.7,545.8 1023.3,545.8 1023.9,545.7 1024.5,545.7" fill="none" stroke="#f00000" stroke-width="1.25" stroke-linejoin="round"/><polyline points="1045.4,559.6 1046.6,559.7 1047.8,560.0 1049.0,560.1 1050.2,559.1 1051.5,556.1 1052.7,554.0 1053.9,554.7 1055.1,557.4 1056.3,560.2 1057.5,561.2 1058.7,561.2 1060.0,561.1 1061.2,561.1 1062.4,561.0 1063.6,560.5 1064.8,559.1 1066.0,557.6 1067.2,557.0 1068.5,556.7 1069.7,556.0 1070.9,555.5 1072.1,555.0 1073.3,551.9 1074.5,548.4 1075.8,547.6 1077.0,546.6 1078.2,545.4 1079.4,544.5 1080.6,544.5 1081.8,544.7 1083.0,545.1 1084.3,545.4 1085.5,545.3 1086.7,544.7 1087.9,543.2 1089.1,541.3 1090.3,539.3 1091.5,541.2 1092.8,539.8 1094.0,538.4 1095.2,534.6 1096.4,524.0 1097.6,509.1 1098.8,492.7 1100.0,475.2 1101.3,454.5 1102.5,433.9 1103.7,416.8 1104.9,404.9 1106.1,398.2 1107.3,396.2 1108.6,398.5 1109.8,407.5 1111.0,421.8 1112.2,438.6 1113.4,455.1 1114.6,470.3 1115.8,484.5 1117.1,498.7 1118.3,510.7 1119.5,519.0 1120.7,524.6 1121.9,529.1 1123.1,533.6 1124.4,537.6 1125.6,540.3 1126.8,540.8 1128.0,539.3 1129.2,538.8 1130.4,541.4 1131.6,545.1 1132.9,546.5 1134.1,546.5 1135.3,546.3 1136.5,546.1 1137.7,545.8 1138.9,545.6 1140.1,545.5 1141.4,545.5 1142.6,546.2 1143.8,547.5 1145.0,548.8 1146.2,549.6 1147.4,549.8 1148.7,551.0 1149.9,552.8 1151.1,554.3 1152.3,554.7 1153.5,554.1 1154.7,553.0 1155.9,552.0 1157.2,551.5 1158.4,551.5 1159.6,551.9 1160.8,552.3 1162.0,552.8 1163.2,553.2 1164.4,553.4 1165.7,553.1 1166.9,552.2 1168.1,551.0 1169.3,549.9 1170.5,549.4 1171.7,549.3 1173.0,549.4 1174.2,549.5 1175.4,549.6 1176.6,549.7 1177.8,549.7 1179.0,549.7" fill="none" stroke="#ffffff" stroke-width="1.3" stroke-linejoin="round"/><polyline points="1045.4,557.1 1046.6,557.3 1047.8,557.6 1049.0,557.8 1050.2,556.8 1051.5,553.9 1052.7,551.9 1053.9,552.6 1055.1,555.4 1056.3,558.3 1057.5,559.3 1058.7,559.3 1060.0,559.3 1061.2,559.3 1062.4,559.3 1063.6,558.9 1064.8,557.5 1066.0,556.1 1067.2,555.6 1068.5,555.3 1069.7,554.7 1070.9,554.2 1072.1,553.7 1073.3,550.7 1074.5,547.3 1075.8,546.5 1077.0,545.6 1078.2,544.4 1079.4,543.6 1080.6,543.6 1081.8,543.9 1083.0,544.4 1084.3,544.8 1085.5,545.0 1086.7,544.8 1087.9,544.0 1089.1,543.1 1090.3,542.8 1091.5,547.3 1092.8,549.9 1094.0,553.9" fill="none" stroke="#c0c0c0" stroke-width="1.5" stroke-linejoin="round"/><polyline points="1094.0,553.9 1095.2,557.7 1096.4,556.9 1097.6,554.4 1098.8,552.6 1100.0,551.6 1101.3,548.6 1102.5,545.4 1103.7,544.3 1104.9,545.4 1106.1,547.5 1107.3,549.2 1108.6,549.8 1109.8,551.7 1111.0,554.5 1112.2,556.2 1113.4,555.7 1114.6,553.4 1115.8,550.7 1117.1,549.6 1118.3,548.6 1119.5,546.2 1120.7,543.6 1121.9,542.1" fill="none" stroke="#c0c0c0" stroke-width="1.5" stroke-linejoin="round" stroke-dasharray="1.6 1.8"/><polyline points="1121.9,542.1 1123.1,542.3 1124.4,543.4 1125.6,544.2 1126.8,543.6 1128.0,541.4 1129.2,540.6 1130.4,543.0 1131.6,546.6 1132.9,548.1 1134.1,548.0 1135.3,547.9 1136.5,547.7 1137.7,547.5 1138.9,547.4 1140.1,547.3 1141.4,547.4 1142.6,548.1 1143.8,549.5 1145.0,550.8 1146.2,551.7 1147.4,552.0 1148.7,553.2 1149.9,555.1 1151.1,556.6 1152.3,557.0 1153.5,556.5 1154.7,555.5 1155.9,554.5 1157.2,554.1 1158.4,554.2 1159.6,554.6 1160.8,555.1 1162.0,555.7 1163.2,556.1 1164.4,556.3 1165.7,556.1 1166.9,555.2 1168.1,554.1 1169.3,553.1 1170.5,552.6 1171.7,552.6 1173.0,552.7 1174.2,552.8 1175.4,553.0 1176.6,553.2 1177.8,553.3 1179.0,553.3" fill="none" stroke="#c0c0c0" stroke-width="1.5" stroke-linejoin="round"/><polyline points="1038.7,554.3 1039.3,554.3 1039.9,554.2 1040.5,554.2 1041.1,554.2 1041.7,554.1 1042.3,554.1 1042.9,554.1 1043.6,554.1 1044.2,554.0 1044.8,554.0 1045.4,554.0 1046.0,554.0 1046.6,553.9 1047.2,553.9 1047.8,553.9 1048.4,553.8 1049.0,553.8 1049.6,553.8 1050.2,553.8 1050.8,553.7 1051.5,553.7 1052.1,553.7 1052.7,553.7 1053.3,553.6 1053.9,553.6 1054.5,553.6 1055.1,553.5 1055.7,553.5 1056.3,553.5 1056.9,553.5 1057.5,553.4 1058.1,553.4 1058.7,553.4 1059.3,553.3 1060.0,553.3 1060.6,553.3 1061.2,553.3 1061.8,553.2 1062.4,553.2 1063.0,553.2 1063.6,553.2 1064.2,553.1 1064.8,553.1 1065.4,553.1 1066.0,553.0 1066.6,553.0 1067.2,553.0 1067.9,553.0 1068.5,552.9 1069.1,552.9 1069.7,552.9 1070.3,552.9 1070.9,552.8 1071.5,552.8 1072.1,552.8 1072.7,552.7 1073.3,552.7 1073.9,552.7 1074.5,552.7 1075.1,552.6 1075.8,552.6 1076.4,552.6 1077.0,552.5 1077.6,552.5 1078.2,552.5 1078.8,552.5 1079.4,552.4 1080.0,552.4 1080.6,552.4 1081.2,552.3 1081.8,552.3 1082.4,552.2 1083.0,552.2 1083.6,552.1 1084.3,552.0 1084.9,551.9 1085.5,551.8 1086.1,551.6 1086.7,551.4 1087.3,551.1 1087.9,550.7 1088.5,550.3 1089.1,549.7 1089.7,548.9 1090.3,548.0 1090.9,546.8 1091.5,545.4 1092.2,543.6 1092.8,541.5 1093.4,539.0 1094.0,536.0 1094.6,532.5 1095.2,528.4 1095.8,523.8 1096.4,518.5 1097.0,512.7 1097.6,506.2 1098.2,499.1 1098.8,491.5 1099.4,483.5 1100.0,475.0 1100.7,466.3 1101.3,457.4 1101.9,448.6 1102.5,440.0 1103.1,431.7 1103.7,424.0 1104.3,417.1 1104.9,411.0 1105.5,406.0 1106.1,402.2 1106.7,399.6 1107.3,398.4 1107.9,398.6 1108.6,400.2 1109.2,403.1 1109.8,407.3 1110.4,412.6 1111.0,418.9 1111.6,426.1 1112.2,433.9 1112.8,442.2 1113.4,450.9 1114.0,459.7 1114.6,468.5 1115.2,477.0 1115.8,485.3 1116.5,493.2 1117.1,500.6 1117.7,507.4 1118.3,513.6 1118.9,519.2 1119.5,524.2 1120.1,528.6 1120.7,532.4 1121.3,535.7 1121.9,538.5 1122.5,540.8 1123.1,542.8 1123.7,544.4 1124.4,545.7 1125.0,546.7 1125.6,547.5 1126.2,548.2 1126.8,548.7 1127.4,549.1 1128.0,549.3 1128.6,549.6 1129.2,549.7 1129.8,549.8 1130.4,549.9 1131.0,549.9 1131.6,549.9 1132.2,550.0 1132.9,550.0 1133.5,549.9 1134.1,549.9 1134.7,549.9 1135.3,549.9 1135.9,549.9 1136.5,549.8 1137.1,549.8 1137.7,549.8 1138.3,549.8 1138.9,549.7 1139.5,549.7 1140.1,549.7 1140.8,549.7 1141.4,549.6 1142.0,549.6 1142.6,549.6 1143.2,549.5 1143.8,549.5 1144.4,549.5 1145.0,549.5 1145.6,549.4 1146.2,549.4 1146.8,549.4 1147.4,549.3 1148.0,549.3 1148.7,549.3 1149.3,549.3 1149.9,549.2 1150.5,549.2 1151.1,549.2 1151.7,549.2 1152.3,549.1 1152.9,549.1 1153.5,549.1 1154.1,549.0 1154.7,549.0 1155.3,549.0 1155.9,549.0 1156.5,548.9 1157.2,548.9 1157.8,548.9 1158.4,548.9 1159.0,548.8 1159.6,548.8 1160.2,548.8 1160.8,548.7 1161.4,548.7 1162.0,548.7 1162.6,548.7 1163.2,548.6 1163.8,548.6 1164.4,548.6 1165.1,548.5 1165.7,548.5 1166.3,548.5 1166.9,548.5 1167.5,548.4 1168.1,548.4 1168.7,548.4 1169.3,548.4 1169.9,548.3 1170.5,548.3 1171.1,548.3 1171.7,548.2 1172.3,548.2 1173.0,548.2 1173.6,548.2 1174.2,548.1 1174.8,548.1 1175.4,548.1 1176.0,548.1 1176.6,548.0 1177.2,548.0 1177.8,548.0 1178.4,547.9 1179.0,547.9 1179.6,547.9 1180.2,547.9 1180.8,547.8 1181.5,547.8 1182.1,547.8 1182.7,547.7 1183.3,547.7 1183.9,547.7 1184.5,547.7 1185.1,547.6 1185.7,547.6" fill="none" stroke="#18e818" stroke-width="1.25" stroke-linejoin="round"/><text x="1034.5" y="394.8" font-size="10.6" fill="#fff" text-anchor="start" textLength="79.0" lengthAdjust="spacingAndGlyphs">free HPBW. CORR</text><text x="1127.5" y="394.8" font-size="10.6" fill="#fff" text-anchor="start" textLength="27.0" lengthAdjust="spacingAndGlyphs">−1.22</text><text x="1191.8" y="394.8" font-size="10.6" fill="#fff" text-anchor="end" textLength="19.5" lengthAdjust="spacingAndGlyphs">6.17</text><text x="1191.3" y="566.0" font-size="10" fill="#fff" text-anchor="end" textLength="118.5" lengthAdjust="spacingAndGlyphs">q  363026237839949986−</text><text x="453.5" y="596.0" font-size="8.6" fill="#fff" text-anchor="start" textLength="43.0" lengthAdjust="spacingAndGlyphs">20101026</text></svg>
<div class="a" style="left:5px;top:903px;width:1196px;height:7px;background:#c8c5c8;"></div>
<div class="a" style="left:5px;top:903px;width:1196px;height:1px;background:#dedcde;"></div>
<div class="a" style="left:5px;top:904px;width:13px;height:6px;background:#f0f0f0;"></div>
<div class="a" style="left:238px;top:904px;width:60px;height:6px;background:#ffffff;"></div>
<div class="a" style="left:238.5px;top:907px;width:13.5px;height:4px;background:#fff;border:1px solid #444;border-bottom:0;box-sizing:border-box"></div>
<div class="a" style="left:260px;top:907px;width:36px;height:4px;background:#fff;border:1px solid #444;border-bottom:0;box-sizing:border-box"></div>
<div class="a" style="left:298px;top:904px;width:122px;height:6px;background:#c4c4c4;"></div>
<div class="a" style="left:420px;top:904px;width:61px;height:6px;background:#c9c9c9;"></div>
<div class="a" style="left:481px;top:904px;width:711px;height:6px;background:#d5d1d4;"></div>
<div class="a" style="left:1192px;top:904px;width:9px;height:6px;background:#e9e9e9;"></div>
<svg class="a" style="left:495px;top:908px" width="14" height="2" viewBox="0 0 14 2"><path d="M0 0 h4 l1.5 2 h-4 Z M11 0 h1.5 l-1.8 2 h-1.5 Z" fill="#444"/></svg>
<svg class="a" style="left:696px;top:908px" width="14" height="2" viewBox="0 0 14 2"><path d="M0 0 h4 l1.5 2 h-4 Z M11 0 h1.5 l-1.8 2 h-1.5 Z" fill="#444"/></svg>
</body></html>
